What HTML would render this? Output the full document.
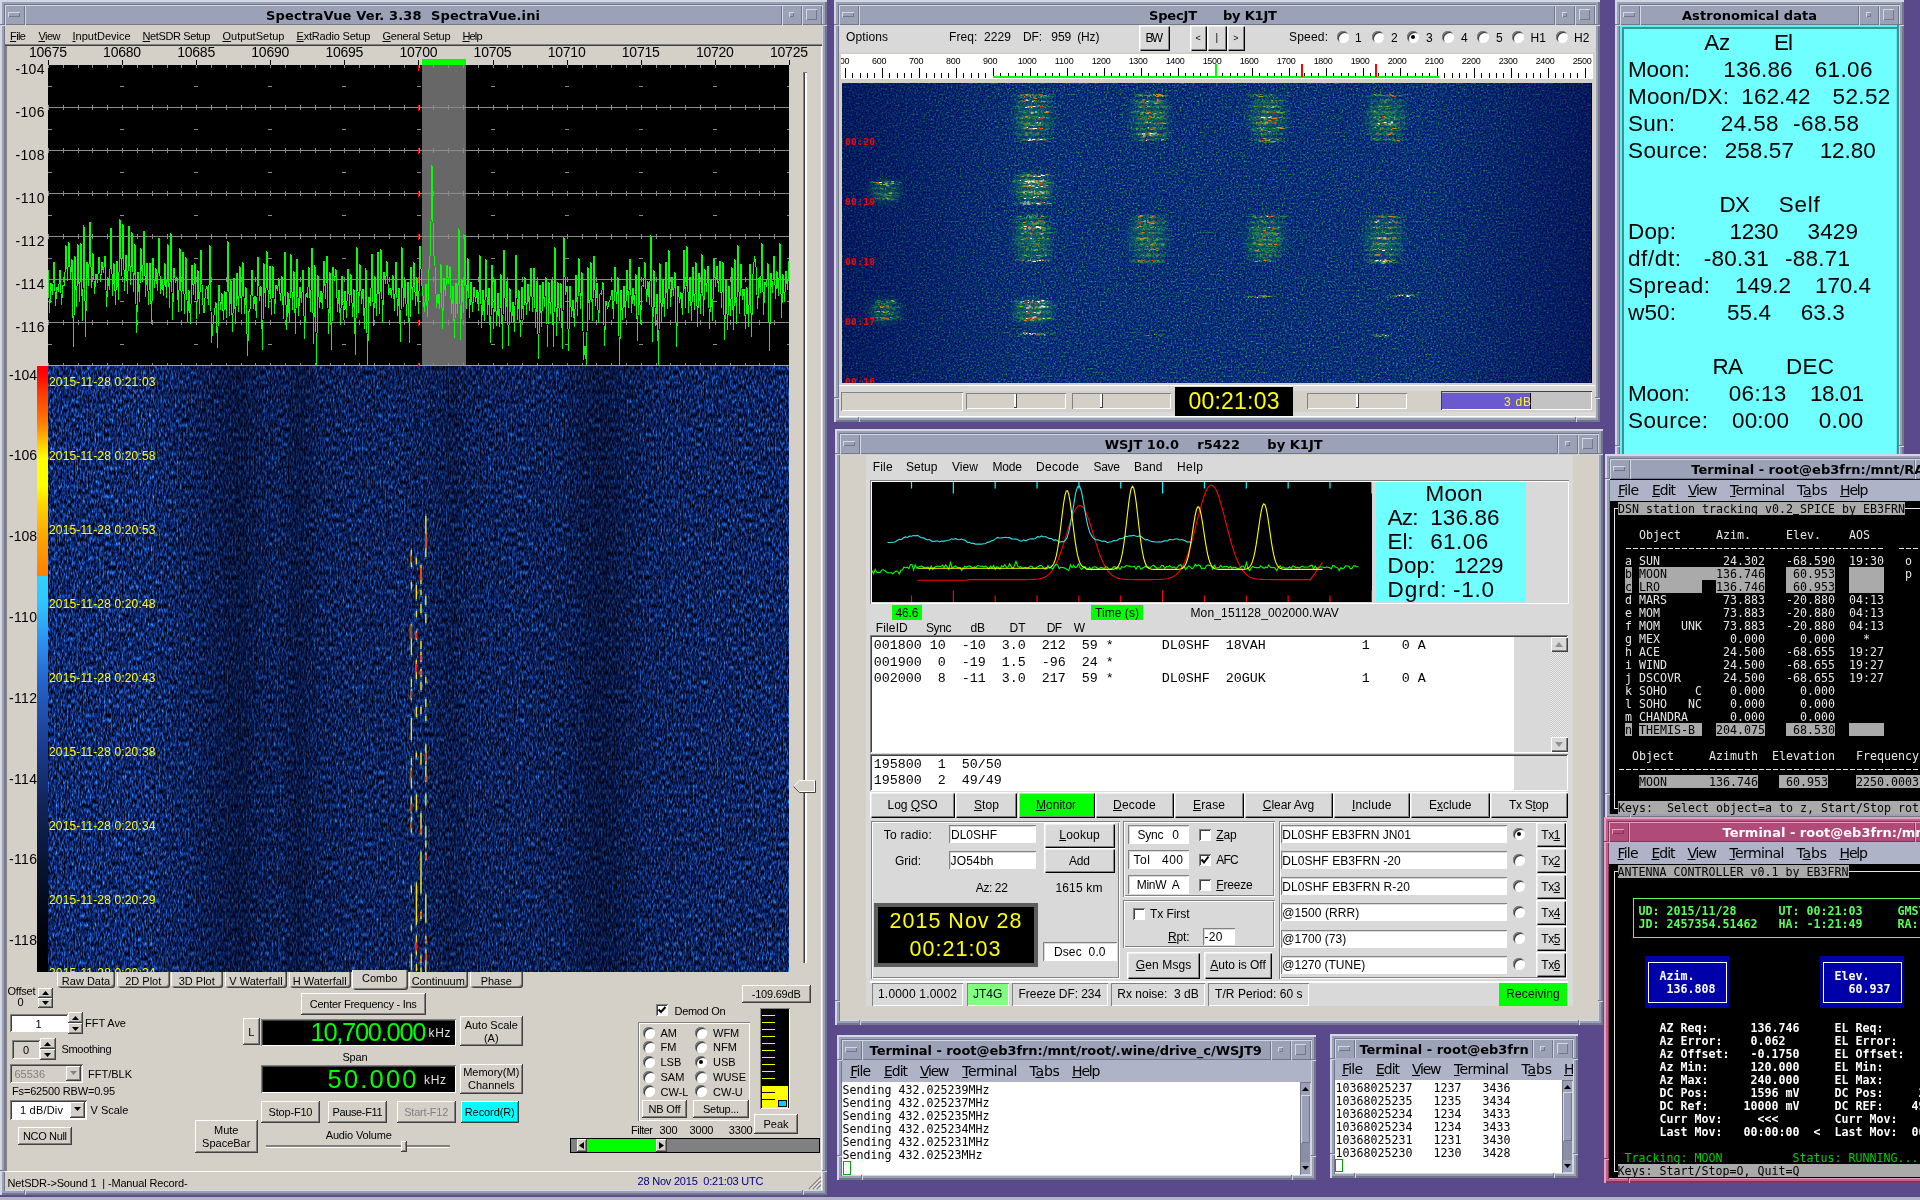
<!DOCTYPE html>
<html lang="en"><head><meta charset="utf-8"><title>Desktop</title>
<style>
html,body{margin:0;padding:0;}
body{width:1920px;height:1200px;overflow:hidden;background:#5a4a8b;position:relative;font-family:"Liberation Sans",sans-serif;}
#scr{position:absolute;left:0;top:0;width:1920px;height:1200px;overflow:hidden;}
#scr div,#scr svg{position:absolute;box-sizing:border-box;}
.t{white-space:pre;color:#000;}
#scr{will-change:transform;}
.sans,.sansb{font-family:"Liberation Sans",sans-serif;}
.sansb{font-weight:bold;}
.dv,.dvb{font-family:"DejaVu Sans",sans-serif;}
.dvb{font-weight:bold;}
.mono,.monob{font-family:"Liberation Mono",monospace;}
.monob{font-weight:bold;}
.dvm,.dvmb{font-family:"DejaVu Sans Mono",monospace;}
.dvmb{font-weight:bold;}
.serif{font-family:"Liberation Serif",serif;}
u{text-decoration:underline;text-underline-offset:1px;}
</style></head>
<body><div id="scr">
<div style="left:0px;top:1197px;width:1920px;height:3px;background:#b2b5c9;"></div>
<div style="left:0px;top:0px;width:827px;height:1195px;background:#9aa0b5;box-shadow:inset 2px 2px 0 #d3d6e3,inset -2px -2px 0 #727889;"></div>
<div style="left:4px;top:4px;width:819px;height:1187px;background:#d4d0c8;box-shadow:inset 1px 1px 0 #727889,inset -1px -1px 0 #d3d6e3;"></div>
<div style="left:0px;top:24px;width:5px;height:1px;background:#727889;"></div>
<div style="left:0px;top:25px;width:5px;height:1px;background:#d3d6e3;"></div>
<div style="left:822px;top:24px;width:5px;height:1px;background:#727889;"></div>
<div style="left:822px;top:25px;width:5px;height:1px;background:#d3d6e3;"></div>
<div style="left:0px;top:1170px;width:5px;height:1px;background:#727889;"></div>
<div style="left:0px;top:1171px;width:5px;height:1px;background:#d3d6e3;"></div>
<div style="left:822px;top:1170px;width:5px;height:1px;background:#727889;"></div>
<div style="left:822px;top:1171px;width:5px;height:1px;background:#d3d6e3;"></div>
<div style="left:24px;top:1190px;width:1px;height:5px;background:#727889;"></div>
<div style="left:25px;top:1190px;width:1px;height:5px;background:#d3d6e3;"></div>
<div style="left:802px;top:1190px;width:1px;height:5px;background:#727889;"></div>
<div style="left:803px;top:1190px;width:1px;height:5px;background:#d3d6e3;"></div>
<div style="left:5px;top:5px;width:817px;height:20px;background:#9ba1b6;"></div>
<div style="left:5px;top:5px;width:20px;height:20px;background:#9ba1b6;box-shadow:inset 1px 1px 0 #d3d6e3,inset -1px -1px 0 #727889;"></div>
<div style="left:8px;top:12px;width:12px;height:5px;background:#9ba1b6;box-shadow:inset 1px 1px 0 #d3d6e3,inset -1px -1px 0 #727889;"></div>
<div style="left:802px;top:5px;width:20px;height:20px;background:#9ba1b6;box-shadow:inset 1px 1px 0 #d3d6e3,inset -1px -1px 0 #727889;"></div>
<div style="left:806px;top:9px;width:11px;height:11px;background:#9ba1b6;box-shadow:inset 1px 1px 0 #d3d6e3,inset -1px -1px 0 #727889;"></div>
<div style="left:782px;top:5px;width:20px;height:20px;background:#9ba1b6;box-shadow:inset 1px 1px 0 #d3d6e3,inset -1px -1px 0 #727889;"></div>
<div style="left:789px;top:12px;width:5px;height:5px;background:#9ba1b6;box-shadow:inset 1px 1px 0 #d3d6e3,inset -1px -1px 0 #727889;"></div>
<div style="left:25px;top:5px;width:757px;height:20px;background:#9ba1b6;box-shadow:inset 1px 1px 0 #d3d6e3,inset -1px -1px 0 #727889;"></div>
<div class="t dvb" style="top:7px;font-size:13px;line-height:17px;letter-spacing:0.13px;left:266px;color:#000000;white-space:pre;">SpectraVue Ver. 3.38  SpectraVue.ini</div>
<div class="t sans" style="top:29px;font-size:11px;line-height:14px;letter-spacing:-0.58px;left:10px;color:#000;"><u>F</u>ile</div>
<div class="t sans" style="top:29px;font-size:11px;line-height:14px;letter-spacing:-0.55px;left:38.5px;color:#000;"><u>V</u>iew</div>
<div class="t sans" style="top:29px;font-size:11px;line-height:14px;left:72.5px;color:#000;"><u>I</u>nputDevice</div>
<div class="t sans" style="top:29px;font-size:11px;line-height:14px;letter-spacing:-0.38px;left:142.5px;color:#000;"><u>N</u>etSDR Setup</div>
<div class="t sans" style="top:29px;font-size:11px;line-height:14px;letter-spacing:0.02px;left:222.5px;color:#000;"><u>O</u>utputSetup</div>
<div class="t sans" style="top:29px;font-size:11px;line-height:14px;letter-spacing:-0.19px;left:296.5px;color:#000;"><u>E</u>xtRadio Setup</div>
<div class="t sans" style="top:29px;font-size:11px;line-height:14px;letter-spacing:-0.24px;left:382.5px;color:#000;"><u>G</u>eneral Setup</div>
<div class="t sans" style="top:29px;font-size:11px;line-height:14px;letter-spacing:-0.87px;left:462.5px;color:#000;"><u>H</u>elp</div>
<div style="left:5px;top:44px;width:817px;height:2px;background:#808080;"></div>
<div style="left:5px;top:45px;width:817px;height:1px;background:#404040;"></div>
<div style="left:5px;top:46px;width:2px;height:1126px;background:#808080;"></div>
<div style="left:821px;top:46px;width:1px;height:1144px;background:#fff;"></div>
<div class="t sans" style="top:43.2px;font-size:14px;line-height:18px;letter-spacing:-0.23px;left:29px;color:#000;">10675</div>
<div style="left:48px;top:60px;width:1px;height:5px;background:#000;"></div>
<div class="t sans" style="top:43.2px;font-size:14px;line-height:18px;letter-spacing:-0.23px;left:103.1px;color:#000;">10680</div>
<div style="left:122px;top:60px;width:1px;height:5px;background:#000;"></div>
<div class="t sans" style="top:43.2px;font-size:14px;line-height:18px;letter-spacing:-0.23px;left:177.2px;color:#000;">10685</div>
<div style="left:196px;top:60px;width:1px;height:5px;background:#000;"></div>
<div class="t sans" style="top:43.2px;font-size:14px;line-height:18px;letter-spacing:-0.23px;left:251.3px;color:#000;">10690</div>
<div style="left:270px;top:60px;width:1px;height:5px;background:#000;"></div>
<div class="t sans" style="top:43.2px;font-size:14px;line-height:18px;letter-spacing:-0.23px;left:325.4px;color:#000;">10695</div>
<div style="left:344px;top:60px;width:1px;height:5px;background:#000;"></div>
<div class="t sans" style="top:43.2px;font-size:14px;line-height:18px;letter-spacing:-0.23px;left:399.5px;color:#000;">10700</div>
<div style="left:418px;top:60px;width:1px;height:5px;background:#000;"></div>
<div class="t sans" style="top:43.2px;font-size:14px;line-height:18px;letter-spacing:-0.23px;left:473.6px;color:#000;">10705</div>
<div style="left:493px;top:60px;width:1px;height:5px;background:#000;"></div>
<div class="t sans" style="top:43.2px;font-size:14px;line-height:18px;letter-spacing:-0.23px;left:547.7px;color:#000;">10710</div>
<div style="left:567px;top:60px;width:1px;height:5px;background:#000;"></div>
<div class="t sans" style="top:43.2px;font-size:14px;line-height:18px;letter-spacing:-0.23px;left:621.8px;color:#000;">10715</div>
<div style="left:641px;top:60px;width:1px;height:5px;background:#000;"></div>
<div class="t sans" style="top:43.2px;font-size:14px;line-height:18px;letter-spacing:-0.23px;left:695.9px;color:#000;">10720</div>
<div style="left:715px;top:60px;width:1px;height:5px;background:#000;"></div>
<div class="t sans" style="top:43.2px;font-size:14px;line-height:18px;letter-spacing:-0.23px;left:770px;color:#000;">10725</div>
<div style="left:789px;top:60px;width:1px;height:5px;background:#000;"></div>
<div class="t sans" style="top:60px;font-size:14px;line-height:18px;letter-spacing:0.33px;left:15.5px;color:#000;">-104</div>
<div class="t sans" style="top:103px;font-size:14px;line-height:18px;letter-spacing:0.33px;left:15.5px;color:#000;">-106</div>
<div class="t sans" style="top:146px;font-size:14px;line-height:18px;letter-spacing:0.33px;left:15.5px;color:#000;">-108</div>
<div class="t sans" style="top:189px;font-size:14px;line-height:18px;letter-spacing:0.67px;left:15.5px;color:#000;">-110</div>
<div class="t sans" style="top:232px;font-size:14px;line-height:18px;letter-spacing:0.67px;left:15.5px;color:#000;">-112</div>
<div class="t sans" style="top:275px;font-size:14px;line-height:18px;letter-spacing:0.67px;left:15.5px;color:#000;">-114</div>
<div class="t sans" style="top:318px;font-size:14px;line-height:18px;letter-spacing:0.67px;left:15.5px;color:#000;">-116</div>
<svg style="left:48px;top:65px" width="741" height="301" viewBox="0 0 741 301" shape-rendering="crispEdges"><rect width="741" height="301" fill="#000"/><rect x="374" y="0" width="44" height="301" fill="#676767"/><path d="M0 42.5 H741 M0.5 40 v5 M15.32 40 v5 M30.14 40 v5 M44.96 40 v5 M59.78 40 v5 M74.6 40 v5 M89.42 40 v5 M104.24 40 v5 M119.06 40 v5 M133.88 40 v5 M148.7 40 v5 M163.52 40 v5 M178.34 40 v5 M193.16 40 v5 M207.98 40 v5 M222.8 40 v5 M237.62 40 v5 M252.44 40 v5 M267.26 40 v5 M282.08 40 v5 M296.9 40 v5 M311.72 40 v5 M326.54 40 v5 M341.36 40 v5 M356.18 40 v5 M371 40 v5 M385.82 40 v5 M400.64 40 v5 M415.46 40 v5 M430.28 40 v5 M445.1 40 v5 M459.92 40 v5 M474.74 40 v5 M489.56 40 v5 M504.38 40 v5 M519.2 40 v5 M534.02 40 v5 M548.84 40 v5 M563.66 40 v5 M578.48 40 v5 M593.3 40 v5 M608.12 40 v5 M622.94 40 v5 M637.76 40 v5 M652.58 40 v5 M667.4 40 v5 M682.22 40 v5 M697.04 40 v5 M711.86 40 v5 M726.68 40 v5 M0 85.5 H741 M0.5 83 v5 M15.32 83 v5 M30.14 83 v5 M44.96 83 v5 M59.78 83 v5 M74.6 83 v5 M89.42 83 v5 M104.24 83 v5 M119.06 83 v5 M133.88 83 v5 M148.7 83 v5 M163.52 83 v5 M178.34 83 v5 M193.16 83 v5 M207.98 83 v5 M222.8 83 v5 M237.62 83 v5 M252.44 83 v5 M267.26 83 v5 M282.08 83 v5 M296.9 83 v5 M311.72 83 v5 M326.54 83 v5 M341.36 83 v5 M356.18 83 v5 M371 83 v5 M385.82 83 v5 M400.64 83 v5 M415.46 83 v5 M430.28 83 v5 M445.1 83 v5 M459.92 83 v5 M474.74 83 v5 M489.56 83 v5 M504.38 83 v5 M519.2 83 v5 M534.02 83 v5 M548.84 83 v5 M563.66 83 v5 M578.48 83 v5 M593.3 83 v5 M608.12 83 v5 M622.94 83 v5 M637.76 83 v5 M652.58 83 v5 M667.4 83 v5 M682.22 83 v5 M697.04 83 v5 M711.86 83 v5 M726.68 83 v5 M0 128.5 H741 M0.5 126 v5 M15.32 126 v5 M30.14 126 v5 M44.96 126 v5 M59.78 126 v5 M74.6 126 v5 M89.42 126 v5 M104.24 126 v5 M119.06 126 v5 M133.88 126 v5 M148.7 126 v5 M163.52 126 v5 M178.34 126 v5 M193.16 126 v5 M207.98 126 v5 M222.8 126 v5 M237.62 126 v5 M252.44 126 v5 M267.26 126 v5 M282.08 126 v5 M296.9 126 v5 M311.72 126 v5 M326.54 126 v5 M341.36 126 v5 M356.18 126 v5 M371 126 v5 M385.82 126 v5 M400.64 126 v5 M415.46 126 v5 M430.28 126 v5 M445.1 126 v5 M459.92 126 v5 M474.74 126 v5 M489.56 126 v5 M504.38 126 v5 M519.2 126 v5 M534.02 126 v5 M548.84 126 v5 M563.66 126 v5 M578.48 126 v5 M593.3 126 v5 M608.12 126 v5 M622.94 126 v5 M637.76 126 v5 M652.58 126 v5 M667.4 126 v5 M682.22 126 v5 M697.04 126 v5 M711.86 126 v5 M726.68 126 v5 M0 171.5 H741 M0.5 169 v5 M15.32 169 v5 M30.14 169 v5 M44.96 169 v5 M59.78 169 v5 M74.6 169 v5 M89.42 169 v5 M104.24 169 v5 M119.06 169 v5 M133.88 169 v5 M148.7 169 v5 M163.52 169 v5 M178.34 169 v5 M193.16 169 v5 M207.98 169 v5 M222.8 169 v5 M237.62 169 v5 M252.44 169 v5 M267.26 169 v5 M282.08 169 v5 M296.9 169 v5 M311.72 169 v5 M326.54 169 v5 M341.36 169 v5 M356.18 169 v5 M371 169 v5 M385.82 169 v5 M400.64 169 v5 M415.46 169 v5 M430.28 169 v5 M445.1 169 v5 M459.92 169 v5 M474.74 169 v5 M489.56 169 v5 M504.38 169 v5 M519.2 169 v5 M534.02 169 v5 M548.84 169 v5 M563.66 169 v5 M578.48 169 v5 M593.3 169 v5 M608.12 169 v5 M622.94 169 v5 M637.76 169 v5 M652.58 169 v5 M667.4 169 v5 M682.22 169 v5 M697.04 169 v5 M711.86 169 v5 M726.68 169 v5 M0 214.5 H741 M0.5 212 v5 M15.32 212 v5 M30.14 212 v5 M44.96 212 v5 M59.78 212 v5 M74.6 212 v5 M89.42 212 v5 M104.24 212 v5 M119.06 212 v5 M133.88 212 v5 M148.7 212 v5 M163.52 212 v5 M178.34 212 v5 M193.16 212 v5 M207.98 212 v5 M222.8 212 v5 M237.62 212 v5 M252.44 212 v5 M267.26 212 v5 M282.08 212 v5 M296.9 212 v5 M311.72 212 v5 M326.54 212 v5 M341.36 212 v5 M356.18 212 v5 M371 212 v5 M385.82 212 v5 M400.64 212 v5 M415.46 212 v5 M430.28 212 v5 M445.1 212 v5 M459.92 212 v5 M474.74 212 v5 M489.56 212 v5 M504.38 212 v5 M519.2 212 v5 M534.02 212 v5 M548.84 212 v5 M563.66 212 v5 M578.48 212 v5 M593.3 212 v5 M608.12 212 v5 M622.94 212 v5 M637.76 212 v5 M652.58 212 v5 M667.4 212 v5 M682.22 212 v5 M697.04 212 v5 M711.86 212 v5 M726.68 212 v5 M0 257.5 H741 M0.5 255 v5 M15.32 255 v5 M30.14 255 v5 M44.96 255 v5 M59.78 255 v5 M74.6 255 v5 M89.42 255 v5 M104.24 255 v5 M119.06 255 v5 M133.88 255 v5 M148.7 255 v5 M163.52 255 v5 M178.34 255 v5 M193.16 255 v5 M207.98 255 v5 M222.8 255 v5 M237.62 255 v5 M252.44 255 v5 M267.26 255 v5 M282.08 255 v5 M296.9 255 v5 M311.72 255 v5 M326.54 255 v5 M341.36 255 v5 M356.18 255 v5 M371 255 v5 M385.82 255 v5 M400.64 255 v5 M415.46 255 v5 M430.28 255 v5 M445.1 255 v5 M459.92 255 v5 M474.74 255 v5 M489.56 255 v5 M504.38 255 v5 M519.2 255 v5 M534.02 255 v5 M548.84 255 v5 M563.66 255 v5 M578.48 255 v5 M593.3 255 v5 M608.12 255 v5 M622.94 255 v5 M637.76 255 v5 M652.58 255 v5 M667.4 255 v5 M682.22 255 v5 M697.04 255 v5 M711.86 255 v5 M726.68 255 v5 M0.5 0 v3 M0.5 301 v-3 M15.32 0 v3 M15.32 301 v-3 M30.14 0 v3 M30.14 301 v-3 M44.96 0 v3 M44.96 301 v-3 M59.78 0 v3 M59.78 301 v-3 M74.6 0 v3 M74.6 301 v-3 M89.42 0 v3 M89.42 301 v-3 M104.24 0 v3 M104.24 301 v-3 M119.06 0 v3 M119.06 301 v-3 M133.88 0 v3 M133.88 301 v-3 M148.7 0 v3 M148.7 301 v-3 M163.52 0 v3 M163.52 301 v-3 M178.34 0 v3 M178.34 301 v-3 M193.16 0 v3 M193.16 301 v-3 M207.98 0 v3 M207.98 301 v-3 M222.8 0 v3 M222.8 301 v-3 M237.62 0 v3 M237.62 301 v-3 M252.44 0 v3 M252.44 301 v-3 M267.26 0 v3 M267.26 301 v-3 M282.08 0 v3 M282.08 301 v-3 M296.9 0 v3 M296.9 301 v-3 M311.72 0 v3 M311.72 301 v-3 M326.54 0 v3 M326.54 301 v-3 M341.36 0 v3 M341.36 301 v-3 M356.18 0 v3 M356.18 301 v-3 M371 0 v3 M371 301 v-3 M385.82 0 v3 M385.82 301 v-3 M400.64 0 v3 M400.64 301 v-3 M415.46 0 v3 M415.46 301 v-3 M430.28 0 v3 M430.28 301 v-3 M445.1 0 v3 M445.1 301 v-3 M459.92 0 v3 M459.92 301 v-3 M474.74 0 v3 M474.74 301 v-3 M489.56 0 v3 M489.56 301 v-3 M504.38 0 v3 M504.38 301 v-3 M519.2 0 v3 M519.2 301 v-3 M534.02 0 v3 M534.02 301 v-3 M548.84 0 v3 M548.84 301 v-3 M563.66 0 v3 M563.66 301 v-3 M578.48 0 v3 M578.48 301 v-3 M593.3 0 v3 M593.3 301 v-3 M608.12 0 v3 M608.12 301 v-3 M622.94 0 v3 M622.94 301 v-3 M637.76 0 v3 M637.76 301 v-3 M652.58 0 v3 M652.58 301 v-3 M667.4 0 v3 M667.4 301 v-3 M682.22 0 v3 M682.22 301 v-3 M697.04 0 v3 M697.04 301 v-3 M711.86 0 v3 M711.86 301 v-3 M726.68 0 v3 M726.68 301 v-3 M0 21.5 h4 M72.1 21.5 h4 M146.2 21.5 h4 M220.3 21.5 h4 M294.4 21.5 h4 M368.5 21.5 h4 M442.6 21.5 h4 M516.7 21.5 h4 M590.8 21.5 h4 M664.9 21.5 h4 M739 21.5 h4 M0 64.5 h4 M72.1 64.5 h4 M146.2 64.5 h4 M220.3 64.5 h4 M294.4 64.5 h4 M368.5 64.5 h4 M442.6 64.5 h4 M516.7 64.5 h4 M590.8 64.5 h4 M664.9 64.5 h4 M739 64.5 h4 M0 107.5 h4 M72.1 107.5 h4 M146.2 107.5 h4 M220.3 107.5 h4 M294.4 107.5 h4 M368.5 107.5 h4 M442.6 107.5 h4 M516.7 107.5 h4 M590.8 107.5 h4 M664.9 107.5 h4 M739 107.5 h4 M0 150.5 h4 M72.1 150.5 h4 M146.2 150.5 h4 M220.3 150.5 h4 M294.4 150.5 h4 M368.5 150.5 h4 M442.6 150.5 h4 M516.7 150.5 h4 M590.8 150.5 h4 M664.9 150.5 h4 M739 150.5 h4 M0 193.5 h4 M72.1 193.5 h4 M146.2 193.5 h4 M220.3 193.5 h4 M294.4 193.5 h4 M368.5 193.5 h4 M442.6 193.5 h4 M516.7 193.5 h4 M590.8 193.5 h4 M664.9 193.5 h4 M739 193.5 h4 M0 236.5 h4 M72.1 236.5 h4 M146.2 236.5 h4 M220.3 236.5 h4 M294.4 236.5 h4 M368.5 236.5 h4 M442.6 236.5 h4 M516.7 236.5 h4 M590.8 236.5 h4 M664.9 236.5 h4 M739 236.5 h4 M0 279.5 h4 M72.1 279.5 h4 M146.2 279.5 h4 M220.3 279.5 h4 M294.4 279.5 h4 M368.5 279.5 h4 M442.6 279.5 h4 M516.7 279.5 h4 M590.8 279.5 h4 M664.9 279.5 h4 M739 279.5 h4" stroke="#8c8c8c" stroke-width="1" fill="none"/><path d="M0 300.5H741" stroke="#a0a0a0" stroke-width="1" fill="none"/><path d="M370.5 0 v6 M370.5 40 v6 M370.5 83 v6 M370.5 126 v6 M370.5 169 v6 M370.5 212 v6 M370.5 255 v6 M370.5 298 v6" stroke="#ff0000" stroke-width="1" fill="none"/><polyline points="0,204.72 1.5,247.63 3,218.19 4.5,229.47 6,196.94 7.5,241.07 9,222.21 10.5,226.52 12,205.06 13.5,239.62 15,220.16 16.5,220.64 18,180.48 19.5,215.74 21,177.32 22.5,214.19 24,193.91 25.5,281.65 27,191.3 28.5,242.08 30,179.43 31.5,237.19 33,178.12 34.5,256.03 36,160.44 37.5,271.87 39,196.89 40.5,220.88 42,156.68 43.5,223.36 45,188.35 46.5,228.57 48,209.44 49.5,217.57 51,191.68 52.5,216.77 54,196.89 55.5,208.3 57,190.72 58.5,242.31 60,213.2 61.5,224.74 63,162.55 64.5,230.69 66,198.36 67.5,239.54 69,196.06 70.5,235.22 72,154.5 73.5,211.39 75,159.19 76.5,225.97 78,189.7 79.5,229.26 81,160.81 82.5,219.69 84,167.22 85.5,226.54 87,179.17 88.5,268.28 90,206.57 91.5,236.84 93,183.27 94.5,217.48 96,165.62 97.5,231.88 99,198.02 100.5,240.13 102,197.56 103.5,259.1 105,192.61 106.5,223.19 108,203.32 109.5,226.06 111,172.53 112.5,228.79 114,214.04 115.5,230.96 117,198.19 118.5,232.71 120,179.46 121.5,242.99 123,168.34 124.5,255.1 126,202.7 127.5,218.28 129,212.22 130.5,246.68 132,183.05 133.5,246.47 135,186.52 136.5,249.01 138,192.38 139.5,256.84 141,225.45 142.5,259.22 144,200.15 145.5,229.84 147,198.45 148.5,253.78 150,205.2 151.5,248.52 153,184.57 154.5,235.93 156,248.11 157.5,225.7 159,221.46 160.5,240.08 162,180.42 163.5,278.22 165,259.07 166.5,246 168,237.46 169.5,283.48 171,219.53 172.5,244.64 174,228.46 175.5,254.56 177,226.32 178.5,252.9 180,175.95 181.5,251.3 183,215.51 184.5,266.51 186,212.8 187.5,258.87 189,207.72 190.5,247.05 192,201.45 193.5,248.54 195,197.06 196.5,248.87 198,222.23 199.5,291.24 201,246.61 202.5,242.78 204,205.01 205.5,244.22 207,230.58 208.5,253.02 210,191.72 211.5,235.77 213,221.4 214.5,284.91 216,198.42 217.5,241.93 219,186.5 220.5,243.37 222,200.64 223.5,250.08 225,201.16 226.5,248.95 228,220.06 229.5,225.69 231,213.36 232.5,236.46 234,211.14 235.5,254.33 237,186.69 238.5,265.39 240,227.33 241.5,257.41 243,189.29 244.5,245.21 246,206.13 247.5,268.96 249,193.74 250.5,250.79 252,222.24 253.5,238.31 255,204.54 256.5,273.51 258,228.53 259.5,232.81 261,202.2 262.5,247.23 264,182.54 265.5,279.02 267,199.71 268.5,300 270,210.27 271.5,242.54 273,225.65 274.5,244.45 276,196.14 277.5,233.55 279,190.53 280.5,269.49 282,207.19 283.5,284.65 285,201.8 286.5,215.77 288,204.28 289.5,246.94 291,224.94 292.5,259.9 294,210.81 295.5,254.67 297,225.76 298.5,252.73 300,204.08 301.5,241.29 303,209.29 304.5,251.83 306,224.5 307.5,290.24 309,181.96 310.5,247.63 312,199.28 313.5,238.99 315,223.75 316.5,263.68 318,203.08 319.5,300 321,232.31 322.5,241.09 324,188.73 325.5,260.62 327,211.48 328.5,251.3 330,186.86 331.5,248.98 333,183.94 334.5,258.42 336,207.38 337.5,219.2 339,196.27 340.5,229.79 342,223.11 343.5,233.33 345,210.17 346.5,245.56 348,196.75 349.5,250.79 351,222.82 352.5,277.3 354,181.96 355.5,242.23 357,215.04 358.5,251.14 360,216.76 361.5,278.33 363,202.03 364.5,234.88 366,197.5 367.5,240.99 369,212.25 370.5,249.03 372,181.09 373.5,215.55 375,230.54 376.5,247.32 378,218.59 379.5,252.38 381,204.14 382.5,185 384,100 385.5,185 387,201.13 388.5,243.08 390,228.85 391.5,243.71 393,199.26 394.5,263.8 396,213.05 397.5,230.79 399,199.83 400.5,218.72 402,201.23 403.5,249.27 405,220.76 406.5,272.63 408,217.6 409.5,249.25 411,163.48 412.5,275.18 414,214.25 415.5,248.2 417,169.6 418.5,243.67 420,193.18 421.5,252.84 423,216.62 424.5,247.05 426,221.72 427.5,236.84 429,224.57 430.5,246.23 432,189.91 433.5,263.36 435,225.17 436.5,256.25 438,194.14 439.5,249.69 441,222.86 442.5,278.17 444,199.65 445.5,264.46 447,213.65 448.5,261.29 450,227.6 451.5,262.3 453,208.92 454.5,283.72 456,184.62 457.5,255.79 459,216.29 460.5,280.53 462,223.46 463.5,258.12 465,236.83 466.5,267.45 468,189.53 469.5,254.56 471,225.33 472.5,271.98 474,221.75 475.5,255.17 477,212.5 478.5,250.17 480,218.93 481.5,245.82 483,202.78 484.5,246.96 486,202.81 487.5,263.16 489,216.23 490.5,294.21 492,220.08 493.5,261.75 495,217.06 496.5,241.72 498,212.03 499.5,281.78 501,217.32 502.5,248.74 504,214.86 505.5,281.52 507,181.9 508.5,271.16 510,217.35 511.5,256.34 513,217.96 514.5,284.09 516,172.28 517.5,230.34 519,220.68 520.5,286.12 522,221 523.5,251.93 525,234.73 526.5,261.74 528,210 529.5,250.99 531,193.03 532.5,243.87 534,207.44 535.5,295.09 537,281.28 538.5,300 540,202.29 541.5,254.86 543,197.3 544.5,256.14 546,190.7 547.5,241.25 549,217.89 550.5,257.52 552,228.98 553.5,229.06 555,217.2 556.5,280.76 558,235.63 559.5,244.02 561,237.08 562.5,234.21 564,224.65 565.5,253.71 567,202.03 568.5,239.03 570,211.9 571.5,300 573,224.81 574.5,254.52 576,220.59 577.5,252.54 579,204.64 580.5,242.49 582,193.71 583.5,247.91 585,222.88 586.5,240.49 588,209.05 589.5,276.16 591,201.86 592.5,258.57 594,220.61 595.5,221.48 597,197.19 598.5,236.87 600,216.4 601.5,239.67 603,169.89 604.5,276.6 606,205.07 607.5,260.5 609,228.74 610.5,300 612,198.06 613.5,256.68 615,213.96 616.5,251.75 618,196.96 619.5,243.94 621,185.05 622.5,241.9 624,211.9 625.5,231.37 627,206.93 628.5,281.58 630,220.94 631.5,237.7 633,227.43 634.5,250.39 636,184.68 637.5,242.59 639,181.17 640.5,248.44 642,211.6 643.5,255.62 645,201.55 646.5,245.12 648,197.5 649.5,261.67 651,207.63 652.5,248.97 654,189.13 655.5,251.02 657,204.32 658.5,227.02 660,200.55 661.5,263.96 663,215.07 664.5,255.51 666,193.69 667.5,222.08 669,200.88 670.5,226.49 672,196.02 673.5,242.56 675,197.32 676.5,275.43 678,214.55 679.5,264.99 681,220.74 682.5,250.73 684,202.18 685.5,265.43 687,193.9 688.5,258.81 690,179.97 691.5,248.74 693,198.81 694.5,234.85 696,224.05 697.5,263.88 699,222.25 700.5,261.89 702,198.62 703.5,272.08 705,209.14 706.5,190.57 708,201.9 709.5,243.9 711,212.64 712.5,228.31 714,178.44 715.5,249.99 717,216.74 718.5,222.12 720,197.91 721.5,286.01 723,207.74 724.5,228.36 726,190.97 727.5,233.77 729,206.46 730.5,231.12 732,178.35 733.5,253.03 735,209.48 736.5,237.44 738,205.95 739.5,225.44 741,196.19" stroke="#00ff00" stroke-width="1" fill="none" shape-rendering="crispEdges"/></svg>
<div style="left:422px;top:59px;width:44px;height:6px;background:#00ff00;"></div>
<svg style="left:48px;top:366px" width="741" height="606" viewBox="0 0 741 606"><defs><filter id="wfn" x="0" y="0" width="100%" height="100%" color-interpolation-filters="sRGB"><feTurbulence type="fractalNoise" baseFrequency="0.62 0.21" numOctaves="2" seed="11" result="n"/><feColorMatrix in="n" type="matrix" values="1 0 0 0 0  1 0 0 0 0  1 0 0 0 0  0 0 0 0 1"/><feComponentTransfer><feFuncR type="table" tableValues="0 0 0 0 0.02 0.05 0.09 0.13 0.17 0.2 0.2"/><feFuncG type="table" tableValues="0 0 0.01 0.03 0.08 0.15 0.25 0.36 0.55 0.75 0.8"/><feFuncB type="table" tableValues="0 0.01 0.05 0.12 0.25 0.41 0.59 0.77 0.95 1 1"/></feComponentTransfer></filter><linearGradient id="wfs" x1="0" x2="1" y1="0" y2="0"><stop offset="0.0000" stop-color="#000418" stop-opacity="0.00"/><stop offset="0.1377" stop-color="#000418" stop-opacity="0.02"/><stop offset="0.1849" stop-color="#000418" stop-opacity="0.18"/><stop offset="0.2254" stop-color="#000418" stop-opacity="0.36"/><stop offset="0.2591" stop-color="#000418" stop-opacity="0.50"/><stop offset="0.2888" stop-color="#000418" stop-opacity="0.30"/><stop offset="0.3131" stop-color="#000418" stop-opacity="0.26"/><stop offset="0.3374" stop-color="#000418" stop-opacity="0.48"/><stop offset="0.3644" stop-color="#000418" stop-opacity="0.28"/><stop offset="0.4008" stop-color="#000418" stop-opacity="0.20"/><stop offset="0.4750" stop-color="#000418" stop-opacity="0.18"/><stop offset="0.5223" stop-color="#000418" stop-opacity="0.28"/><stop offset="0.5452" stop-color="#000418" stop-opacity="0.40"/><stop offset="0.5722" stop-color="#000418" stop-opacity="0.22"/><stop offset="0.6370" stop-color="#000418" stop-opacity="0.18"/><stop offset="0.6910" stop-color="#000418" stop-opacity="0.25"/><stop offset="0.7247" stop-color="#000418" stop-opacity="0.42"/><stop offset="0.7517" stop-color="#000418" stop-opacity="0.50"/><stop offset="0.7827" stop-color="#000418" stop-opacity="0.34"/><stop offset="0.8124" stop-color="#000418" stop-opacity="0.20"/><stop offset="0.8799" stop-color="#000418" stop-opacity="0.14"/><stop offset="0.9474" stop-color="#000418" stop-opacity="0.12"/><stop offset="1.0000" stop-color="#000418" stop-opacity="0.10"/></linearGradient></defs><rect width="741" height="606" fill="#0c2c74"/><rect width="741" height="606" filter="url(#wfn)"/><rect width="741" height="606" fill="url(#wfs)"/><path d="M377.8 148v45 M363.4 182v21 M368.4 190v10 M373 197v23 M373 222v9 M363.4 214v11 M368.4 217v18 M377.8 228v13 M373 236v13 M368.4 243v10 M377.8 246v13 M363.4 256v35 M368.4 263v13 M373 273v12 M373 284v14 M368.4 292v23 M373 301v12 M377.8 309v10 M363.4 311v12 M363.4 321v15 M373 314v12 M377.8 331v12 M368.4 339v14 M373 339v11 M377.8 348v9 M363.4 350v26 M377.8 376.51v24 M368.4 384.46v9 M373 384.79v16 M363.4 389.9v11 M377.8 397.8v13 M363.4 400.27v24 M377.8 406.49v11 M363.4 412.62v11 M363.4 428.8v20 M377.8 425.59v16 M368.4 426.15v20 M363.4 438.08v11 M363.4 448.74v20 M373 444.93v20 M373 456.86v13 M377.8 457.63v16 M377.8 472.53v11 M377.8 484.8v11 M373 483.82v16 M373 493.1v24 M373 505.61v24 M363.4 517.7v11 M368.4 514.82v24 M368.4 529.08v20 M377.8 526.29v16 M377.8 534.58v24 M368.4 544.69v16 M373 543.95v11 M363.4 557.31v9 M377.8 567.8v11 M368.4 567.37v24 M377.8 581.13v16 M373 587.44v11 M377.8 589.93v20 M363.4 585.7v20 M373 599.4v24 M368.4 596.03v11" stroke="#38c8ff" stroke-width="1.2" fill="none" opacity="0.55"/><path d="M377.8 150v41 M363.4 184v17 M368.4 192v6 M373 199v19 M373 224v5 M363.4 216v7 M368.4 219v14 M377.8 230v9 M373 238v9 M368.4 245v6 M377.8 248v9 M363.4 258v31 M368.4 265v9 M373 275v8 M373 286v10 M368.4 294v19 M373 303v8 M377.8 311v6 M363.4 313v8 M363.4 323v11 M373 316v8 M377.8 333v8 M368.4 341v10 M373 341v7 M377.8 350v5 M363.4 352v22 M377.8 378.51v20 M368.4 386.46v5 M373 386.79v12 M363.4 391.9v7 M377.8 399.8v9 M363.4 402.27v20 M377.8 408.49v7 M363.4 414.62v7 M363.4 430.8v16 M377.8 427.59v12 M368.4 428.15v16 M363.4 440.08v7 M363.4 450.74v16 M373 446.93v16 M373 458.86v9 M377.8 459.63v12 M377.8 474.53v7 M377.8 486.8v7 M373 485.82v12 M373 495.1v20 M373 507.61v20 M363.4 519.7v7 M368.4 516.82v20 M368.4 531.08v16 M377.8 528.29v12 M377.8 536.58v20 M368.4 546.69v12 M373 545.95v7 M363.4 559.31v5 M377.8 569.8v7 M368.4 569.37v20 M377.8 583.13v12 M373 589.44v7 M377.8 591.93v16 M363.4 587.7v16 M373 601.4v20 M368.4 598.03v7" stroke="#ffe000" stroke-width="1.3" fill="none"/><path d="M377.8 166.5v17 M363.4 188.5v9 M373 200.5v15 M363.4 258.5v15 M368.4 265.5v8 M373 287.5v8 M368.4 296.5v11 M373 303.5v7 M363.4 323.5v10 M377.8 385.6v10.95 M363.4 403.16v10.09 M377.8 409.21v6.79 M363.4 436.76v10.44 M363.4 454.5v8.78 M373 461.59v6.77 M377.8 487.7v6.6 M373 545.68v6.13 M377.8 571.44v5.86 M368.4 575.27v10.37 M377.8 585.47v10.17 M373 591.2v5.75" stroke="#ff9000" stroke-width="1.3" fill="none"/><path d="M377.8 168v14 M363.4 190v6 M373 202v12 M363.4 260v12 M368.4 267v5 M373 289v5 M368.4 298v8 M373 305v4 M363.4 325v7 M377.8 387.1v7.95 M363.4 404.66v7.09 M377.8 410.71v3.79 M363.4 438.26v7.44 M363.4 456v5.78 M373 463.09v3.77 M377.8 489.2v3.6 M373 547.18v3.13 M377.8 572.94v2.86 M368.4 576.77v7.37 M377.8 586.97v7.17 M373 592.7v2.75" stroke="#ff1800" stroke-width="1.3" fill="none"/></svg>
<div style="left:48px;top:366px;width:741px;height:606px;overflow:hidden">
<div class="t sans" style="top:8.25px;font-size:12px;line-height:16px;letter-spacing:0.15px;left:1px;color:#ffff00;">2015-11-28 0:21:03</div>
<div class="t sans" style="top:82.15px;font-size:12px;line-height:16px;letter-spacing:0.15px;left:1px;color:#ffff00;">2015-11-28 0:20:58</div>
<div class="t sans" style="top:156.05px;font-size:12px;line-height:16px;letter-spacing:0.15px;left:1px;color:#ffff00;">2015-11-28 0:20:53</div>
<div class="t sans" style="top:229.95px;font-size:12px;line-height:16px;letter-spacing:0.15px;left:1px;color:#ffff00;">2015-11-28 0:20:48</div>
<div class="t sans" style="top:303.85px;font-size:12px;line-height:16px;letter-spacing:0.15px;left:1px;color:#ffff00;">2015-11-28 0:20:43</div>
<div class="t sans" style="top:377.75px;font-size:12px;line-height:16px;letter-spacing:0.15px;left:1px;color:#ffff00;">2015-11-28 0:20:38</div>
<div class="t sans" style="top:451.65px;font-size:12px;line-height:16px;letter-spacing:0.15px;left:1px;color:#ffff00;">2015-11-28 0:20:34</div>
<div class="t sans" style="top:525.55px;font-size:12px;line-height:16px;letter-spacing:0.15px;left:1px;color:#ffff00;">2015-11-28 0:20:29</div>
<div class="t sans" style="top:599.45px;font-size:12px;line-height:16px;letter-spacing:0.15px;left:1px;color:#ffff00;">2015-11-28 0:20:24</div>
</div>
<div style="left:37px;top:366px;width:11px;height:606px;background:linear-gradient(to bottom,#ff0000 0px,#ff0000 6px,#ff4000 30px,#ff8000 58px,#ffc000 75px,#ffff00 92px,#ffff00 120px,#ffd000 140px,#ffa000 175px,#ff8000 210px,#30d0ff 210px,#30c8ff 235px,#2c90f0 275px,#2460c8 320px,#1a3c90 380px,#102458 440px,#081430 500px,#020410 560px,#000 606px);"></div>
<div class="t sans" style="top:365.5px;font-size:14px;line-height:18px;left:9px;color:#000;">-104</div>
<div class="t sans" style="top:446.3px;font-size:14px;line-height:18px;left:9px;color:#000;">-106</div>
<div class="t sans" style="top:527.1px;font-size:14px;line-height:18px;left:9px;color:#000;">-108</div>
<div class="t sans" style="top:607.9px;font-size:14px;line-height:18px;letter-spacing:0.34px;left:9px;color:#000;">-110</div>
<div class="t sans" style="top:688.7px;font-size:14px;line-height:18px;letter-spacing:0.34px;left:9px;color:#000;">-112</div>
<div class="t sans" style="top:769.5px;font-size:14px;line-height:18px;letter-spacing:0.34px;left:9px;color:#000;">-114</div>
<div class="t sans" style="top:850.3px;font-size:14px;line-height:18px;letter-spacing:0.34px;left:9px;color:#000;">-116</div>
<div class="t sans" style="top:931.1px;font-size:14px;line-height:18px;letter-spacing:0.34px;left:9px;color:#000;">-118</div>
<div style="left:803px;top:72px;width:4px;height:891px;background:#fff;box-shadow:inset 1px 1px 0 #808080,inset 2px 0 0 #404040;"></div>
<svg style="left:793px;top:780px" width="23" height="13"><path d="M0.5 6.5L6.5 0.5H21.5V11.5H6.5z" fill="#d4d0c8" stroke="#fff"/><path d="M0.5 6.5L6.5 12.5H22.5V0.5" fill="none" stroke="#404040"/></svg>
<div style="left:57px;top:972px;width:58px;height:16px;background:#d4d0c8;border-radius:0 0 3px 3px;box-shadow:inset 1px 0 0 #fff,inset -1px -1px 0 #404040,inset -2px -2px 0 #808080;"></div>
<div class="t sans" style="top:973.5px;font-size:11px;line-height:14px;left:61.85px;">Raw Data</div>
<div style="left:117px;top:972px;width:52.5px;height:16px;background:#d4d0c8;border-radius:0 0 3px 3px;box-shadow:inset 1px 0 0 #fff,inset -1px -1px 0 #404040,inset -2px -2px 0 #808080;"></div>
<div class="t sans" style="top:973.5px;font-size:11px;line-height:14px;left:125.21px;">2D Plot</div>
<div style="left:171px;top:972px;width:51.5px;height:16px;background:#d4d0c8;border-radius:0 0 3px 3px;box-shadow:inset 1px 0 0 #fff,inset -1px -1px 0 #404040,inset -2px -2px 0 #808080;"></div>
<div class="t sans" style="top:973.5px;font-size:11px;line-height:14px;left:178.71px;">3D Plot</div>
<div style="left:225px;top:972px;width:62px;height:16px;background:#d4d0c8;border-radius:0 0 3px 3px;box-shadow:inset 1px 0 0 #fff,inset -1px -1px 0 #404040,inset -2px -2px 0 #808080;"></div>
<div class="t sans" style="top:973.5px;font-size:11px;line-height:14px;left:229.31px;">V Waterfall</div>
<div style="left:289px;top:972px;width:61.5px;height:16px;background:#d4d0c8;border-radius:0 0 3px 3px;box-shadow:inset 1px 0 0 #fff,inset -1px -1px 0 #404040,inset -2px -2px 0 #808080;"></div>
<div class="t sans" style="top:973.5px;font-size:11px;line-height:14px;left:292.75px;">H Waterfall</div>
<div style="left:352px;top:970px;width:55.5px;height:20px;background:#d4d0c8;border-radius:0 0 3px 3px;box-shadow:inset 1px 0 0 #fff,inset -1px -1px 0 #404040,inset -2px -2px 0 #808080;"></div>
<div class="t sans" style="top:971px;font-size:11px;line-height:14px;left:362.02px;">Combo</div>
<div style="left:409px;top:972px;width:58.5px;height:16px;background:#d4d0c8;border-radius:0 0 3px 3px;box-shadow:inset 1px 0 0 #fff,inset -1px -1px 0 #404040,inset -2px -2px 0 #808080;"></div>
<div class="t sans" style="top:973.5px;font-size:11px;line-height:14px;left:411.65px;">Continuum</div>
<div style="left:470px;top:972px;width:52.5px;height:16px;background:#d4d0c8;border-radius:0 0 3px 3px;box-shadow:inset 1px 0 0 #fff,inset -1px -1px 0 #404040,inset -2px -2px 0 #808080;"></div>
<div class="t sans" style="top:973.5px;font-size:11px;line-height:14px;left:480.65px;">Phase</div>
<div class="t sans" style="top:984px;font-size:11px;line-height:14px;letter-spacing:-0.23px;left:7.5px;">Offset</div>
<div class="t sans" style="top:995px;font-size:11px;line-height:14px;left:17.5px;">0</div>
<div style="left:37.5px;top:987.5px;width:15.5px;height:10px;background:#d4d0c8;box-shadow:inset -1px -1px 0 #404040,inset 1px 1px 0 #ffffff,inset -2px -2px 0 #808080;"></div>
<svg style="left:41.75px;top:990.5px" width="7" height="4"><path d="M0 4L3.5 0L7 4z" fill="#000"/></svg>
<div style="left:37.5px;top:997.5px;width:15.5px;height:10px;background:#d4d0c8;box-shadow:inset -1px -1px 0 #404040,inset 1px 1px 0 #ffffff,inset -2px -2px 0 #808080;"></div>
<svg style="left:41.75px;top:1000.5px" width="7" height="4"><path d="M0 0L3.5 4L7 0z" fill="#000"/></svg>
<div style="left:10px;top:1014px;width:58px;height:18px;background:#fff;box-shadow:inset 1px 1px 0 #808080,inset -1px -1px 0 #ffffff,inset 2px 2px 0 #404040;"></div>
<div class="t sans" style="top:1016.5px;font-size:11px;line-height:14px;left:35.44px;">1</div>
<div style="left:67.5px;top:1012px;width:15px;height:11px;background:#d4d0c8;box-shadow:inset -1px -1px 0 #404040,inset 1px 1px 0 #ffffff,inset -2px -2px 0 #808080;"></div>
<svg style="left:71.5px;top:1015.5px" width="7" height="4"><path d="M0 4L3.5 0L7 4z" fill="#000"/></svg>
<div style="left:67.5px;top:1023px;width:15px;height:11px;background:#d4d0c8;box-shadow:inset -1px -1px 0 #404040,inset 1px 1px 0 #ffffff,inset -2px -2px 0 #808080;"></div>
<svg style="left:71.5px;top:1026.5px" width="7" height="4"><path d="M0 0L3.5 4L7 0z" fill="#000"/></svg>
<div class="t sans" style="top:1016px;font-size:11px;line-height:14px;letter-spacing:-0.03px;left:85px;">FFT Ave</div>
<div style="left:12px;top:1040px;width:28px;height:19px;background:#d4d0c8;box-shadow:inset 1px 1px 0 #808080,inset -1px -1px 0 #ffffff,inset 2px 2px 0 #404040;"></div>
<div class="t sans" style="top:1043px;font-size:11px;line-height:14px;left:22.94px;">0</div>
<div style="left:40px;top:1038px;width:15.5px;height:11px;background:#d4d0c8;box-shadow:inset -1px -1px 0 #404040,inset 1px 1px 0 #ffffff,inset -2px -2px 0 #808080;"></div>
<svg style="left:44.25px;top:1041.5px" width="7" height="4"><path d="M0 4L3.5 0L7 4z" fill="#000"/></svg>
<div style="left:40px;top:1049px;width:15.5px;height:11px;background:#d4d0c8;box-shadow:inset -1px -1px 0 #404040,inset 1px 1px 0 #ffffff,inset -2px -2px 0 #808080;"></div>
<svg style="left:44.25px;top:1052.5px" width="7" height="4"><path d="M0 0L3.5 4L7 0z" fill="#000"/></svg>
<div class="t sans" style="top:1042px;font-size:11px;line-height:14px;letter-spacing:-0.32px;left:61.5px;">Smoothing</div>
<div style="left:10px;top:1064px;width:72.5px;height:18.5px;background:#d4d0c8;box-shadow:inset 1px 1px 0 #808080,inset -1px -1px 0 #ffffff,inset 2px 2px 0 #404040;"></div>
<div class="t sans" style="top:1067px;font-size:11px;line-height:14px;left:14.5px;color:#808080;">65536</div>
<div style="left:66px;top:1066px;width:14.5px;height:14.5px;background:#d4d0c8;box-shadow:inset -1px -1px 0 #404040,inset 1px 1px 0 #ffffff,inset -2px -2px 0 #808080;"></div>
<svg style="left:70px;top:1071px" width="7" height="4"><path d="M0 0L3.5 4L7 0z" fill="#808080"/></svg>
<div class="t sans" style="top:1067px;font-size:11px;line-height:14px;left:88px;">FFT/BLK</div>
<div class="t sans" style="top:1083.5px;font-size:11px;line-height:14px;letter-spacing:-0.17px;left:12px;">Fs=62500 RBW=0.95</div>
<div style="left:10px;top:1099.5px;width:77px;height:20px;background:#fff;box-shadow:inset 1px 1px 0 #808080,inset -1px -1px 0 #ffffff,inset 2px 2px 0 #404040;"></div>
<div class="t sans" style="top:1102.75px;font-size:11px;line-height:14px;letter-spacing:0.2px;left:20px;">1 dB/Div</div>
<div style="left:69.5px;top:1101.5px;width:15.5px;height:16px;background:#d4d0c8;box-shadow:inset -1px -1px 0 #404040,inset 1px 1px 0 #ffffff,inset -2px -2px 0 #808080;"></div>
<svg style="left:74px;top:1107px" width="7" height="4"><path d="M0 0L3.5 4L7 0z" fill="#000"/></svg>
<div class="t sans" style="top:1102.75px;font-size:11px;line-height:14px;left:90.5px;">V Scale</div>
<div style="left:18px;top:1127px;width:54px;height:17.5px;background:#d4d0c8;box-shadow:inset -1px -1px 0 #404040,inset 1px 1px 0 #ffffff,inset -2px -2px 0 #808080;"></div>
<div class="t sans" style="top:1128.75px;font-size:11px;line-height:14px;letter-spacing:-0.35px;left:23px;color:#000;">NCO Null</div>
<div style="left:195px;top:1120px;width:62.5px;height:32.5px;background:#d4d0c8;box-shadow:inset -1px -1px 0 #404040,inset 1px 1px 0 #ffffff,inset -2px -2px 0 #808080;"></div>
<div class="t sans" style="top:1122.75px;font-size:11px;line-height:14px;left:214.02px;color:#000;">Mute</div>
<div class="t sans" style="top:1135.75px;font-size:11px;line-height:14px;left:202.1px;color:#000;">SpaceBar</div>
<div style="left:301px;top:993.3px;width:124.5px;height:22px;background:#d4d0c8;box-shadow:inset -1px -1px 0 #404040,inset 1px 1px 0 #ffffff,inset -2px -2px 0 #808080;"></div>
<div class="t sans" style="top:997.3px;font-size:11px;line-height:14px;letter-spacing:-0.26px;left:309.75px;color:#000;">Center Frequency - Ins</div>
<div style="left:243px;top:1018px;width:16.5px;height:27px;background:#d4d0c8;box-shadow:inset -1px -1px 0 #404040,inset 1px 1px 0 #ffffff,inset -2px -2px 0 #808080;"></div>
<div class="t sans" style="top:1024.5px;font-size:11px;line-height:14px;left:248.19px;color:#000;">L</div>
<div style="left:261px;top:1018.5px;width:194.5px;height:27px;background:#000;box-shadow:inset 1px 1px 0 #808080,inset -1px -1px 0 #ffffff,inset 2px 2px 0 #404040;"></div>
<div class="t sans" style="top:1016px;font-size:25.5px;line-height:33px;letter-spacing:-1.29px;left:310.5px;color:#00ff00;">10,700.000</div>
<div class="t sans" style="top:1025px;font-size:12px;line-height:16px;letter-spacing:0.67px;left:428.5px;color:#e0e0e0;">kHz</div>
<div class="t sans" style="top:1050px;font-size:11px;line-height:14px;letter-spacing:-0.23px;left:342.5px;">Span</div>
<div style="left:261px;top:1065px;width:194.5px;height:28px;background:#000;box-shadow:inset 1px 1px 0 #808080,inset -1px -1px 0 #ffffff,inset 2px 2px 0 #404040;"></div>
<div class="t sans" style="top:1062.5px;font-size:25.5px;line-height:33px;letter-spacing:2.2px;left:327.5px;color:#00ff00;">50.000</div>
<div class="t sans" style="top:1072px;font-size:12px;line-height:16px;letter-spacing:0.67px;left:424px;color:#e0e0e0;">kHz</div>
<div style="left:261px;top:1101px;width:59px;height:22px;background:#d4d0c8;box-shadow:inset -1px -1px 0 #404040,inset 1px 1px 0 #ffffff,inset -2px -2px 0 #808080;"></div>
<div class="t sans" style="top:1105px;font-size:11px;line-height:14px;letter-spacing:-0.18px;left:268.5px;color:#000;">Stop-F10</div>
<div style="left:328px;top:1101px;width:59px;height:22px;background:#d4d0c8;box-shadow:inset -1px -1px 0 #404040,inset 1px 1px 0 #ffffff,inset -2px -2px 0 #808080;"></div>
<div class="t sans" style="top:1105px;font-size:11px;line-height:14px;letter-spacing:-0.37px;left:332.5px;color:#000;">Pause-F11</div>
<div style="left:397px;top:1101px;width:58.5px;height:22px;background:#d4d0c8;box-shadow:inset -1px -1px 0 #404040,inset 1px 1px 0 #ffffff,inset -2px -2px 0 #808080;"></div>
<div class="t sans" style="top:1105px;font-size:11px;line-height:14px;letter-spacing:-0.23px;left:404.25px;color:#808080;">Start-F12</div>
<div style="left:460.5px;top:1101px;width:58.5px;height:22px;background:#00ffff;box-shadow:inset -1px -1px 0 #404040,inset 1px 1px 0 #ffffff,inset -2px -2px 0 #808080;"></div>
<div class="t sans" style="top:1105px;font-size:11px;line-height:14px;letter-spacing:-0.09px;left:464.75px;color:#000;">Record(R)</div>
<div style="left:460px;top:1016px;width:62.5px;height:30px;background:#d4d0c8;box-shadow:inset -1px -1px 0 #404040,inset 1px 1px 0 #ffffff,inset -2px -2px 0 #808080;"></div>
<div class="t sans" style="top:1017.5px;font-size:11px;line-height:14px;left:464.65px;color:#000;">Auto Scale</div>
<div class="t sans" style="top:1030.5px;font-size:11px;line-height:14px;left:483.92px;color:#000;">(A)</div>
<div style="left:460px;top:1063.5px;width:62.5px;height:30px;background:#d4d0c8;box-shadow:inset -1px -1px 0 #404040,inset 1px 1px 0 #ffffff,inset -2px -2px 0 #808080;"></div>
<div class="t sans" style="top:1065px;font-size:11px;line-height:14px;left:463.14px;color:#000;">Memory(M)</div>
<div class="t sans" style="top:1078px;font-size:11px;line-height:14px;left:468.01px;color:#000;">Channels</div>
<div class="t sans" style="top:1127.75px;font-size:11px;line-height:14px;letter-spacing:-0.17px;left:325.75px;">Audio Volume</div>
<div style="left:266px;top:1144.5px;width:184px;height:2px;background:#808080;box-shadow:0 1px 0 #fff;"></div>
<div style="left:400.5px;top:1140.5px;width:6px;height:11px;background:#d4d0c8;box-shadow:inset -1px -1px 0 #404040,inset 1px 1px 0 #ffffff,inset -2px -2px 0 #808080;"></div>
<div style="left:742px;top:984.5px;width:68.5px;height:18.5px;background:#d4d0c8;box-shadow:inset -1px -1px 0 #404040,inset 1px 1px 0 #ffffff,inset -2px -2px 0 #808080;"></div>
<div class="t sans" style="top:986.75px;font-size:11px;line-height:14px;letter-spacing:-0.22px;left:751.75px;color:#000;">-109.69dB</div>
<div style="left:655.5px;top:1003.5px;width:12.5px;height:12.5px;background:#fff;box-shadow:inset 1px 1px 0 #808080,inset -1px -1px 0 #ffffff,inset 2px 2px 0 #404040;"></div>
<svg style="left:657px;top:1005px" width="10" height="10"><path d="M1.5 4.5L4 7L8.5 2" stroke="#000" stroke-width="2" fill="none"/></svg>
<div class="t sans" style="top:1004px;font-size:11px;line-height:14px;letter-spacing:-0.31px;left:674.5px;">Demod On</div>
<div style="left:637.5px;top:1021.5px;width:112.5px;height:99px;box-shadow:inset 1px 1px 0 #808080,inset -1px -1px 0 #fff,inset 2px 2px 0 #fff;"></div>
<div style="left:642.75px;top:1026.5px;width:12px;height:12px;background:#fff;border-radius:50%;box-shadow:inset 1px 1px 0 #808080,inset -1px -1px 0 #fff,inset 2px 2px 0 #404040;"></div>
<div style="left:694.75px;top:1026.5px;width:12px;height:12px;background:#fff;border-radius:50%;box-shadow:inset 1px 1px 0 #808080,inset -1px -1px 0 #fff,inset 2px 2px 0 #404040;"></div>
<div class="t sans" style="top:1026px;font-size:11px;line-height:14px;left:660.5px;">AM</div>
<div class="t sans" style="top:1026px;font-size:11px;line-height:14px;left:713px;">WFM</div>
<div style="left:642.75px;top:1040.75px;width:12px;height:12px;background:#fff;border-radius:50%;box-shadow:inset 1px 1px 0 #808080,inset -1px -1px 0 #fff,inset 2px 2px 0 #404040;"></div>
<div style="left:694.75px;top:1040.75px;width:12px;height:12px;background:#fff;border-radius:50%;box-shadow:inset 1px 1px 0 #808080,inset -1px -1px 0 #fff,inset 2px 2px 0 #404040;"></div>
<div class="t sans" style="top:1040.25px;font-size:11px;line-height:14px;left:660.5px;">FM</div>
<div class="t sans" style="top:1040.25px;font-size:11px;line-height:14px;left:713px;">NFM</div>
<div style="left:642.75px;top:1055.75px;width:12px;height:12px;background:#fff;border-radius:50%;box-shadow:inset 1px 1px 0 #808080,inset -1px -1px 0 #fff,inset 2px 2px 0 #404040;"></div>
<div style="left:694.75px;top:1055.75px;width:12px;height:12px;background:#fff;border-radius:50%;box-shadow:inset 1px 1px 0 #808080,inset -1px -1px 0 #fff,inset 2px 2px 0 #404040;"></div>
<div style="left:698.75px;top:1059.75px;width:4px;height:4px;background:#000;border-radius:50%;"></div>
<div class="t sans" style="top:1055.25px;font-size:11px;line-height:14px;left:660.5px;">LSB</div>
<div class="t sans" style="top:1055.25px;font-size:11px;line-height:14px;left:713px;">USB</div>
<div style="left:642.75px;top:1070.75px;width:12px;height:12px;background:#fff;border-radius:50%;box-shadow:inset 1px 1px 0 #808080,inset -1px -1px 0 #fff,inset 2px 2px 0 #404040;"></div>
<div style="left:694.75px;top:1070.75px;width:12px;height:12px;background:#fff;border-radius:50%;box-shadow:inset 1px 1px 0 #808080,inset -1px -1px 0 #fff,inset 2px 2px 0 #404040;"></div>
<div class="t sans" style="top:1070.25px;font-size:11px;line-height:14px;left:660.5px;">SAM</div>
<div class="t sans" style="top:1070.25px;font-size:11px;line-height:14px;left:713px;">WUSE</div>
<div style="left:642.75px;top:1085.25px;width:12px;height:12px;background:#fff;border-radius:50%;box-shadow:inset 1px 1px 0 #808080,inset -1px -1px 0 #fff,inset 2px 2px 0 #404040;"></div>
<div style="left:694.75px;top:1085.25px;width:12px;height:12px;background:#fff;border-radius:50%;box-shadow:inset 1px 1px 0 #808080,inset -1px -1px 0 #fff,inset 2px 2px 0 #404040;"></div>
<div class="t sans" style="top:1084.75px;font-size:11px;line-height:14px;left:660.5px;">CW-L</div>
<div class="t sans" style="top:1084.75px;font-size:11px;line-height:14px;left:713px;">CW-U</div>
<div style="left:642px;top:1099.5px;width:45px;height:18.5px;background:#d4d0c8;box-shadow:inset -1px -1px 0 #404040,inset 1px 1px 0 #ffffff,inset -2px -2px 0 #808080;"></div>
<div class="t sans" style="top:1101.75px;font-size:11px;line-height:14px;letter-spacing:-0.16px;left:648.5px;color:#000;">NB Off</div>
<div style="left:693px;top:1099.5px;width:56px;height:18.5px;background:#d4d0c8;box-shadow:inset -1px -1px 0 #404040,inset 1px 1px 0 #ffffff,inset -2px -2px 0 #808080;"></div>
<div class="t sans" style="top:1101.75px;font-size:11px;line-height:14px;letter-spacing:-0.27px;left:703px;color:#000;">Setup...</div>
<div style="left:760px;top:1007.5px;width:29.5px;height:101px;background:#000;box-shadow:inset 1px 1px 0 #808080,inset -1px -1px 0 #fff;"></div>
<div style="left:762px;top:1085.5px;width:26px;height:22px;background:#ffff00;"></div>
<div style="left:762px;top:1015px;width:13px;height:1px;background:#ffff00;"></div>
<div style="left:762px;top:1022px;width:13px;height:1px;background:#ffff00;"></div>
<div style="left:762px;top:1029px;width:13px;height:1px;background:#ffff00;"></div>
<div style="left:762px;top:1036px;width:13px;height:1px;background:#ffff00;"></div>
<div style="left:762px;top:1043px;width:13px;height:1px;background:#ffff00;"></div>
<div style="left:762px;top:1050px;width:13px;height:1px;background:#ffff00;"></div>
<div style="left:762px;top:1057px;width:13px;height:1px;background:#ffff00;"></div>
<div style="left:762px;top:1064px;width:13px;height:1px;background:#ffff00;"></div>
<div style="left:762px;top:1071px;width:13px;height:1px;background:#ffff00;"></div>
<div style="left:762px;top:1078px;width:13px;height:1px;background:#ffff00;"></div>
<div style="left:762px;top:1092px;width:13px;height:1px;background:#000;"></div>
<div style="left:762px;top:1099px;width:13px;height:1px;background:#000;"></div>
<div style="left:777.5px;top:1099.5px;width:9px;height:7px;background:#00d0ff;border:1px solid #000;"></div>
<div style="left:753.75px;top:1114px;width:44.5px;height:20px;background:#d4d0c8;box-shadow:inset -1px -1px 0 #404040,inset 1px 1px 0 #ffffff,inset -2px -2px 0 #808080;"></div>
<div class="t sans" style="top:1117px;font-size:11px;line-height:14px;letter-spacing:-0.02px;left:763.5px;color:#000;">Peak</div>
<div class="t sans" style="top:1122.75px;font-size:11px;line-height:14px;letter-spacing:-0.49px;left:631px;">Filter</div>
<div class="t sans" style="top:1122.75px;font-size:11px;line-height:14px;letter-spacing:-0.18px;left:659.5px;">300</div>
<div class="t sans" style="top:1122.75px;font-size:11px;line-height:14px;letter-spacing:-0.16px;left:689.5px;">3000</div>
<div class="t sans" style="top:1122.75px;font-size:11px;line-height:14px;letter-spacing:-0.16px;left:728.75px;">3300</div>
<div style="left:570px;top:1138px;width:250px;height:14.5px;background:#808080;border:1px solid #000;"></div>
<div style="left:587px;top:1139px;width:69px;height:12.5px;background:#00ff00;"></div>
<div style="left:576.5px;top:1139px;width:10.5px;height:12.5px;background:#d4d0c8;box-shadow:inset -1px -1px 0 #404040,inset 1px 1px 0 #ffffff,inset -2px -2px 0 #808080;"></div>
<div style="left:656px;top:1139px;width:10.5px;height:12.5px;background:#d4d0c8;box-shadow:inset -1px -1px 0 #404040,inset 1px 1px 0 #ffffff,inset -2px -2px 0 #808080;"></div>
<svg style="left:579px;top:1142px" width="5" height="7"><path d="M5 0L0 3.5L5 7z" fill="#000"/></svg>
<svg style="left:659px;top:1142px" width="5" height="7"><path d="M0 0L5 3.5L0 7z" fill="#000"/></svg>
<div style="left:5px;top:1171px;width:817px;height:1px;background:#fff;"></div>
<div class="t sans" style="top:1176px;font-size:11px;line-height:14px;letter-spacing:-0.16px;left:7.5px;">NetSDR-&gt;Sound 1  | -Manual Record-</div>
<div class="t sans" style="top:1174px;font-size:11px;line-height:14px;letter-spacing:-0.21px;left:637.5px;color:#000080;">28 Nov 2015  0:21:03 UTC</div>
<svg style="left:808px;top:1176px" width="14" height="14"><path d="M13 1L1 13M13 5L5 13M13 9L9 13" stroke="#808080" stroke-width="1.5"/><path d="M13 2.5L2.5 13M13 6.5L6.5 13M13 10.5L10.5 13" stroke="#fff" stroke-width="1"/></svg>
<div style="left:834px;top:0px;width:766px;height:422px;background:#9aa0b5;box-shadow:inset 2px 2px 0 #d3d6e3,inset -2px -2px 0 #727889;"></div>
<div style="left:838px;top:4px;width:758px;height:414px;background:#d4d0c8;box-shadow:inset 1px 1px 0 #727889,inset -1px -1px 0 #d3d6e3;"></div>
<div style="left:834px;top:24px;width:5px;height:1px;background:#727889;"></div>
<div style="left:834px;top:25px;width:5px;height:1px;background:#d3d6e3;"></div>
<div style="left:1595px;top:24px;width:5px;height:1px;background:#727889;"></div>
<div style="left:1595px;top:25px;width:5px;height:1px;background:#d3d6e3;"></div>
<div style="left:834px;top:397px;width:5px;height:1px;background:#727889;"></div>
<div style="left:834px;top:398px;width:5px;height:1px;background:#d3d6e3;"></div>
<div style="left:1595px;top:397px;width:5px;height:1px;background:#727889;"></div>
<div style="left:1595px;top:398px;width:5px;height:1px;background:#d3d6e3;"></div>
<div style="left:858px;top:417px;width:1px;height:5px;background:#727889;"></div>
<div style="left:859px;top:417px;width:1px;height:5px;background:#d3d6e3;"></div>
<div style="left:1575px;top:417px;width:1px;height:5px;background:#727889;"></div>
<div style="left:1576px;top:417px;width:1px;height:5px;background:#d3d6e3;"></div>
<div style="left:839px;top:5px;width:756px;height:20px;background:#9ba1b6;"></div>
<div style="left:839px;top:5px;width:20px;height:20px;background:#9ba1b6;box-shadow:inset 1px 1px 0 #d3d6e3,inset -1px -1px 0 #727889;"></div>
<div style="left:842px;top:12px;width:12px;height:5px;background:#9ba1b6;box-shadow:inset 1px 1px 0 #d3d6e3,inset -1px -1px 0 #727889;"></div>
<div style="left:1575px;top:5px;width:20px;height:20px;background:#9ba1b6;box-shadow:inset 1px 1px 0 #d3d6e3,inset -1px -1px 0 #727889;"></div>
<div style="left:1579px;top:9px;width:11px;height:11px;background:#9ba1b6;box-shadow:inset 1px 1px 0 #d3d6e3,inset -1px -1px 0 #727889;"></div>
<div style="left:1555px;top:5px;width:20px;height:20px;background:#9ba1b6;box-shadow:inset 1px 1px 0 #d3d6e3,inset -1px -1px 0 #727889;"></div>
<div style="left:1562px;top:12px;width:5px;height:5px;background:#9ba1b6;box-shadow:inset 1px 1px 0 #d3d6e3,inset -1px -1px 0 #727889;"></div>
<div style="left:859px;top:5px;width:696px;height:20px;background:#9ba1b6;box-shadow:inset 1px 1px 0 #d3d6e3,inset -1px -1px 0 #727889;"></div>
<div class="t dvb" style="top:7px;font-size:13px;line-height:17px;letter-spacing:-0.18px;left:1149px;color:#000000;white-space:pre;">SpecJT      by K1JT</div>
<div style="left:839px;top:25px;width:756px;height:27px;background:#d9d9d9;"></div>
<div class="t sans" style="top:29px;font-size:12px;line-height:16px;letter-spacing:0.11px;left:846px;">Options</div>
<div class="t sans" style="top:29px;font-size:12px;line-height:16px;letter-spacing:0.06px;left:949px;">Freq:  2229</div>
<div class="t sans" style="top:29px;font-size:12px;line-height:16px;letter-spacing:-0.16px;left:1023px;">DF:   959  (Hz)</div>
<div style="left:1139px;top:24.7px;width:30.7px;height:26px;background:#d9d9d9;box-shadow:inset 1.5px 1.5px 0 #fff,inset -1px -1px 0 #000,inset -2px -2px 0 #828282;"></div>
<div class="t sans" style="top:29.5px;font-size:12px;line-height:16px;letter-spacing:-1.83px;left:1145.6px;">BW</div>
<div style="left:1190px;top:24.7px;width:16.5px;height:26px;background:#d9d9d9;box-shadow:inset 1.5px 1.5px 0 #fff,inset -1px -1px 0 #000,inset -2px -2px 0 #828282;"></div>
<div class="t sans" style="top:31.5px;font-size:9px;line-height:12px;left:1195.62px;">&lt;</div>
<div style="left:1206.5px;top:24.7px;width:20.5px;height:26px;background:#d9d9d9;box-shadow:inset 1.5px 1.5px 0 #fff,inset -1px -1px 0 #000,inset -2px -2px 0 #828282;"></div>
<div class="t sans" style="top:31px;font-size:10px;line-height:13px;left:1215.45px;">|</div>
<div style="left:1227px;top:24.7px;width:18px;height:26px;background:#d9d9d9;box-shadow:inset 1.5px 1.5px 0 #fff,inset -1px -1px 0 #000,inset -2px -2px 0 #828282;"></div>
<div class="t sans" style="top:31.5px;font-size:9px;line-height:12px;left:1233.37px;">&gt;</div>
<div class="t sans" style="top:29px;font-size:12px;line-height:16px;letter-spacing:0.19px;left:1289px;">Speed:</div>
<div style="left:1337px;top:31px;width:12px;height:12px;background:#fff;border-radius:50%;box-shadow:inset 1px 1px 0 #828282,inset -1px -1px 0 #fff,inset 2px 2px 0 #404040;"></div>
<div class="t sans" style="top:29.5px;font-size:12px;line-height:16px;left:1355px;">1</div>
<div style="left:1372px;top:31px;width:12px;height:12px;background:#fff;border-radius:50%;box-shadow:inset 1px 1px 0 #828282,inset -1px -1px 0 #fff,inset 2px 2px 0 #404040;"></div>
<div class="t sans" style="top:29.5px;font-size:12px;line-height:16px;left:1391px;">2</div>
<div style="left:1407px;top:31px;width:12px;height:12px;background:#fff;border-radius:50%;box-shadow:inset 1px 1px 0 #828282,inset -1px -1px 0 #fff,inset 2px 2px 0 #404040;"></div>
<div style="left:1411px;top:35px;width:4px;height:4px;background:#000;border-radius:50%;"></div>
<div class="t sans" style="top:29.5px;font-size:12px;line-height:16px;left:1426px;">3</div>
<div style="left:1442px;top:31px;width:12px;height:12px;background:#fff;border-radius:50%;box-shadow:inset 1px 1px 0 #828282,inset -1px -1px 0 #fff,inset 2px 2px 0 #404040;"></div>
<div class="t sans" style="top:29.5px;font-size:12px;line-height:16px;left:1461px;">4</div>
<div style="left:1477px;top:31px;width:12px;height:12px;background:#fff;border-radius:50%;box-shadow:inset 1px 1px 0 #828282,inset -1px -1px 0 #fff,inset 2px 2px 0 #404040;"></div>
<div class="t sans" style="top:29.5px;font-size:12px;line-height:16px;left:1496px;">5</div>
<div style="left:1512px;top:31px;width:12px;height:12px;background:#fff;border-radius:50%;box-shadow:inset 1px 1px 0 #828282,inset -1px -1px 0 #fff,inset 2px 2px 0 #404040;"></div>
<div class="t sans" style="top:29.5px;font-size:12px;line-height:16px;left:1530.5px;">H1</div>
<div style="left:1555.75px;top:31px;width:12px;height:12px;background:#fff;border-radius:50%;box-shadow:inset 1px 1px 0 #828282,inset -1px -1px 0 #fff,inset 2px 2px 0 #404040;"></div>
<div class="t sans" style="top:29.5px;font-size:12px;line-height:16px;left:1574px;">H2</div>
<div style="left:839px;top:52px;width:756px;height:32px;background:#d4d0c8;"></div>
<div style="left:841px;top:53.5px;width:752px;height:25.5px;background:#fff;"></div>
<svg style="left:841px;top:53px" width="752" height="27" viewBox="841 53 752 27" shape-rendering="crispEdges"><path d="M845.5 68 V78 M852.5 72.5 V78 M860.5 72.5 V78 M867.5 72.5 V78 M874.5 72.5 V78 M882.5 68 V78 M889.5 72.5 V78 M897.5 72.5 V78 M904.5 72.5 V78 M911.5 72.5 V78 M919.5 68 V78 M926.5 72.5 V78 M934.5 72.5 V78 M941.5 72.5 V78 M948.5 72.5 V78 M956.5 68 V78 M963.5 72.5 V78 M971.5 72.5 V78 M978.5 72.5 V78 M985.5 72.5 V78 M993.5 68 V78 M1000.5 72.5 V78 M1008.5 72.5 V78 M1015.5 72.5 V78 M1022.5 72.5 V78 M1030.5 68 V78 M1037.5 72.5 V78 M1045.5 72.5 V78 M1052.5 72.5 V78 M1059.5 72.5 V78 M1067.5 68 V78 M1074.5 72.5 V78 M1082.5 72.5 V78 M1089.5 72.5 V78 M1096.5 72.5 V78 M1104.5 68 V78 M1111.5 72.5 V78 M1119.5 72.5 V78 M1126.5 72.5 V78 M1133.5 72.5 V78 M1141.5 68 V78 M1148.5 72.5 V78 M1156.5 72.5 V78 M1163.5 72.5 V78 M1170.5 72.5 V78 M1178.5 68 V78 M1185.5 72.5 V78 M1193.5 72.5 V78 M1200.5 72.5 V78 M1207.5 72.5 V78 M1215.5 68 V78 M1222.5 72.5 V78 M1230.5 72.5 V78 M1237.5 72.5 V78 M1244.5 72.5 V78 M1252.5 68 V78 M1259.5 72.5 V78 M1267.5 72.5 V78 M1274.5 72.5 V78 M1281.5 72.5 V78 M1289.5 68 V78 M1296.5 72.5 V78 M1304.5 72.5 V78 M1311.5 72.5 V78 M1318.5 72.5 V78 M1326.5 68 V78 M1333.5 72.5 V78 M1341.5 72.5 V78 M1348.5 72.5 V78 M1355.5 72.5 V78 M1363.5 68 V78 M1370.5 72.5 V78 M1378.5 72.5 V78 M1385.5 72.5 V78 M1392.5 72.5 V78 M1400.5 68 V78 M1407.5 72.5 V78 M1415.5 72.5 V78 M1422.5 72.5 V78 M1429.5 72.5 V78 M1437.5 68 V78 M1444.5 72.5 V78 M1452.5 72.5 V78 M1459.5 72.5 V78 M1466.5 72.5 V78 M1474.5 68 V78 M1481.5 72.5 V78 M1489.5 72.5 V78 M1496.5 72.5 V78 M1503.5 72.5 V78 M1511.5 68 V78 M1518.5 72.5 V78 M1526.5 72.5 V78 M1533.5 72.5 V78 M1540.5 72.5 V78 M1548.5 68 V78 M1555.5 72.5 V78 M1563.5 72.5 V78 M1570.5 72.5 V78 M1577.5 72.5 V78 M1585.5 68 V78" stroke="#000" stroke-width="1" fill="none"/><path d="M992.5 77 H1439" stroke="#00ff00" stroke-width="2" fill="none"/><path d="M1216 64 V77" stroke="#00ff00" stroke-width="2" fill="none"/><path d="M1302 64 V77 M1376 64 V77" stroke="#ff0000" stroke-width="2" fill="none"/></svg>
<div style="left:841px;top:53px;width:752px;height:26px;overflow:hidden">
<div class="t sans" style="top:2px;font-size:9px;line-height:12px;letter-spacing:-0.26px;left:-6.05px;">500</div>
<div class="t sans" style="top:2px;font-size:9px;line-height:12px;letter-spacing:-0.26px;left:30.95px;">600</div>
<div class="t sans" style="top:2px;font-size:9px;line-height:12px;letter-spacing:-0.26px;left:67.95px;">700</div>
<div class="t sans" style="top:2px;font-size:9px;line-height:12px;letter-spacing:-0.26px;left:104.95px;">800</div>
<div class="t sans" style="top:2px;font-size:9px;line-height:12px;letter-spacing:-0.26px;left:141.95px;">900</div>
<div class="t sans" style="top:2px;font-size:9px;line-height:12px;letter-spacing:-0.34px;left:176.7px;">1000</div>
<div class="t sans" style="top:2px;font-size:9px;line-height:12px;letter-spacing:-0.12px;left:213.7px;">1100</div>
<div class="t sans" style="top:2px;font-size:9px;line-height:12px;letter-spacing:-0.34px;left:250.7px;">1200</div>
<div class="t sans" style="top:2px;font-size:9px;line-height:12px;letter-spacing:-0.34px;left:287.7px;">1300</div>
<div class="t sans" style="top:2px;font-size:9px;line-height:12px;letter-spacing:-0.34px;left:324.7px;">1400</div>
<div class="t sans" style="top:2px;font-size:9px;line-height:12px;letter-spacing:-0.34px;left:361.7px;">1500</div>
<div class="t sans" style="top:2px;font-size:9px;line-height:12px;letter-spacing:-0.34px;left:398.7px;">1600</div>
<div class="t sans" style="top:2px;font-size:9px;line-height:12px;letter-spacing:-0.34px;left:435.7px;">1700</div>
<div class="t sans" style="top:2px;font-size:9px;line-height:12px;letter-spacing:-0.34px;left:472.7px;">1800</div>
<div class="t sans" style="top:2px;font-size:9px;line-height:12px;letter-spacing:-0.34px;left:509.7px;">1900</div>
<div class="t sans" style="top:2px;font-size:9px;line-height:12px;letter-spacing:-0.34px;left:546.7px;">2000</div>
<div class="t sans" style="top:2px;font-size:9px;line-height:12px;letter-spacing:-0.34px;left:583.7px;">2100</div>
<div class="t sans" style="top:2px;font-size:9px;line-height:12px;letter-spacing:-0.34px;left:620.7px;">2200</div>
<div class="t sans" style="top:2px;font-size:9px;line-height:12px;letter-spacing:-0.34px;left:657.7px;">2300</div>
<div class="t sans" style="top:2px;font-size:9px;line-height:12px;letter-spacing:-0.34px;left:694.7px;">2400</div>
<div class="t sans" style="top:2px;font-size:9px;line-height:12px;letter-spacing:-0.34px;left:731.7px;">2500</div>
</div>
<svg style="left:842px;top:83px" width="749" height="300" viewBox="0 0 749 300"><defs><filter id="jtn" x="0" y="0" width="100%" height="100%" color-interpolation-filters="sRGB"><feTurbulence type="fractalNoise" baseFrequency="0.55 0.55" numOctaves="2" seed="5" result="n"/><feColorMatrix in="n" type="matrix" values="1 0 0 0 0  1 0 0 0 0  1 0 0 0 0  0 0 0 0 1"/><feComponentTransfer><feFuncR type="table" tableValues="0 0 0 0 0.01 0.03 0.05 0.09 0.15 0.3 0.5"/><feFuncG type="table" tableValues="0 0.01 0.03 0.07 0.12 0.18 0.26 0.40 0.58 0.7 0.8"/><feFuncB type="table" tableValues="0.34 0.38 0.42 0.45 0.47 0.48 0.46 0.42 0.34 0.25 0.2"/></feComponentTransfer></filter><radialGradient id="jtb"><stop offset="0" stop-color="#2a9a48" stop-opacity="0.75"/><stop offset="0.55" stop-color="#1f8a50" stop-opacity="0.5"/><stop offset="1" stop-color="#107060" stop-opacity="0"/></radialGradient><linearGradient id="jtg" x1="0" x2="1" y1="0" y2="0"><stop offset="0" stop-color="#000040" stop-opacity="0.45"/><stop offset="0.12" stop-color="#000040" stop-opacity="0.25"/><stop offset="0.25" stop-color="#000040" stop-opacity="0"/><stop offset="0.78" stop-color="#000040" stop-opacity="0"/><stop offset="1" stop-color="#000040" stop-opacity="0.5"/></linearGradient></defs><rect width="749" height="300" fill="#062868"/><rect width="749" height="300" filter="url(#jtn)"/><rect width="749" height="300" fill="url(#jtg)"/><ellipse cx="190.5" cy="34.5" rx="27" ry="30.5" fill="url(#jtb)" opacity="0.55"/><ellipse cx="190.5" cy="155" rx="27" ry="30" fill="url(#jtb)" opacity="0.55"/><ellipse cx="308" cy="34.5" rx="27" ry="30.5" fill="url(#jtb)" opacity="0.48"/><ellipse cx="306" cy="155" rx="27" ry="30" fill="url(#jtb)" opacity="0.48"/><ellipse cx="425" cy="34.5" rx="27" ry="30.5" fill="url(#jtb)" opacity="0.48"/><ellipse cx="423" cy="155" rx="27" ry="30" fill="url(#jtb)" opacity="0.48"/><ellipse cx="543" cy="34.5" rx="27" ry="30.5" fill="url(#jtb)" opacity="0.48"/><ellipse cx="541" cy="155" rx="27" ry="30" fill="url(#jtb)" opacity="0.48"/><ellipse cx="191" cy="105" rx="27" ry="21" fill="url(#jtb)" opacity="0.69"/><ellipse cx="191" cy="228" rx="27" ry="18" fill="url(#jtb)" opacity="0.69"/><ellipse cx="43" cy="108.5" rx="23" ry="17.5" fill="url(#jtb)" opacity="0.44"/><ellipse cx="43" cy="228" rx="23" ry="18" fill="url(#jtb)" opacity="0.44"/><path d="M170.08 12h1M171.58 11.5h1M171.58 13h1.5M174.58 12.5h2M176.08 12h1M176.08 13.5h3M182.08 11.5h1.5M185.08 12.5h3M188.08 11.5h3M192.58 12.5h3M201.58 12.5h1.5M207.58 12h1M209.08 11.5h2M209.08 13.5h1M174.89 14h1M177.89 14.5h3M179.39 13.5h1M180.89 15.5h1M185.39 13.5h2M186.89 15.5h1M189.89 15h1M203.39 15h1.5M206.39 15h1.5M207.89 13.5h1M209.39 13.5h3M173.5 17h1M175 17.5h1M175 19h2M176.5 17h1M178 17.5h3M178 18.5h1M185.5 19h1M187 17h2M188.5 17h1M190 17.5h1M191.5 18h1M194.5 18.5h2M196 19h1M199 18h1.5M202 19h1.5M203.5 17h2M205 17.5h2M205 18h1.5M208 19h2M209.5 18h1M209.5 18.5h3M171.15 23.5h3M172.65 23.5h3M174.15 22.5h2M174.15 23.5h1.5M178.65 23.5h1M180.15 22.5h1M181.65 23h2M183.15 23.5h1M187.65 23h1M187.65 24.5h2M193.65 22.5h2M193.65 24h1.5M201.15 24h1.5M207.15 24.5h1M208.65 24.5h1M210.15 23.5h1M178.2 30h1M179.7 29h1M182.7 29h3M182.7 30h3M184.2 29h2M190.2 28h1M190.2 29.5h1M191.7 29h3M196.2 28h1M197.7 29h3M205.2 29h1M208.2 28h1M211.2 29h1M172.47 35.5h3M173.97 34.5h2M175.47 34h1.5M176.97 34h1M176.97 35h1.5M181.47 34h1.5M181.47 35h3M185.97 33.5h1.5M188.97 33.5h3M188.97 34.5h1M194.97 35h1.5M202.47 35h2M203.97 34.5h1M205.47 34.5h1.5M206.97 34h1M209.97 35.5h3M173.58 40.5h1.5M175.08 39.5h1.5M175.08 40h1M176.58 39.5h3M179.58 40.5h3M182.58 39h3M188.58 39.5h1M190.08 40.5h1M202.08 41h3M205.08 39.5h1.5M205.08 40h1M209.58 41h3M176.11 41h1.5M176.11 43h1M177.61 43h1.5M179.11 41h1M186.61 42.5h1M189.61 41.5h1M192.61 42h1.5M192.61 43h3M197.11 41h2M198.61 42h1M203.11 41.5h1M203.11 43h3M204.61 42h1M206.11 41.5h1M206.11 43h1.5M175.49 44.5h1M178.49 45.5h2M178.49 45.5h3M184.49 45.5h1M191.99 45h1M194.99 45.5h2M199.49 45.5h1M199.49 45.5h1.5M203.99 45.5h3M203.99 46.5h1.5M205.49 46.5h1.5M209.99 44.5h1M209.99 46.5h2M211.49 46.5h1M172.24 51h3M172.24 51.5h1M173.74 50h1.5M175.24 50.5h1M175.24 51h1.5M176.74 51h1.5M178.24 51.5h1M179.74 50h1M179.74 51.5h1M190.24 51.5h1M191.74 51h2M191.74 51.5h2M200.74 50.5h3M200.74 51.5h1M205.24 51h2M206.74 51h1.5M172.16 55.5h2M172.16 57h1M175.16 55.5h3M175.16 57h1M178.16 57.5h2M181.16 55.5h1M185.66 56h2M188.66 56.5h1.5M191.66 55.5h1M191.66 57h1.5M194.66 55.5h1.5M200.66 57.5h1M203.66 57h1.5M206.66 56h3M208.16 55.5h3M209.66 57h1M211.16 56h1M173.6 133.5h1M190.1 133.5h2M191.6 134h1M193.1 132.5h1.5M202.1 133.5h2M202.1 134h2M203.6 133.5h1M205.1 132.5h1M206.6 133.5h2M208.1 133h1M208.1 134.5h1.5M173.69 136.5h1.5M175.19 136.5h2M176.69 135h2M176.69 136h1.5M178.19 135h3M179.69 136h3M181.19 135.5h1M181.19 135.5h3M182.69 135.5h2M188.69 136.5h2M190.19 135h1M190.19 136.5h1.5M191.69 135.5h1.5M191.69 135.5h1M196.19 135.5h1.5M197.69 135h2M200.69 135.5h2M202.19 135.5h1M170.44 139.5h2M171.94 139.5h1M173.44 139.5h1.5M174.94 139.5h1M177.94 139.5h1M182.44 138.5h1M185.44 138.5h1.5M185.44 140h3M186.94 139h1M191.44 138h1M192.94 139h1.5M192.94 140h2M195.94 140h1.5M201.94 139h2M203.44 138.5h3M204.94 138.5h1M206.44 139h1M207.94 139h1M176.78 140h1M176.78 141.5h2M178.28 141h1M179.78 140.5h1M184.28 140.5h1M184.28 142h1M185.78 140.5h3M185.78 141.5h2M187.28 141.5h2M188.78 141h1.5M196.28 141h1M200.78 141.5h1M202.28 141h1M177.25 144h1M190.75 144h1M202.75 144.5h1M204.25 144h1M207.25 145h2M208.75 145h1M176.23 146.5h1M177.73 145.5h1M182.23 146.5h2M185.23 147h2M191.23 147h1.5M195.73 146.5h1M195.73 147h1M203.23 146h3M203.23 146.5h1M204.73 146.5h1.5M206.23 147h1.5M207.73 146h1M174.39 150h1M177.39 150h2M178.89 150h3M180.39 149h1M192.39 150h3M193.89 149h2M199.89 149.5h2M204.39 150.5h3M205.89 150h1M210.39 149.5h1M211.89 149h2M211.89 150h1M170.29 155h1M173.29 155.5h2M174.79 155.5h2M176.29 154.5h2M176.29 156h1.5M177.79 155h1.5M177.79 156.5h1M182.29 155h1.5M192.79 155.5h1M192.79 155.5h1M206.29 156h1.5M173.81 158h3M178.31 156.5h1.5M179.81 156.5h1M179.81 158h3M181.31 157.5h1M187.31 158.5h1.5M193.31 157.5h1.5M200.81 157.5h2M203.81 156.5h3M203.81 157.5h1M205.31 158h1M206.81 157h1.5M172.8 160h1.5M174.3 161h2M174.3 161.5h2M177.3 160.5h1M177.3 161h2M178.8 160h1M184.8 160h3M184.8 161h2M186.3 160.5h1M198.3 161h1M201.3 160h1M204.3 161h2M204.3 161.5h2M208.8 161h1.5M177.98 163h1M177.98 163.5h3M191.48 162h3M198.98 162h2M201.98 163h1.5M175.54 167.5h3M178.54 167h1M180.04 167h3M181.54 165.5h1M183.04 166.5h1.5M186.04 167h1.5M196.54 166.5h3M204.04 167h3M210.04 166.5h1M210.04 167.5h1.5M172.93 171.5h2M172.93 172.5h1M175.93 171h3M178.93 171.5h1M180.43 172h1M181.93 171.5h1M187.93 173h1M189.43 171h1M192.43 171.5h1.5M192.43 172h2M198.43 171.5h1.5M201.43 172.5h1M205.93 172h3M207.43 171.5h1.5M208.93 172h1M176.66 174.5h1M179.66 173h2M179.66 174h1M181.16 174h2M182.66 175h1.5M188.66 173h1M190.16 174h3M190.16 174.5h1M197.66 175h1M199.16 174h1M169.94 177.5h1M172.94 178h2M177.44 178h1M189.44 177.5h3M198.44 177h1.5M201.44 177.5h2M202.94 176.5h2M204.44 176.5h3M204.44 177.5h3M207.44 177h1.5M208.94 177h1.5M291.47 11.5h2M292.97 13h3M295.97 13h3M298.97 12h1.5M298.97 12.5h1M300.47 12.5h3M306.47 12.5h2M315.47 13.5h1.5M316.97 13.5h1.5M324.47 12.5h2M287.98 19h3M289.48 18.5h2M302.98 17h1M305.98 18.5h1M308.98 19h1M310.48 18h1.5M311.98 18h1M323.98 19h2M294.15 19h3M297.15 20h1M298.65 20h3M298.65 20h1.5M300.15 20h1.5M301.65 19.5h1.5M301.65 21h1M307.65 20h1M309.15 19.5h2M309.15 20.5h1M313.65 19h2M316.65 19.5h1.5M316.65 20.5h3M318.15 20h1M319.65 19.5h1M321.15 21h1M322.65 20.5h2M291.64 22.5h1M293.14 24.5h2M296.14 23.5h3M300.64 24.5h3M306.64 23.5h1.5M308.14 22.5h1M308.14 24.5h1.5M309.64 24h3M311.14 23.5h2M317.14 24h3M321.64 22.5h1.5M323.14 23.5h2M324.64 23h3M326.14 23h1M327.64 23.5h1.5M289.21 30h1.5M290.71 28.5h3M293.71 29h1M295.21 29h1.5M296.71 30h1.5M307.21 29h1.5M308.71 29h1M313.21 29h1.5M314.71 28.5h1M316.21 29h1.5M316.21 29.5h2M319.21 30h1M293.48 31h1.5M294.98 30h1M297.98 30.5h1.5M299.48 30.5h2M305.48 30h1M312.98 32h3M314.48 31h3M314.48 32h3M315.98 31h1M317.48 30.5h2M321.98 30.5h1.5M323.48 31h1M323.48 32h1.5M290.95 34.5h1M293.95 34h1.5M299.95 34h1M301.45 33.5h3M302.95 34h1.5M304.45 35h2M308.95 34.5h1M311.95 35.5h3M313.45 34.5h1M317.95 34.5h1.5M319.45 35.5h2M320.95 35h2M294.87 36h1.5M294.87 36.5h3M296.37 37h1M299.37 35.5h1M299.37 36.5h3M300.87 35.5h3M302.37 37.5h2M303.87 37.5h1.5M305.37 36.5h3M305.37 37h1.5M306.87 36h1.5M309.87 35.5h2M311.37 37h1M317.37 36.5h3M317.37 37.5h1M321.87 35.5h3M288.18 39.5h2M288.18 41h3M294.18 40h1M298.68 41h1M300.18 40.5h1M301.68 40h1M307.68 40h1.5M313.68 40h3M321.18 40h1M322.68 39h1M322.68 40.5h3M287.76 45.5h1.5M289.26 45.5h1M290.76 45.5h1M292.26 45.5h1M299.76 46.5h2M304.26 45.5h1.5M316.26 45h1.5M316.26 46h1.5M323.76 44.5h2M325.26 45.5h1M325.26 45.5h1M287.99 51h1M289.49 51.5h2M290.99 51h3M292.49 51h1M296.99 51h1M299.99 51h1M304.49 50.5h3M308.99 50.5h1.5M319.49 51h1M325.49 51.5h2M326.99 50h3M292.03 53h1M293.53 54h1M295.03 54h1.5M298.03 54h3M313.03 53h1M314.53 53h1M317.53 53.5h1.5M320.53 52h2M322.03 53h2M289.02 57.5h2M290.52 56h3M290.52 57.5h1M293.52 56h1M293.52 57h1.5M295.02 56h1M298.02 56.5h1M301.02 56h2M302.52 57.5h1.5M307.02 56.5h1M310.02 56.5h2M311.52 56h3M313.02 57h2M320.52 56h3M322.02 57.5h2M325.02 55.5h1M288.66 133.5h1M293.16 134.5h1M303.66 133h3M306.66 134h3M312.66 133.5h1M314.16 133.5h1M315.66 134.5h1M317.16 133h1M320.16 132.5h3M320.16 134.5h1M291.4 134.5h1M291.4 136.5h2M294.4 135.5h2M297.4 136h1.5M298.9 135h1M298.9 136.5h1M304.9 136.5h2M309.4 135h3M313.9 135h3M319.9 135.5h2M288.78 140h1.5M290.28 139h1M291.78 139h2M294.78 139h3M297.78 139h3M302.28 139.5h1.5M303.78 138.5h1M308.28 138h1.5M309.78 138h1M318.78 138h1.5M320.28 139h3M323.28 138.5h1.5M324.78 138h1M326.28 140h1M287.65 140.5h1M290.65 141h1M293.65 141h3M293.65 141h1M295.15 140.5h1M295.15 142h1.5M304.15 141.5h1.5M307.15 140h2M308.65 142h1M313.15 141h3M316.15 140h2M317.65 140h1.5M319.15 140h3M287.5 144h1M292 145.5h1.5M295 144.5h2M298 143.5h2M298 145h1M302.5 145.5h3M304 145.5h2M305.5 144h1M307 144h3M311.5 145.5h1.5M314.5 144h2M319 145h1M322 144.5h2M323.5 144h1M292.6 147.5h1.5M294.1 146.5h3M295.6 145.5h1M298.6 146.5h3M300.1 146.5h3M301.6 145.5h1M309.1 146.5h1M312.1 146.5h2M315.1 145.5h1M318.1 146h3M319.6 146.5h3M321.1 147.5h1M286.18 150.5h1M287.68 150.5h1M289.18 149.5h1.5M292.18 149h1M298.18 151h3M301.18 150h1M304.18 149h1M304.18 151h1.5M308.68 149.5h3M308.68 151h3M311.68 149.5h2M311.68 150h1M313.18 150h1.5M314.68 150.5h3M316.18 150h3M317.68 150.5h3M319.18 149.5h1.5M287.06 154.5h3M290.06 154.5h3M296.06 155.5h3M296.06 156.5h1M303.56 155.5h1M308.06 156.5h2M309.56 154.5h1M318.56 155.5h3M320.06 156h1.5M321.56 155.5h2M321.56 156.5h1M323.06 154.5h1M324.56 155h2M289.82 158h1.5M292.82 157.5h1.5M292.82 158.5h2M294.32 157h1M294.32 158h2M295.82 157h2M297.32 157.5h1M298.82 157.5h1M300.32 156.5h2M306.32 158.5h1M307.82 158h1.5M312.32 157.5h2M315.32 157.5h1.5M318.32 158h1M287.44 160.5h1.5M287.44 162h3M288.94 160h1M290.44 161h3M293.44 160.5h2M296.44 161.5h1.5M299.44 160h1.5M303.94 161.5h1M305.44 161h3M306.94 161h1.5M315.94 162h2M317.44 160.5h3M321.94 162h2M291.56 163.5h1M294.56 164h2M296.06 164h1.5M300.56 164h1.5M302.06 164h2M303.56 162.5h1.5M306.56 162h1M306.56 163h1M320.06 163h2M320.06 163.5h1M321.56 163h1M287.27 166h2M302.27 166h1.5M303.77 166.5h3M317.27 167h1M324.77 167.5h1.5M326.27 166h1M291.89 171h1M293.39 172h1M293.39 173h1.5M294.89 173h1.5M297.89 171h1.5M302.39 171h2M308.39 171h1M309.89 172h2M312.89 171.5h1M312.89 173h2M317.39 172.5h1M320.39 173h1.5M321.89 171h3M321.89 172h1M324.89 172.5h1.5M297.33 175h1M303.33 173.5h3M307.83 173.5h1M309.33 174h3M310.83 174.5h2M315.33 174h1M319.83 174h1.5M287 178.5h3M288.5 178h1.5M290 177.5h2M291.5 178.5h1.5M302 176.5h2M308 177.5h3M318.5 177h1M323 177.5h1M291.33 180h1.5M292.83 179.5h1M292.83 179.5h2M294.33 179.5h1M295.83 179.5h1M298.83 180h2M303.33 179.5h3M306.33 180.5h2M309.33 180.5h1.5M313.83 179.5h1M316.83 180h1M318.33 179.5h2M319.83 179.5h1.5M404.72 11.5h1M406.22 11.5h1M406.22 12.5h2M407.72 11.5h1.5M409.22 13.5h3M416.72 11.5h1.5M419.72 13.5h3M421.22 12.5h2M422.72 12.5h2M425.72 12.5h2M430.22 13.5h1M431.72 12.5h1.5M431.72 13h2M433.22 12h1.5M437.72 12.5h1M442.22 12.5h3M443.72 12.5h3M409.67 18.5h1M411.17 19h3M414.17 19h3M415.67 17.5h2M421.67 17h1M424.67 18h1M426.17 18h1M427.67 17.5h1M427.67 18h1M432.17 18h2M435.17 18h2M435.17 19h1M439.67 18.5h2M441.17 17h3M442.67 17h1M444.17 19h1M411.48 20h1M414.48 20h1.5M417.48 19.5h1M423.48 20h1M424.98 20h2M426.48 19.5h1.5M426.48 20h3M430.98 20h2M433.98 19.5h1M436.98 20h1M438.48 21h1M406.18 22.5h1.5M407.68 23.5h1M407.68 24.5h1M409.18 23h3M410.68 22.5h2M415.18 24.5h1M419.68 23.5h2M421.18 23.5h3M422.68 23.5h1.5M425.68 23h1.5M425.68 24.5h2M434.68 24h1.5M439.18 23.5h1M442.18 22.5h1M408.2 29h2M411.2 28h2M411.2 29h1M414.2 30h1M417.2 30h1M421.7 30h1.5M426.2 28h1.5M427.7 29h2M430.7 29h2M435.2 29h3M442.7 28h1M444.2 28h2M444.2 29h1M445.7 28.5h2M406.8 35.5h1M408.3 33.5h1.5M409.8 35h2M421.8 34h1M424.8 35.5h1M426.3 35.5h2M429.3 34.5h1M438.3 34h1M441.3 34.5h2M444.3 35.5h2M409.66 36.5h2M415.66 36.5h3M418.66 36h3M421.66 37.5h2M430.66 37h2M435.16 36h1M438.16 37h1M441.16 35.5h1M407.82 40.5h1M409.32 39.5h2M412.32 40h1M424.32 39h3M425.82 39h3M425.82 40h2M428.82 40.5h1.5M433.32 41h2M434.82 39.5h1M437.82 39h3M437.82 40h2M408.95 46h3M410.45 45h2M420.95 46.5h1.5M422.45 46h1M423.95 46h1.5M425.45 45h2M428.45 45h2M428.45 46.5h1M429.95 46h1M432.95 45h3M434.45 45.5h1M444.95 44.5h3M407.91 47h1M412.41 48h3M413.91 47.5h1.5M416.91 47.5h1M418.41 48h1M421.41 47.5h2M421.41 48h1M422.91 47h1M428.91 47.5h2M434.91 46.5h1M434.91 48h1M436.41 48h1M408.65 52h1.5M411.65 50.5h1M413.15 51.5h1M417.65 50.5h2M417.65 51.5h3M420.65 51h2M423.65 51h1M425.15 51.5h1M426.65 51h1.5M428.15 51h2M437.15 51h3M438.65 51.5h2M407.73 56.5h1M409.23 57.5h2M415.23 56.5h3M418.23 57.5h1M424.23 56h1M436.23 56.5h1M436.23 57.5h3M437.73 57.5h2M440.73 57.5h1M408.09 59.5h2M412.59 59.5h1.5M417.09 58.5h2M418.59 58.5h3M421.59 57.5h1.5M424.59 59.5h1M432.09 58.5h2M433.59 58h2M435.09 58h3M436.59 58h2M439.59 58.5h2M405.06 133.5h1.5M406.56 133.5h2M411.06 134h1M414.06 134.5h1M415.56 133h3M423.06 134.5h1M433.56 133h1M433.56 134h1M435.06 134h2M438.06 133.5h3M439.56 133.5h1M407.93 139.5h1M413.93 138h1.5M416.93 138h1.5M431.93 138h1M431.93 139.5h1.5M433.43 140h1.5M434.93 138h2M436.43 139h1M440.93 140h1M442.43 138h1.5M442.43 139h1M404.07 144.5h1M405.57 145h2M411.57 144h3M411.57 145h1M422.07 144.5h2M423.57 145h1M431.07 143.5h1M432.57 143.5h1M432.57 145h3M440.07 144h1.5M441.57 143.5h1M407.37 145.5h1M408.87 147h1.5M411.87 146h3M416.37 147h3M417.87 147h1.5M419.37 147.5h1M420.87 145.5h3M431.37 145.5h1.5M435.87 146.5h1M408.24 150h1M409.74 150h1M412.74 150h2M427.74 149.5h1M430.74 149.5h1M438.24 151h1M441.24 150h1.5M442.74 150h1.5M442.74 150h2M411.46 151.5h1M411.46 152.5h1M414.46 152h1.5M417.46 152h1M418.96 152h1.5M421.96 151h3M424.96 151.5h1M424.96 152h3M426.46 152h3M427.96 151h1M430.96 153h3M432.46 151.5h3M436.96 151h1M438.46 152h1M439.96 153h1M404.91 156h1.5M412.41 155h1M415.41 154.5h1M418.41 155h1.5M428.91 155.5h1M430.41 155.5h2M431.91 154.5h1M437.91 156.5h1M439.41 155.5h2M439.41 156.5h1.5M440.91 155.5h2M410.75 158h1.5M412.25 156.5h1M412.25 157.5h3M413.75 156.5h1M413.75 157.5h3M419.75 157.5h3M430.25 157h3M436.25 158.5h2M437.75 158.5h1M405.06 162h2M406.56 160h1M406.56 161h1M408.06 162h2M412.56 160.5h3M421.56 161.5h1M423.06 161h1.5M427.56 160.5h1M429.06 160.5h3M430.56 160h1M432.06 160h1.5M435.06 161h1M438.06 160h1.5M407.79 162h1M409.29 163.5h1M410.79 164h1M415.29 163h1.5M416.79 163h1M418.29 162.5h2M418.29 164h2M422.79 162h2M425.79 163h1M427.29 162.5h1M427.29 163.5h1.5M428.79 162.5h2M434.79 162h3M434.79 163h3M405.56 167.5h3M407.06 166.5h3M408.56 166.5h1.5M411.56 166h1.5M411.56 166.5h2M413.06 166h1.5M416.06 167.5h1M417.56 165.5h2M417.56 167.5h1M420.56 165.5h2M422.06 166h3M428.06 166h1M429.56 166.5h1M432.56 166.5h1M434.06 167.5h2M438.56 167.5h1M407.6 168.5h3M412.1 168.5h2M413.6 168.5h3M413.6 169h1M421.1 167.5h3M422.6 168h1.5M425.6 168h3M427.1 168.5h1M427.1 169h1.5M430.1 167.5h3M430.1 168.5h2M434.6 169.5h1M404.34 172.5h1M405.84 172h1.5M407.34 172h1M408.84 172h1M410.34 171.5h3M411.84 172h1M413.34 171.5h2M413.34 173h1M419.34 172h1M423.84 171h1.5M426.84 171.5h1.5M429.84 172h3M431.34 172h1.5M435.84 172h1M435.84 172.5h3M438.84 172h1M408.69 173.5h1M414.69 174.5h1M416.19 173.5h1M416.19 175h2M422.19 174h1M426.69 173h3M426.69 174.5h1M428.19 173h2M432.69 173.5h1M434.19 174h2M435.69 173.5h1M435.69 174.5h1M405.01 176.5h3M408.01 177.5h1M409.51 177h1M412.51 177h1.5M415.51 177.5h3M417.01 178.5h1M430.51 178.5h1.5M435.01 177h3M524.19 13.5h2M525.69 13h3M527.19 13.5h1.5M528.69 12.5h2M530.19 12h1.5M534.69 13.5h1M537.69 12.5h1M542.19 12.5h1M543.69 12.5h1M548.19 12.5h1M554.19 12.5h1M557.19 12.5h1M558.69 13.5h1M560.19 12h2M560.19 12.5h1M561.69 11.5h1.5M563.19 13h1M528.14 19h2M531.14 18h1.5M531.14 18.5h2M532.64 18h2M538.64 18h1M540.14 18h1.5M541.64 17.5h3M543.14 18h1M549.14 18h1M555.14 17h3M555.14 19h2M556.64 18h2M558.14 17h3M558.14 19h2M559.64 17.5h2M526.59 23.5h3M528.09 23h3M528.09 24.5h3M529.59 23.5h1.5M534.09 24h1M540.09 23h1.5M540.09 24.5h1M541.59 24h1M549.09 24h1M550.59 23.5h1M552.09 22.5h1M553.59 23h1M555.09 24h1M558.09 23.5h1M529.9 25h1M534.4 25h3M538.9 25.5h1M540.4 24.5h1.5M549.4 25.5h1M550.9 25.5h1M552.4 24.5h2M552.4 26h1.5M553.9 26.5h1.5M524.03 28h2M525.53 28.5h3M533.03 28.5h3M533.03 30h1M536.03 30h1M537.53 29h3M539.03 28h1M549.53 28h3M549.53 29.5h1M551.03 29h2M552.53 29h2M554.03 29h1.5M555.53 29.5h1M557.03 28.5h3M558.53 29h1M560.03 29h3M529.63 31.5h2M531.13 31h1M532.63 31h3M534.13 30h1M534.13 31h1M535.63 31h2M541.63 31h1M543.13 30.5h1M543.13 32h1.5M544.63 31h3M544.63 32h2M546.13 32h2M550.63 30.5h3M552.13 30.5h1.5M553.63 32h1.5M556.63 30.5h1M558.13 31h1.5M558.13 32h3M526.61 34.5h3M528.11 34.5h2M528.11 34.5h1M529.61 33.5h1.5M534.11 33.5h1.5M534.11 35.5h1.5M538.61 34.5h1M538.61 35h1M540.11 35h1M543.11 34h1.5M546.11 34.5h3M555.11 34.5h1M556.61 33.5h1M559.61 34.5h1M561.11 34.5h3M561.11 35h1.5M562.61 34h1.5M564.11 33.5h1.5M528.32 37h1M532.82 36h2M532.82 36.5h2M535.82 37.5h2M540.32 37.5h2M546.32 36.5h2M549.32 37h2M550.82 36.5h1.5M553.82 35.5h3M559.82 35.5h3M523.66 40.5h2M525.16 40h2M525.16 40h3M532.66 40h3M534.16 40h1M538.66 39.5h3M538.66 40.5h1.5M544.66 40.5h3M547.66 41h1M559.66 40h1.5M561.16 39.5h2M561.16 40.5h2M562.66 40.5h1.5M528.73 42h1M530.23 41h1M533.23 42h1M539.23 41h1M545.23 42h1M549.73 42h1M552.73 42h1M554.23 42h2M555.73 41.5h1M557.23 41.5h1.5M560.23 42.5h1M523.15 46.5h2M526.15 45.5h2M529.15 45.5h2M530.65 44.5h1M530.65 46h1M533.65 45.5h1M538.15 46h3M539.65 45.5h1.5M542.65 46.5h2M548.65 45h1M556.15 45.5h1.5M557.65 45h1M557.65 46.5h2M559.15 45h1.5M560.65 44.5h2M529.12 47h3M529.12 47.5h1M530.62 46.5h1M532.12 47.5h1M533.62 48h3M535.12 48h1.5M539.62 46.5h1M541.12 48h1.5M542.62 46.5h2M544.12 46.5h2M545.62 46.5h2M548.62 46.5h1M548.62 47.5h1M554.62 47.5h1M556.12 47.5h1.5M524.9 50.5h2M524.9 52h1M530.9 51.5h3M532.4 52h2M533.9 50h2M538.4 50.5h1M538.4 51.5h3M539.9 50h3M541.4 50.5h1M541.4 51.5h1M542.9 51h1.5M551.9 51h1.5M554.9 50h1M556.4 50h1.5M557.9 51h1M557.9 52h1M559.4 51h3M527.78 56h3M527.78 56.5h3M529.28 57h1M536.78 56.5h1.5M542.78 56h2M553.28 57.5h1.5M554.78 56h3M559.28 56h1M560.78 57.5h1.5M522.35 132.5h1.5M523.85 134h1M526.85 133.5h1M528.35 134h3M531.35 133.5h1M532.85 134h2M544.85 133.5h3M546.35 133h1.5M549.35 134h2M550.85 133.5h1M552.35 134.5h1M556.85 134h3M558.35 132.5h1M558.35 134h2M559.85 134h3M521.91 138h1M523.41 140h1M526.41 138h3M527.91 140h2M545.91 139h1M548.91 139h1M551.91 139h1M559.41 140h1.5M560.91 138h2M526.49 144.5h1M527.99 144h2M529.49 144.5h1M532.49 143.5h3M538.49 143.5h1M538.49 145.5h2M541.49 144.5h2M544.49 144h1.5M544.49 145h1.5M547.49 144.5h3M548.99 144.5h2M553.49 145h1.5M554.99 145h1.5M556.49 144.5h3M560.99 144.5h3M522.32 151h2M528.32 149h1M529.82 150h1M537.32 149h1M540.32 150h1M546.32 150h2M547.82 149.5h1M550.82 149.5h2M550.82 150.5h1M556.82 149h3M558.32 150.5h3M523.09 156.5h1M526.09 155.5h1M527.59 156h3M530.59 155.5h1.5M541.09 156.5h3M547.09 156h1M548.59 154.5h1M553.09 156h2M554.59 156h1M559.09 155h1M560.59 155.5h2M523.35 160.5h1.5M523.35 161.5h1.5M529.35 162h1.5M535.35 160.5h3M541.35 161.5h1.5M545.85 161h1M547.35 161.5h2M550.35 161h1M551.85 160.5h1M551.85 161h1.5M556.35 160.5h1M556.35 161h1.5M559.35 161h1M527.4 164h1M528.9 162.5h1.5M530.4 162.5h2M531.9 162h1M531.9 164h1M533.4 163h1M539.4 163h3M543.9 163.5h1.5M545.4 162.5h2M545.4 164h1M548.4 162.5h1M551.4 163h1M522.12 166.5h1M523.62 166.5h1.5M525.12 165.5h1M531.12 167.5h1M540.12 166h1.5M544.62 166.5h3M544.62 166.5h2M546.12 166.5h1.5M550.62 166.5h3M552.12 166h2M555.12 166.5h1M556.62 167h1.5M558.12 165.5h1M561.12 166.5h1.5M522.37 173h1.5M523.87 172.5h1M541.87 171h1.5M543.37 172h3M544.87 173h1M546.37 172.5h1M550.87 172h1.5M550.87 172.5h3M552.37 172h1.5M555.37 171h2M555.37 173h1.5M556.87 172h1M556.87 173h1M558.37 171h1M558.37 172h1M521.48 177h1M522.98 177.5h2M524.48 176.5h2M527.48 177.5h1M534.98 177h3M536.48 177.5h3M543.98 177h1M549.98 177h1.5M551.48 176.5h2M554.48 178.5h1M558.98 178h1M560.48 177.5h3M560.48 177.5h1M524.4 179.5h3M527.4 178.5h1M528.9 179.5h2M533.4 179.5h1.5M537.9 179h1M542.4 179.5h1M546.9 179h3M546.9 179.5h3M549.9 179.5h3M551.4 179.5h3M551.4 179.5h1M554.4 179.5h3M171.77 93.5h1M173.27 92.5h2M177.77 91.5h3M200.27 93.5h1.5M204.77 92.5h1M206.27 93h1M207.77 92.5h1.5M209.27 92.5h1.5M210.77 92.5h2M173.63 98h3M175.13 97h2M176.63 99h1M181.13 97.5h1M185.63 97h1M191.63 98h1M194.63 98.5h1.5M196.13 98.5h3M206.63 99h1M175.3 99h1M187.3 99.5h3M188.8 99h1M190.3 101h1M191.8 101h3M194.8 101h3M200.8 100h1.5M206.8 100h2M208.3 99h3M209.8 100h2M179.19 103.5h1.5M191.19 103h3M192.69 103h2M197.19 103h2M204.69 104.5h3M209.19 102.5h1M210.69 104h1M169.57 109h2M172.57 108h2M174.07 109h1M207.07 108.5h1M208.57 110h1M175.52 111h1.5M178.52 112h3M186.02 111.5h1.5M187.52 112h2M193.52 111h1.5M198.02 111h1M198.02 112h1M199.52 112h1.5M204.02 110.5h2M205.52 112h1.5M207.02 110h1M208.52 112h1M174.59 114.5h1M177.59 115.5h1M183.59 114h3M186.59 114h1.5M188.09 114h1.5M189.59 115.5h1M194.09 113.5h3M197.09 114.5h3M198.59 115.5h1M204.59 114.5h2M209.09 113.5h3M170.25 120.5h2M173.25 119.5h1M174.75 121h2M176.25 120h3M177.75 120h1M186.75 121h1M188.25 119h1.5M189.75 120.5h1.5M192.75 120h3M194.25 119.5h3M198.75 121h2M206.25 119h1M207.75 120h2M207.75 121h3M210.75 119.5h3M169.33 218.5h1.5M172.33 217.5h3M173.83 218h1M175.33 218.5h1M188.83 218.5h1M196.33 217.5h1M203.83 218.5h1M173.18 220.5h2M174.68 220h2M177.68 219.5h1M179.18 219.5h1M179.18 220.5h3M186.68 219.5h3M189.68 220.5h1M194.18 220h1M195.68 221h3M197.18 221.5h2M201.68 220h1.5M203.18 221.5h1M204.68 220.5h2M206.18 220h2M207.68 220.5h3M173.32 223h3M174.82 224.5h1M176.32 225h1M179.32 223.5h1M180.82 223h2M204.82 224h3M207.82 223.5h2M210.82 224h3M212.32 224h3M172.13 230.5h2M176.63 229.5h1.5M179.63 228.5h3M179.63 230h1M182.63 229.5h1M187.13 228.5h3M188.63 229.5h1M191.63 229.5h1M194.63 228.5h1M202.13 228.5h2M203.63 230.5h3M205.13 229.5h3M172.02 234.5h1.5M176.52 235h2M182.52 234h1.5M187.02 235h1.5M188.52 234.5h2M193.02 235.5h2M197.52 234h1M200.52 234.5h2M202.02 234h1.5M208.02 235.5h2M209.52 235h1M211.02 235.5h2M172.73 237h1.5M178.73 236.5h2M184.73 236.5h1M186.23 237h1M187.73 237h1M192.23 237h1.5M195.23 236h1.5M196.73 238h2M198.23 237h1.5M198.23 237h2M205.73 236h1M28.08 99.5h3M29.58 98.5h1.5M31.08 99.5h3M34.08 100h1M41.58 99.5h1M46.08 98.5h1.5M47.58 100h1M55.08 99h1M33.52 101.5h3M35.02 100.5h3M36.52 101.5h3M39.52 102h2M45.52 100.5h2M47.02 100.5h3M50.02 102h1M51.52 100.5h2M54.52 101.5h3M29.66 104.5h1.5M29.66 105.5h1M35.66 105h1M40.16 104h1.5M43.16 104.5h1M52.16 105.5h1.5M29 110h1M38 110h1.5M39.5 110h1.5M42.5 110.5h1.5M53 109.5h1.5M53 111h1M54.5 109.5h1M54.5 110.5h2M56 110.5h1.5M56 110.5h1M34.4 111.5h1M37.4 112h1M40.4 111.5h1M41.9 111.5h3M49.4 113h1.5M50.9 113h3M53.9 113h3M32.82 116h1.5M35.82 116h2M37.32 117h2M40.32 115h1M41.82 116h1M46.32 116h1M50.82 116h1M52.32 116.5h3M33.73 219.5h3M36.73 217.5h1M41.23 218.5h1M44.23 218h1.5M45.73 217.5h1M47.23 219h2M48.73 218.5h1M51.73 219h3M53.23 219.5h1M32.96 220.5h1M35.96 220.5h1.5M38.96 221h3M40.46 221h1M41.96 220.5h1.5M43.46 220.5h2M44.96 219.5h1M44.96 221h2M46.46 221h3M50.96 220.5h3M29.07 224.5h3M32.07 223.5h1.5M32.07 224.5h1.5M35.07 223.5h1M45.57 224h1.5M50.07 225h2M54.57 224.5h1.5M32.56 226h1M34.06 225h1M38.56 226.5h1M41.56 226h1M43.06 226.5h1M44.56 225h3M44.56 226h1M46.06 226h1.5M49.06 225h2M50.56 225.5h1M50.56 226.5h3M52.06 226h1M27.47 230.5h1M28.97 229.5h1M43.97 230h1.5M48.47 229h1.5M52.97 230h3M55.97 228.5h1.5M34.1 231.5h3M34.1 232.5h1.5M38.6 231.5h1.5M43.1 232h1.5M44.6 231.5h1M47.6 231h2M50.6 231h1.5M53.6 232h1M28.66 234.5h3M31.66 234.5h1M40.66 235h3M49.66 234.5h2M49.66 235.5h3M52.66 235.5h2M55.66 234h1.5M58.66 235h3M33.58 237.5h3M35.08 237h2M35.08 238h1M39.58 237.5h2M44.08 236.5h1M45.58 236.5h2M47.08 236.5h1M48.58 236h3M172 252h1M176.5 251.5h3M178 250h2M179.5 250.5h2M184 251h1M197.5 250h1M199 251.5h1M203.5 251h1M205 250.5h1M208 251h2M209.5 250h3M209.5 251h1.5M211 251h1.5M291 253.5h1.5M295.5 251.5h2M298.5 253.5h1M303 252.5h3M303 253h1M304.5 252.5h1M316.5 252.5h1.5M318 252h3M401.5 213h1M403 213.5h1.5M404.5 213.5h1.5M407.5 214h3M416.5 213.5h1M418 212.5h1.5M422.5 214.5h2M427 213h1M430 214h1M543.5 213.5h2M545 212.5h2M549.5 213.5h1.5M554 212.5h2M563 211.5h3M563 213h1M570.5 213.5h2M573.5 211.5h3M531 252.5h1M532.5 252h3M540 252.5h3M543 253.5h1M547.5 251.5h2M420.5 252h1M422 252h1.5M422 253.5h1.5M423.5 253h1M425 253h1M426.5 251.5h1" stroke="#147a5a" stroke-width="1.1" fill="none" opacity="0.8"/><path d="M180.58 13h1M191.08 13.5h3M192.58 12.5h2M194.08 11.5h1M203.08 13.5h3M204.58 13.5h3M206.08 12.5h1.5M182.39 14.5h1M195.89 14.5h1M195.89 14.5h1M197.39 14.5h3M200.39 13.5h2M181 18.5h3M193 18.5h1M196 18h1M197.5 19h3M200.5 18h1M203.5 18.5h1M206.5 19h1.5M175.65 23.5h2M175.65 24h2M184.65 23h1.5M201.15 23.5h1M204.15 22.5h1.5M205.65 23.5h2M176.7 28.5h3M179.7 29h2M181.2 29.5h3M188.7 29h3M194.7 29.5h2M202.2 29h1M173.97 34.5h1.5M179.97 34h2M182.97 34.5h1M184.47 34.5h2M185.97 35.5h2M190.47 33.5h1M190.47 35.5h1.5M191.97 34h2M193.47 33.5h2M194.97 33.5h1M199.47 34h3M200.97 34.5h2M205.47 35h1M206.97 35h1M178.08 39.5h1.5M185.58 39.5h1M188.58 41h1M193.08 39.5h1M200.58 40h1.5M200.58 41h1.5M208.08 40h2M180.61 41h3M182.11 43h1M183.61 41.5h2M183.61 43h3M194.11 42h1M195.61 42h2M200.11 41.5h1M200.11 42.5h1M182.99 45.5h1M185.99 45h1M188.99 45.5h1M188.99 46h1M193.49 45.5h1.5M194.99 46h1.5M202.49 46.5h3M206.99 45.5h1M176.74 52h3M185.74 50h1M188.74 50h2M188.74 52h2M193.24 50.5h1M203.74 51h1.5M203.74 51h1M179.66 55.5h1M179.66 57h1M182.66 56.5h2M193.16 56.5h2M197.66 56.5h1M202.16 56.5h2M203.66 56.5h1M205.16 55.5h1M175.1 134.5h1M184.1 133.5h1.5M188.6 133h3M191.6 132.5h2M194.6 133.5h1.5M179.69 135.5h1M184.19 135.5h1M187.19 135h3M187.19 136h1M188.69 135.5h1M194.69 135.5h1M194.69 136h1.5M197.69 135.5h1.5M176.44 138.5h1.5M179.44 140h1M183.94 138h1M189.94 139h1.5M198.94 139h1.5M200.44 140h3M207.94 139h2M179.78 142h3M181.28 141.5h1M187.28 140.5h2M190.28 140h2M193.28 141.5h1.5M194.78 141h1.5M197.78 141h3M199.28 140.5h1.5M199.28 141h1M200.78 141h1M172.75 144.5h1M174.25 144.5h1M174.25 145h1M175.75 143.5h1M175.75 144.5h1M177.25 145.5h3M180.25 143.5h1M180.25 145h3M184.75 145h1.5M195.25 144.5h1M196.75 144.5h1M201.25 144.5h2M201.25 145.5h1.5M205.75 144h3M205.75 145.5h2M207.25 144h1M180.73 147h1.5M200.23 145.5h2M201.73 147.5h2M184.89 151h1.5M186.39 150h2M186.39 150.5h1.5M195.39 149.5h1.5M207.39 149.5h3M207.39 150h2M179.29 155h1.5M182.29 155.5h3M186.79 154.5h2M195.79 155.5h1.5M197.29 155.5h2M203.29 156.5h1M204.79 155.5h1M207.79 155h1M182.81 156.5h1M184.31 158h1M188.81 158h1M190.31 156.5h1.5M190.31 158h3M175.8 160h3M187.8 161h1M198.3 161.5h1M205.8 161.5h1.5M183.98 163.5h1M185.48 163h1M186.98 162.5h1M189.98 163.5h2M191.48 164h1.5M192.98 163.5h1.5M194.48 162.5h1M195.98 163h2M195.98 164h1M197.48 164h1M200.48 163h1M186.04 166h1M189.04 166.5h1M193.54 166.5h2M196.54 167.5h1M202.54 166h1.5M205.54 167.5h3M175.93 172h1M177.43 172h1M180.43 172h1.5M183.43 171.5h1M186.43 173h1M189.43 172h1M190.93 173h1.5M196.93 172h1.5M198.43 172.5h1.5M199.93 172h1.5M201.43 171h3M202.93 172h2M205.93 171h1.5M184.16 173.5h3M187.16 173.5h1M188.66 174.5h1.5M194.66 173h1M194.66 175h3M196.16 174h2M197.66 173.5h3M172.94 177h1.5M174.44 176.5h1M175.94 176.5h1.5M183.44 178.5h2M186.44 178h1M192.44 178.5h1M193.94 177.5h2M196.94 177h2M199.94 177h2M202.94 177.5h1M205.94 177.5h1.5M205.94 178.5h1M294.47 11.5h3M301.97 12h3M301.97 12.5h1M303.47 12h1.5M304.97 12.5h1.5M306.47 13.5h1.5M307.97 12.5h2M310.97 12.5h1M321.47 12.5h3M322.97 12h2M290.98 17h2M292.48 18.5h3M293.98 17.5h2M296.98 19h1M304.48 18h1M305.98 17.5h2M307.48 18h3M308.98 18h1M310.48 18.5h2M311.98 19h1M317.98 19h3M319.48 19h1.5M320.98 18h1M322.48 18h1M295.65 19h1M295.65 21h1M297.15 20h2M303.15 20h2M306.15 19.5h1.5M313.65 20.5h3M315.15 19h3M294.64 23.5h1M296.14 23.5h2M297.64 23.5h3M299.14 23h1M299.14 24h1M303.64 24.5h2M306.64 23.5h1M312.64 23.5h2M314.14 23h1.5M314.14 24.5h2M318.64 23.5h1M323.14 24h3M289.21 29h1.5M292.21 28.5h2M292.21 29h2M298.21 29.5h1M301.21 28h1M305.71 29h1M307.21 30h1.5M310.21 29h1M310.21 29.5h1M311.71 28h3M311.71 30h1M314.71 29h1.5M320.71 29h1.5M320.71 30h2M322.21 28h1M322.21 30h1M297.98 31.5h3M300.98 32h1M308.48 30.5h1M318.98 31h1.5M298.45 33.5h1M299.95 34.5h1M301.45 34.5h2M305.95 33.5h1.5M310.45 34.5h1.5M317.95 33.5h2M322.45 35.5h1M297.87 36.5h1M300.87 37h1M302.37 36.5h1.5M303.87 35.5h1M309.87 37.5h1.5M312.87 36h3M314.37 36h1M292.68 40h2M294.18 40.5h3M295.68 40h3M297.18 40h3M309.18 39h1.5M310.68 40.5h3M312.18 40h1M318.18 40h1.5M324.18 39h1M293.76 45h2M295.26 45.5h1.5M298.26 45.5h3M298.26 46.5h1M301.26 46.5h1.5M302.76 45.5h1M307.26 46h2M311.76 45.5h1M311.76 46h2M313.26 46h1M314.76 45.5h1M317.76 44.5h3M320.76 45.5h3M293.99 51h1M298.49 52h1M302.99 51h1.5M308.99 52h1.5M310.49 52h2M311.99 50h3M316.49 52h1M317.99 51.5h1M320.99 50.5h2M320.99 52h1M322.49 50h1.5M322.49 52h2M323.99 50h1M296.53 52h1M296.53 54h1M302.53 53h1.5M304.03 52h1.5M305.53 54h1M311.53 53h1M313.03 52.5h3M317.53 53h2M319.03 53h3M296.52 57.5h2M301.02 57h1M305.52 56.5h2M310.02 57.5h2M313.02 55.5h3M317.52 55.5h1M320.52 57h1.5M323.52 55.5h3M290.16 134h1.5M294.66 133h1M300.66 132.5h1M300.66 134h1M302.16 132.5h1M305.16 133h1.5M308.16 132.5h1M315.66 132.5h1M317.16 134h1M295.9 134.5h3M297.4 135h1M301.9 135h1M303.4 135.5h1M304.9 135.5h1.5M306.4 134.5h1M309.4 136h1M293.28 138h3M294.78 138h1.5M311.28 139h2M312.78 139.5h1.5M317.28 138.5h1M320.28 140h3M321.78 138h2M321.78 139.5h1M299.65 141h1M301.15 142h3M302.65 141h1.5M307.15 142h3M314.65 140h1.5M289 144.5h1.5M290.5 145h1.5M293.5 144h2M299.5 143.5h3M299.5 145h1M304 143.5h1.5M311.5 143.5h1M316 143.5h1M319 144h2M300.1 147.5h1M301.6 146.5h2M304.6 146.5h3M304.6 147h1M306.1 145.5h1M310.6 146.5h1M315.1 146.5h3M316.6 145.5h1.5M293.68 149h1M295.18 150.5h1M296.68 150.5h3M298.18 150h2M305.68 150h3M313.18 149.5h1M314.68 149.5h1M316.18 150h2M291.56 156h2M293.06 156h3M305.06 156h3M311.06 155.5h1M315.56 154.5h2M317.06 155.5h3M295.82 157.5h1M298.82 157.5h1.5M300.32 157.5h1M304.82 158.5h2M306.32 157h2M310.82 157.5h1M312.32 157.5h3M313.82 157.5h2M294.94 160.5h1M297.94 161.5h3M300.94 161h2M305.44 161.5h1M309.94 161h3M314.44 161h1.5M317.44 161.5h1M318.94 160.5h1.5M320.44 161.5h1.5M321.94 161h1M299.06 163h1M300.56 162h1M308.06 162.5h2M308.06 164h3M309.56 162.5h3M309.56 164h1.5M311.06 163h2M311.06 163h1M314.06 162h1M317.06 163h1M291.77 167.5h2M293.27 167h2M294.77 166.5h1.5M294.77 166.5h3M296.27 167.5h2M302.27 166.5h3M308.27 166.5h1M315.77 165.5h1M315.77 167h1M296.39 171h1M297.89 173h1M299.39 171.5h1.5M299.39 172.5h1M303.89 172h3M303.89 173h3M306.89 172h3M306.89 173h2M314.39 172h2M315.89 171.5h2M315.89 172.5h1M318.89 172h3M297.33 174h1M301.83 174h2M310.83 173h1M288.5 177h1M294.5 176.5h1M294.5 178h3M297.5 178.5h2M299 177h2M303.5 178.5h1.5M305 178.5h1M311 177h1M311 178.5h3M312.5 177.5h3M317 178.5h1.5M318.5 178.5h1M320 177h2M320 178h1.5M297.33 179.5h3M298.83 179.5h1M300.33 179.5h1M301.83 179h3M304.83 178.5h3M307.83 179.5h1M310.83 179.5h2M315.33 179.5h1M316.83 179.5h1M407.72 13h2M410.72 12.5h1M412.22 11.5h3M422.72 13h2M424.22 13.5h1M428.72 12.5h1M437.72 12.5h1M414.17 17h1.5M418.67 18.5h1M420.17 18h3M436.67 17.5h2M438.17 17.5h3M438.17 18h2M417.48 21h1M420.48 20h1.5M421.98 19h1M423.48 19.5h1M424.98 19h1M415.18 23h2M416.68 24h1.5M418.18 23.5h1M424.18 22.5h3M430.18 23h2M431.68 23.5h3M434.68 23h1.5M436.18 23.5h2M437.68 24h1M440.68 22.5h1.5M418.7 29h1M423.2 29.5h1.5M429.2 29h1.5M430.7 30h1M433.7 28h1.5M436.7 29.5h3M439.7 29.5h3M441.2 28.5h1M441.2 29h2M408.3 35.5h1M411.3 34.5h3M412.8 34.5h1M414.3 34h1.5M420.3 34.5h2M432.3 34.5h3M433.8 34.5h1M441.3 35.5h2M412.66 35.5h1M412.66 37.5h1M414.16 36.5h1M423.16 36.5h1.5M423.16 37.5h1M424.66 36.5h1M429.16 35.5h3M430.66 35.5h2M433.66 36.5h1M433.66 37.5h3M410.82 40h1.5M419.82 40h3M421.32 40h1M427.32 39h1.5M430.32 40.5h1M413.45 44.5h1M414.95 46h1M416.45 44.5h3M416.45 45.5h3M423.95 45.5h1M429.95 45h2M432.95 46h1M435.95 45.5h1M438.95 45h2M440.45 44.5h1M441.95 45.5h1.5M441.95 46h1M443.45 44.5h2M409.41 46.5h3M410.91 48h1M412.41 47.5h1.5M416.91 48.5h2M419.91 48h1M424.41 47.5h1M424.41 47.5h1.5M430.41 48h2M431.91 48.5h1M411.65 51h1M420.65 51.5h3M422.15 50h2M423.65 51h1.5M431.15 50.5h1M431.15 51.5h1.5M432.65 51h2M438.65 50.5h2M440.15 51h1M412.23 57h3M413.73 56.5h1M416.73 56.5h1.5M421.23 57.5h3M422.73 56h2M425.73 56.5h3M427.23 56h1M428.73 55.5h2M431.73 56h1M437.73 56h1M420.09 58.5h1M421.59 59.5h1.5M426.09 59.5h1M429.09 58.5h2M435.09 59h1M409.56 133.5h3M412.56 133h1M417.06 134.5h3M421.56 133.5h1M423.06 132.5h3M426.06 133.5h2M429.06 133.5h3M432.06 134h1M436.56 132.5h1.5M438.06 133.5h1.5M439.56 133h3M441.06 133.5h3M409.43 139.5h3M410.93 140h3M415.43 138.5h1M419.93 139h1M421.43 140h2M422.93 138.5h1.5M424.43 139.5h2M427.43 138h3M428.93 139h1M436.43 140h1M437.93 139h1M439.43 139h2M408.57 144.5h1.5M408.57 145h2M410.07 144.5h1M417.57 145h1.5M420.57 145.5h1.5M425.07 144.5h3M425.07 145h1M428.07 144.5h1M429.57 144h1M435.57 145.5h1M411.87 147h3M422.37 146h2M428.37 147.5h3M429.87 146.5h1M432.87 145.5h2M434.37 146h3M409.74 150h2M411.24 150h3M411.24 150h1M414.24 149h1.5M414.24 151h1M417.24 150h1M423.24 150h3M424.74 149h1M429.24 149.5h2M412.96 152h3M415.96 152h1M418.96 151.5h2M421.96 153h1.5M423.46 152h2M427.96 152.5h1.5M433.96 152h2M433.96 152.5h1M406.41 155.5h1M409.41 155.5h3M413.91 154.5h1.5M419.91 155h1.5M419.91 156.5h1M427.41 155h1M433.41 155.5h1M433.41 155.5h3M434.91 154.5h3M434.91 156h1.5M436.41 155.5h1M436.41 156h3M415.25 157.5h1.5M418.25 157h3M418.25 158.5h1M422.75 157.5h2M424.25 156.5h1M425.75 158h2M428.75 157.5h1M430.25 158.5h3M431.75 157.5h1.5M431.75 158h3M434.75 157.5h3M409.56 160h1M409.56 161h1M411.06 161.5h2M414.06 162h1M421.56 160.5h2M433.56 160h1.5M436.56 161h3M436.56 161h2M416.79 163h1.5M422.79 164h1M424.29 163.5h2M428.79 163.5h2M431.79 163.5h2M433.29 164h1M407.06 165.5h3M408.56 166h2M419.06 166h1M419.06 166.5h1M420.56 166.5h1M422.06 167.5h1M425.06 165.5h1M426.56 165.5h1.5M426.56 167.5h2M434.06 166h1M437.06 167.5h1.5M415.1 168.5h3M422.6 169h3M424.1 168.5h1.5M428.6 169.5h1.5M431.6 168.5h2M408.84 172h1M414.84 171.5h1M417.84 171h1M420.84 171h1M422.34 171h1.5M438.84 171.5h1M417.69 173.5h2M417.69 175h1M419.19 173h2M420.69 175h2M423.69 174h1M418.51 178h2M421.51 176.5h2M423.01 178.5h1M424.51 176.5h1.5M424.51 177.5h2M426.01 178h3M427.51 177.5h2M430.51 177h1.5M530.19 13h1M533.19 12.5h2M534.69 12h2M536.19 11.5h3M536.19 12.5h3M537.69 12h1M539.19 12h1M540.69 12.5h1M545.19 12h1M546.69 13.5h1.5M552.69 13.5h1M555.69 12.5h1M557.19 12.5h2M529.64 19h1M537.14 18h1M540.14 17.5h1M549.14 17h1M550.64 18.5h2M532.59 24h2M535.59 23h1M538.59 23h1.5M541.59 23.5h3M546.09 23.5h2M547.59 22.5h1M552.09 24.5h1M555.09 23h3M556.59 24.5h1.5M558.09 23h2M535.9 26.5h3M540.4 25.5h1M543.4 25.5h1M544.9 25h1M544.9 26h1M546.4 25.5h2M528.53 28h3M530.03 28h1M539.03 30h1M540.53 28.5h3M542.03 29.5h2M543.53 29h3M543.53 29.5h1M545.03 30h1M546.53 28.5h1M551.03 29h2M537.13 31h2M549.13 30h2M549.13 31.5h1M531.11 34.5h2M531.11 35h1.5M535.61 35.5h1.5M544.61 35.5h3M550.61 34h1M552.11 33.5h1.5M553.61 35h1M558.11 34.5h2M558.11 35h3M531.32 37.5h1M535.82 36h1M538.82 36.5h1M538.82 37h3M541.82 36.5h1M543.32 35.5h1M544.82 36h1M546.32 37h2M556.82 36.5h1M528.16 39.5h1M528.16 40h1.5M529.66 41h3M532.66 41h3M535.66 39h1.5M537.16 39h2M540.16 40h1M547.66 39h3M550.66 41h3M555.16 39.5h1M533.23 43h1.5M539.23 42.5h2M542.23 41.5h3M543.73 42.5h3M545.23 42.5h1.5M546.73 42h2M551.23 41.5h3M551.23 42.5h3M552.73 43h1.5M557.23 42.5h1M533.65 45.5h1M544.15 46.5h1.5M545.65 44.5h1M545.65 45.5h2M554.65 45.5h1M556.15 45h1.5M536.62 46.5h3M538.12 47.5h1M542.62 48.5h2M550.12 47.5h1M527.9 50h3M527.9 51h1M535.4 52h1.5M544.4 50.5h2M545.9 50.5h1M547.4 51h2M548.9 50h1.5M548.9 51h2M553.4 50.5h1M556.4 51.5h1.5M532.28 57h1.5M535.28 56.5h2M535.28 57h1M536.78 55.5h1M538.28 57.5h1M544.28 56.5h2M544.28 56.5h1M545.78 55.5h1M545.78 56.5h1.5M547.28 56.5h2M550.28 57.5h2M556.28 55.5h1M557.78 56.5h1M559.28 57h1.5M526.85 134h1M529.85 133h1.5M532.85 132.5h1M534.35 133.5h1M535.85 133.5h1.5M538.85 132.5h1M540.35 134.5h1M541.85 134h2M543.35 133h1.5M543.35 134.5h1M547.85 133h1.5M553.85 133.5h1M553.85 133.5h2M555.35 134.5h3M524.91 139.5h1.5M529.41 139h1M529.41 139h2M538.41 139h1.5M539.91 140h2M544.41 140h3M550.41 139h1M556.41 140h3M530.99 144.5h1M536.99 145h2M539.99 144.5h1M547.49 145.5h3M548.99 144.5h1M550.49 144.5h1.5M551.99 144h1.5M551.99 144.5h1.5M557.99 143.5h1.5M528.32 151h2M531.32 150.5h2M532.82 151h1.5M535.82 149h1M538.82 149.5h2M552.32 150h2M555.32 150.5h3M524.59 155.5h1M527.59 155h1M532.09 154.5h3M532.09 155.5h2M533.59 155.5h1M536.59 155.5h1M539.59 155h2M539.59 156.5h2M551.59 155h2M556.09 155.5h1.5M536.85 162h1.5M538.35 160.5h3M539.85 162h1M545.85 160h1M547.35 161h1.5M548.85 160.5h1M550.35 161h2M553.35 160h1.5M554.85 160.5h3M528.9 163.5h1.5M530.4 163h1.5M536.4 164h1M537.9 162.5h2M539.4 163.5h1M540.9 163h1M546.9 163.5h1M525.12 167h1M528.12 166h3M528.12 167.5h2M529.62 167.5h1.5M532.62 166.5h1.5M534.12 166h1M534.12 166.5h1M535.62 167h1M541.62 165.5h1M546.12 166h1M547.62 167h1M552.12 167h1M553.62 166h1M555.12 167.5h1M556.62 166h3M526.87 173h3M528.37 171.5h1M529.87 171.5h1M531.37 171h1M535.87 171h2M537.37 172.5h1M544.87 171h1M547.87 171.5h3M549.37 171h2M553.87 171h2M527.48 178h1.5M528.98 177h1M528.98 178h2M530.48 178h1M543.98 177.5h1M546.98 177.5h2M548.48 176.5h2M548.48 177.5h1M549.98 177.5h3M530.4 179.5h1.5M531.9 179h2M534.9 180h1M537.9 179.5h1.5M539.4 179.5h3M543.9 179h1.5M545.4 179.5h1M552.9 179.5h1M174.77 92.5h1.5M176.27 92.5h1M176.27 93h1.5M177.77 93h1.5M180.77 92h2M180.77 92.5h1M182.27 92.5h1.5M183.77 91.5h3M183.77 92.5h1M189.77 93h1.5M195.77 92h1M201.77 93h2M204.77 92.5h1M206.27 91.5h2M170.63 98h3M170.63 99h3M172.13 97h1M172.13 98.5h1M175.13 99h1M181.13 98h1M203.63 98.5h1M205.13 97.5h1M176.8 100h1M178.3 99h1.5M178.3 100.5h1M179.8 100h3M182.8 99h3M193.3 100h2M200.8 101h3M202.3 100.5h1M203.8 99.5h3M203.8 100h1M205.3 99h1M205.3 100h1.5M206.8 99.5h2M177.69 103.5h1M179.19 103.5h1.5M180.69 103.5h3M186.69 103.5h1M197.19 104h2M201.69 102.5h2M203.19 104.5h1M204.69 103h1M207.69 104h1.5M174.07 108.5h2M175.57 109.5h3M177.07 108h1M177.07 109.5h3M178.57 109.5h2M180.07 109.5h1M184.57 110h3M186.07 109h2M187.57 108h2M198.07 108h1M199.57 108.5h3M201.07 109h1.5M202.57 108.5h3M205.57 109h2M181.52 110.5h1M181.52 111h1.5M183.02 110.5h2M183.02 111.5h2M184.52 110h1M190.52 111h3M193.52 111h1M204.02 112h1.5M177.59 113.5h3M179.09 113.5h2M180.59 115h2M183.59 115h3M185.09 114h1M186.59 115h3M201.59 114h2M201.59 115.5h2M204.59 115h2M207.59 114.5h1M207.59 115h1M171.75 121h1.5M173.25 120h1.5M191.25 119.5h2M197.25 119h3M201.75 121h3M172.33 218.5h3M176.83 218.5h1M179.83 218.5h1M182.83 217.5h1M200.83 217.5h1M203.83 218.5h1.5M206.83 219h1M176.18 220.5h1.5M177.68 221h2M183.68 221h3M185.18 221.5h1.5M198.68 220h1M201.68 221h2M203.18 219.5h1.5M174.82 223.5h3M176.32 223h2M177.82 224.5h1M180.82 224.5h1M195.82 224h3M201.82 224h1M203.32 223.5h3M203.32 224h3M207.82 224h1M175.13 229.5h1.5M175.13 230h2M181.13 229.5h2M184.13 230.5h3M187.13 230.5h1M190.13 230.5h1M193.13 230h1M196.13 229h1.5M200.63 228.5h1.5M202.13 230h1M203.63 228.5h1.5M205.13 230.5h1M206.63 229h3M173.52 234h1.5M175.02 235h3M178.02 235h3M179.52 234.5h1.5M179.52 235.5h2M181.02 236h3M182.52 236h1.5M187.02 234.5h2M202.02 235.5h1M206.52 235h2M177.23 237.5h1.5M183.23 237h2M183.23 238h1M186.23 237h1M189.23 237h1M190.73 236.5h1M192.23 236h1M193.73 237h1M201.23 236.5h1.5M202.73 236h3M202.73 238h1M31.08 99.5h1M32.58 99.5h1M37.08 99.5h1M41.58 99h2M43.08 99.5h3M44.58 100h1M49.08 99.5h2M50.58 99.5h1.5M53.58 98.5h1M56.58 99.5h3M38.02 101.5h1.5M32.66 105h1M32.66 106h1.5M34.16 104.5h1M37.16 104h1M46.16 104h2M49.16 105h1.5M49.16 105h2M50.66 106h1M52.16 105h1.5M32 110h3M35 111h2M38 111h1.5M44 111.5h1M45.5 110.5h1M45.5 110.5h1M50 110h2M38.9 112h1M40.4 113h3M43.4 112.5h3M46.4 112.5h3M47.9 113.5h1M34.32 115.5h2M47.82 116h1M49.32 116h3M33.73 218.5h1M35.23 217.5h2M35.23 219h3M36.73 219.5h1M39.73 218.5h1M50.23 218.5h1M51.73 218.5h1M35.96 221.5h1.5M38.96 220.5h1M40.46 220.5h1M41.96 221.5h1M46.46 219.5h1.5M49.46 219.5h1M33.57 223h1M33.57 224h1M36.57 223h1.5M39.57 223h1M41.07 224h2M42.57 223h2M44.07 225h1M47.07 224h3M51.57 225h2M54.57 224h1M56.07 223h1M56.07 224.5h2M31.97 229h1M33.47 228.5h2M33.47 229.5h1M36.47 229h1.5M42.47 229.5h1.5M42.47 229.5h3M49.97 229.5h1.5M41.6 232h2M46.1 231h2M49.1 231.5h2M33.16 234.5h3M34.66 235h1.5M43.66 235h3M54.16 234h3M38.08 237h1.5M39.58 236h1M41.08 236h2M48.58 237h1M175 250h1.5M178 252h2M187 252h1.5M194.5 252h3M196 251h2M200.5 251h1M208 251h1M304.5 252.5h3M309 252.5h1M316.5 252h1.5M319.5 252h1M406 213.5h3M409 213.5h1.5M409 214.5h1M416.5 212.5h3M546.5 212h2M548 213.5h1M551 213h3M552.5 212h1M552.5 213.5h1M558.5 212.5h3M561.5 213.5h1M567.5 212.5h1.5M570.5 212.5h2M572 213.5h1.5M575 212h1M529.5 252h3M532.5 253.5h3M534 253h1M538.5 253.5h1.5M544.5 252h1M544.5 253.5h2" stroke="#2aa43a" stroke-width="1.1" fill="none" opacity="0.8"/><path d="M183.58 11.5h3M189.58 12h2M197.08 12h3M198.58 13.5h1.5M200.08 12h1M203.08 12.5h1.5M188.39 14.5h1M176.5 19h1M191.5 17.5h3M199 18h1M200.5 18.5h3M190.65 23.5h2M193.2 29h2M199.2 28h1M202.2 29.5h2M203.7 28.5h3M205.2 29h1M178.47 35h2M179.97 35.5h1M184.47 34.5h1M187.47 34.5h1M179.58 39h1M185.58 41h1.5M187.08 40h1M187.08 41h1M188.11 42.5h1M189.61 42.5h3M195.61 42h3M181.49 45h3M181.49 45.5h1M190.49 46.5h2M182.74 52h3M187.24 50h2M193.24 52h1M196.24 51h1M199.24 51.5h1M194.66 57h1.5M196.16 55.5h1M196.16 57h1.5M199.16 56h1M178.1 133.5h1.5M184.1 134.5h1M185.6 132.5h1M187.1 133h1M187.1 134h3M199.1 133h1M200.6 133.5h1.5M188.44 138.5h1.5M189.94 140h1.5M194.44 139h1M194.44 140h3M201.94 139.5h1M182.78 142h1M190.28 142h2M191.78 141h3M190.75 145.5h1M192.25 145h3M196.75 144h3M199.75 144.5h2M202.75 145.5h1M182.23 146.5h2M197.23 146h2M200.23 147h3M178.89 150.5h3M181.89 149h3M189.39 150.5h1M193.89 151h1M199.89 150.5h2M179.29 156.5h2M191.29 155.5h1M200.29 155.5h1M204.79 155.5h2M196.31 157.5h1M180.3 160.5h1.5M196.8 160h1M201.3 161.5h1M184.54 166h2M190.54 167h3M192.04 167.5h2M202.54 166.5h1M183.43 172.5h1M186.43 171h1M193.93 172.5h3M202.93 172.5h2M180.44 177h2M180.44 177.5h1M297.47 12h3M297.47 12.5h1.5M304.97 13h3M310.97 11.5h1.5M312.47 12h1M312.47 12.5h1.5M316.97 11.5h2M318.47 12.5h3M319.97 12h1M319.97 13.5h1.5M301.48 17h1M314.98 19h1.5M319.48 17.5h1M303.15 20h1M304.65 21h1M312.15 20h1.5M312.15 20.5h3M297.64 24.5h2M305.14 23.5h3M315.64 23.5h1M315.64 24h1M320.14 24h3M295.21 28.5h1.5M301.21 29.5h1M304.21 30h2M317.71 29.5h2M303.98 30.5h3M311.48 30.5h3M311.48 32h2M298.45 35.5h1M308.95 34.5h1M311.95 33.5h1M314.95 34.5h2M316.45 35h2M319.45 34h2M303.18 39.5h3M304.68 40h1M312.18 41h1M319.68 40h2M321.18 40.5h3M293.76 46h2M305.76 45.5h1M310.26 45h3M317.76 46h2M295.49 51h3M295.49 51.5h1.5M298.49 51h3M305.99 50h3M299.53 54h3M301.03 52.5h2M301.03 53h3M299.52 57.5h1M319.02 56.5h3M319.02 57.5h1M296.16 133.5h1.5M299.16 133h2M312.66 134.5h1M307.9 134.5h2M299.28 138.5h1M300.78 138.5h2M306.78 140h3M296.65 140h2M302.65 141h1M308.65 140.5h3M311.65 140.5h1M293.5 145.5h1M295 144.5h2M308.5 145h1M310 144h2M313 144.5h1M307.18 149.5h1M294.56 155h3M300.56 155h3M300.56 155.5h3M303.56 155h2M314.06 156h1.5M315.56 156.5h1M304.82 157.5h1M299.44 161.5h1M308.44 161.5h3M311.44 160h2M312.94 160.5h1M318.94 162h3M303.56 163h1M305.06 163.5h1M306.77 167.5h1.5M311.27 166.5h1M314.27 167.5h2M300.89 172.5h1.5M305.39 171h1.5M311.39 171h1M314.39 173h2M291.5 177h1M296 178.5h1M297.5 177.5h1M315.5 177.5h1.5M415.22 12.5h1M415.22 13h1M418.22 13.5h3M429.17 17.5h2M429.17 19h2M433.67 19h1M412.18 23.5h1M413.68 23.5h1M421.18 23.5h2M424.18 24h2M427.18 23.5h1M436.18 24.5h1M415.7 28h1M420.2 28h3M424.7 28.5h1.5M427.7 29h1M433.7 29h3M435.2 29.5h2M438.2 30h3M418.8 34h3M439.8 33.5h1M421.66 36h3M413.82 39.5h1.5M413.82 41h1M418.32 41h1M419.82 40.5h1M421.32 41h3M422.82 39h3M422.82 40h3M417.95 44.5h1M420.95 44.5h1M431.45 45.5h1.5M434.45 44.5h3M437.45 44.5h2M422.91 47.5h1M425.91 48.5h3M414.65 51.5h1M419.15 50.5h1M419.15 52h1M434.15 50h1M421.23 55.5h3M433.23 56h2M417.09 58h2M423.09 59h1.5M426.09 57.5h2M427.59 59h3M430.59 58.5h3M430.59 59h1.5M411.06 133h1M412.56 134.5h2M415.43 139h1M418.43 138h3M421.43 139h1M422.93 139h1M410.07 144.5h1.5M416.07 143.5h1M423.57 144h1M426.57 144.5h1M431.07 145.5h1.5M435.57 144.5h2M414.87 147h1.5M420.87 147.5h3M415.74 150h1M426.24 150h2M429.24 150h2M435.24 150.5h2M420.46 153h3M430.96 151h3M410.91 154.5h1M416.91 156h1M418.41 156h1M421.41 156.5h2M425.91 154.5h1M416.75 158h1M427.25 157h3M411.06 160h3M415.56 161.5h2M417.06 161.5h1.5M418.56 161h1M418.56 162h3M426.06 161.5h1.5M413.06 167.5h3M416.06 166.5h1M429.56 167h1M417.84 172h1.5M426.84 173h2M428.34 172h1M412.51 178.5h3M414.01 178.5h2M427.51 178.5h1.5M531.69 11.5h2M533.19 12h1M545.19 13h1M549.69 12.5h2M538.64 19h1M541.64 19h3M543.14 17h2M546.14 17h2M535.59 24h1M537.09 23.5h1M538.59 23.5h1.5M544.59 23.5h2M531.53 28h2M531.53 29h2M534.53 29.5h1M546.53 29h1M548.03 29h1M532.61 34h1.5M535.61 33.5h1M537.11 34h1M541.61 33.5h1.5M543.11 34.5h1.5M547.61 33.5h1M537.32 37.5h1.5M552.32 36.5h1M534.73 42.5h1.5M536.23 41.5h2M548.23 43h1M549.73 42h1M532.15 44.5h2M539.65 45h2M548.65 46.5h1.5M551.65 45.5h3M553.15 45h1M544.4 52h1.5M550.4 51h1.5M530.78 55.5h1M532.28 55.5h1M533.78 57h2M547.28 56.5h1.5M550.28 56h1.5M551.78 57h1.5M538.85 134h3M546.35 133.5h2M550.85 134h3M552.35 133.5h1M532.41 139.5h3M533.91 138.5h2M547.41 138.5h1M554.91 139h1M530.99 144.5h2M533.99 144.5h1.5M536.99 143.5h1M542.99 144.5h1M553.49 144h1M534.32 149.5h1M535.82 150.5h1M540.32 149h1M541.82 149.5h1M543.32 150.5h2M544.82 150.5h2M546.32 150.5h1M547.82 150.5h2M549.32 150h1.5M529.09 155.5h1M547.09 155h2M553.09 155h1.5M532.35 161h2M535.35 161.5h2M539.85 161h3M531.12 166.5h1M532.62 166.5h2M535.62 165.5h1.5M537.12 166.5h1.5M538.62 166h1M532.87 172h3M535.87 172h1.5M547.87 172h2M531.98 178h1M533.48 177.5h1M546.98 178.5h3M533.4 178.5h2M539.4 180.5h3M540.9 179.5h1.5M540.9 179.5h3M542.4 180h1M185.27 91.5h1.5M188.27 92.5h2M194.27 93.5h3M176.63 97.5h1M184.13 97h3M185.63 98h2M188.63 98.5h2M196.13 98h2M200.63 98h3M202.13 98h1.5M181.3 100.5h3M188.8 101h1M191.8 99h3M193.3 99.5h1.5M196.3 100h2M180.69 103h2M185.19 103.5h2M185.19 104h1M188.19 103.5h1.5M195.69 102.5h1.5M200.19 104h1M201.69 104h2M183.07 108.5h2M184.57 108.5h1M186.07 109h2M192.07 109.5h1M195.07 109.5h1M204.07 108h1.5M204.07 110h1M205.57 110h1.5M189.02 112h1.5M192.02 110.5h2M192.02 111h1M196.52 111h2M199.52 110h1.5M194.09 114.5h1M200.09 114h1.5M177.75 120h2M179.25 120h2M183.75 120h3M204.75 119h1M204.75 120.5h1M206.25 120.5h3M199.33 218.5h3M205.33 218h1M205.33 218.5h1M182.18 220.5h1M188.18 221h1M177.82 223.5h3M195.82 225h3M198.82 225h1.5M176.63 230h1M185.52 235.5h2M196.02 236h3M205.02 235.5h3M206.52 235h3M180.23 236h1M187.73 237h3M190.73 237.5h1.5M196.73 237h1M43.08 100.5h2M44.58 98.5h1M49.08 98.5h3M38.02 101.5h2M41.02 101.5h2M41.02 101.5h3M42.52 101.5h2M44.02 101h2M44.02 102.5h3M48.52 101h1.5M50.02 100.5h2M38.66 105.5h1M40.16 106h1M43.16 106h1M36.5 110.5h1M42.5 111h1M47 110h3M47 110.5h3M48.5 109.5h1M37.32 115h1M40.32 116h2M43.32 115h3M44.82 116h3M49.32 117h1M44.23 219h1.5M48.73 217.5h3M50.23 218.5h2M41.07 223.5h1M34.97 228.5h3M40.97 229.5h2M43.97 229h1.5M45.47 228.5h1.5M34.66 235h1M39.16 235h3M42.16 235h1M48.16 234.5h1.5M197.5 251.5h1M199 251h3M200.5 251h1M306 252.5h1M312 251.5h1M313.5 251.5h1M406 214.5h1M410.5 213.5h1M419.5 214h3M421 213h3M422.5 212.5h1M424 213.5h1M425.5 213.5h3M554 213.5h1M555.5 212h1.5M569 212h2M534 252h1M537 253.5h2M540 251.5h1.5M546 252.5h1" stroke="#8ab828" stroke-width="1.1" fill="none" opacity="1"/><path d="M177.58 12h3M179.08 12.5h1M182.08 13.5h1M183.58 12.5h2M201.58 12.5h3M191.39 15h2M192.89 15.5h2M179.5 18h1.5M182.5 18h1M184.65 24h3M186.15 23.5h3M189.15 23h1M195.15 23h1.5M196.65 22.5h1.5M198.15 23.5h1M202.65 24.5h1M187.2 29h1M203.7 29.5h3M182.97 33.5h3M199.47 35h2M203.97 34.5h1M182.58 41h1M184.08 40.5h1M194.58 40.5h1M187.49 45.5h3M197.99 45.5h3M182.74 50h3M184.24 52h1M194.74 50h2M194.74 52h1M181.16 57h1.5M188.66 57.5h2M200.66 56h1.5M202.16 57h2M193.1 134h1.5M199.1 133.5h1.5M180.94 139.5h3M195.94 138h3M200.44 138.5h1M178.75 144.5h2M181.75 145.5h2M183.25 143.5h1M186.25 143.5h1.5M186.73 146.5h1.5M189.73 147h2M191.23 145.5h1.5M187.89 150h1M187.89 151h1.5M196.89 150h1M180.79 156h1.5M185.29 155h1M197.29 155h1M200.29 154.5h2M191.81 158.5h1M189.3 160.5h1M193.8 161h3M184.54 167h1M193.54 166.5h2M195.04 167.5h1M199.54 165.5h1M201.04 166h1M201.04 167.5h1M181.93 172.5h3M195.43 172.5h3M177.44 177h1M189.44 178.5h3M192.44 177.5h1M199.94 177.5h2M303.47 12.5h1M307.97 12h1M313.97 11.5h3M313.97 13.5h3M315.47 12.5h3M318.47 11.5h1M298.48 19h2M299.98 17h3M299.98 19h2M313.48 19h1.5M316.48 18h1M302.71 29.5h1M304.21 28h1M305.71 29.5h3M305.95 35.5h1M307.45 33.5h2M310.45 34.5h2M301.68 40h1.5M315.18 41h1.5M318.18 40h1.5M308.76 46.5h2M313.26 44.5h1M301.49 50.5h1.5M305.99 52h3M314.99 51h1M314.99 51.5h2M308.53 53h3M299.52 56.5h1M305.52 57h1M308.52 56h1M308.52 56.5h1M297.66 132.5h3M297.66 133.5h2M308.16 134.5h1.5M309.66 133h3M309.66 134h1.5M305.28 139.5h3M309.78 139h2M296.5 143.5h3M301 145.5h1M308.5 144.5h2M299.68 149.5h3M310.18 150h2M297.56 155.5h3M297.56 156.5h2M299.06 156h3M305.06 155h1.5M306.94 160h1M309.94 161h1M308.27 166.5h3M309.77 166h2M311.27 166.5h3M314.27 165.5h1.5M296 177.5h2M299 178h2M413.72 12.5h1M416.72 13.5h3M418.22 11.5h1M427.22 13.5h1M428.72 12h1.5M430.67 19h1M433.67 17.5h1M428.68 24.5h1.5M433.18 23.5h1M420.2 29h1M424.7 29.5h2M426.2 29h1M436.7 28.5h1M415.8 34h2M423.3 34.5h1M429.3 35.5h2M430.8 35.5h1M436.8 34.5h1M438.3 34.5h1.5M426.16 37.5h3M432.16 35.5h3M415.32 40h3M418.32 39h2M424.32 40h1M428.82 39h1.5M431.82 40h2M433.32 39.5h1M414.95 45.5h1M422.45 44.5h1M437.45 45.5h3M438.95 45.5h3M418.41 47h3M426.65 50h1.5M419.73 57.5h1M422.73 57h1.5M424.23 57.5h2M427.23 56.5h1.5M434.73 56.5h2M418.56 133.5h1.5M418.56 133.5h1.5M427.56 133.5h1M429.06 133.5h2M428.93 139.5h1M430.43 138.5h1M430.43 140h1M418.74 150.5h2M424.74 151h1M433.74 151h2M422.91 156.5h1M417.06 161h2M420.06 161h1M423.06 161h1M426.06 161h3M427.56 161h1M429.06 161.5h1M432.06 161.5h3M414.56 167.5h2M423.84 172h1.5M432.84 172h1.5M417.01 177.5h1M421.51 177.5h3M540.69 12.5h2M546.69 12h3M548.19 11.5h1M549.69 13h2M537.09 23h1M544.59 23.5h2M532.61 34.5h1.5M537.11 34.5h1.5M541.61 35h1.5M549.11 34.5h1.5M540.16 40h1M541.66 41h3M543.16 41h1M556.66 39.5h1M543.73 41h1M538.15 45h1M550.15 45.5h3M533.9 51h1.5M535.4 50h1.5M536.9 51h2M545.9 51.5h3M547.4 50h3M554.78 57.5h3M535.85 133h1.5M537.35 133.5h1M540.35 133h1M547.85 133.5h3M532.41 138.5h3M542.91 140h2M551.91 139h1.5M553.41 140h2M533.99 145h2M545.99 144.5h1.5M545.99 145h3M535.09 156h1M536.59 155.5h3M538.09 154.5h2M542.59 155.5h2M542.59 156.5h2M550.09 155h3M550.09 156.5h1M530.85 160h1M530.85 161h1M533.85 160h2M536.85 160.5h3M542.85 160.5h2M544.35 160.5h1.5M538.62 166.5h1M541.62 166.5h1M549.12 166.5h1M532.87 172h3M534.37 172h3M537.37 171.5h1M538.87 173h1M543.37 171h1M536.48 178.5h2M539.48 178.5h3M545.48 177.5h2M551.48 177.5h1M179.27 93.5h3M186.77 91.5h1.5M191.27 92h1.5M192.77 92.5h2M203.27 91.5h3M193.13 97.5h2M199.13 98.5h1M184.3 99.5h1M187.3 101h1M196.3 101h2M199.3 100h2M182.19 103h3M183.69 103.5h1M192.69 104.5h3M200.19 103h1M203.19 102.5h3M180.07 109h3M193.57 110h1.5M196.57 108.5h3M202.57 109h1M195.02 111h3M188.09 115.5h1.5M195.59 115h1M203.09 114.5h2M188.25 121h1M188.83 219h1.5M197.18 220.5h1.5M200.18 220.5h3M185.32 224h3M192.82 224h1M192.82 225h1.5M196.13 230.5h1M197.63 230h1M197.52 236h2M181.73 237.5h3M189.23 236.5h1M34.08 99.5h3M38.58 99.5h1M38.07 223.5h1M38.07 224.5h3M39.57 224h1.5M44.07 223h3M45.57 224h1M39.47 228.5h3M40.97 228.5h1M46.97 230.5h1M37.66 234.5h1.5M43.66 235.5h1M45.16 236h2M182.5 250h3M190 250.5h3M194.5 251h3M413.5 214.5h1M418 214h1M555.5 212.5h1M557 213h1.5M558.5 212h3M566 212.5h3M535.5 252.5h1M538.5 252h1" stroke="#f07818" stroke-width="1.1" fill="none" opacity="1"/><path d="M180.58 12h1.5M186.58 11.5h1M186.58 13h2M195.58 12h3M198.58 11.5h1M182.5 17.5h3M193 17.5h1M195.15 24h1M198.15 23.5h1M199.65 23.5h1M200.7 28h1M191.97 35h1M196.47 35h1.5M197.97 34.5h2M197.97 35h3M200.97 33.5h1M184.08 40h2M191.58 40.5h3M196.08 41h2M196.49 44.5h1.5M196.49 45.5h3M184.16 56.5h1.5M194.6 132.5h1.5M191.44 139.5h1M198.94 138h3M189.25 143.5h1M199.75 145h1M189.39 150h1M196.89 150h2M183.79 155h1M190.8 160.5h3M178.94 178h2M184.94 178.5h1M316.48 17h3M300.64 23h2M303.64 22.5h1.5M299.71 28.5h1M316.68 40h2M307.26 45h3M308.76 45h2M310.26 46.5h3M296.99 50h1M302.99 50h1.5M304.02 56h1.5M296.28 139h3M311.28 138h2M315.78 138h1.5M302.5 144h1M312.56 155h1M297.94 160.5h1.5M311.44 161h2M299.27 167h1.5M306.77 166h1M309.77 166.5h1M300.5 177.5h2M306.5 177.5h1.5M309.5 177.5h2M428.68 22.5h1M433.18 22.5h2M423.2 28.5h1.5M429.2 29h1.5M432.2 29.5h1M417.3 35.5h1M423.3 33.5h1M424.8 34.5h2M432.3 34.5h1.5M427.32 40.5h1M431.82 40h3M419.73 55.5h1M433.23 57h1M426.06 133h1M430.56 132.5h1M432.06 132.5h1M414.57 144.5h1M416.07 144.5h1.5M429.57 145.5h2M421.74 149h3M427.74 150.5h1.5M425.91 156.5h2M415.56 160h1M539.19 12.5h3M543.69 12h1M551.19 13.5h3M540.11 33.5h2M549.11 34.5h2M550.61 34.5h1.5M555.16 40h1.5M541.28 56.5h3M536.91 140h1M550.49 144.5h3M542.85 161.5h1M543.12 166.5h2M530.48 177h1M540.98 177.5h3M186.77 93h3M192.77 92.5h1M187.13 97h1M199.13 97.5h1.5M197.8 100h1.5M197.8 101h3M183.69 102.5h2M188.19 103.5h1M178.57 108.5h1M190.57 108.5h3M180.75 120h1M191.25 120.5h1M195.75 119h1M200.25 119.5h1M184.33 218h1M184.33 219.5h3M193.33 218.5h3M197.83 218h1.5M197.83 218.5h1M192.68 220h1.5M192.68 221h2M182.32 224.5h1M185.63 229.5h1.5M185.52 235h3M188.52 235.5h3M190.02 235.5h1.5M191.52 235h2M194.52 235h1M194.52 235.5h1.5M35.58 99.5h1M35.58 100.5h3M42.16 236h3M188.5 251h1M301.5 252h1M412 214h2M419.5 212.5h3" stroke="#ff3010" stroke-width="1.1" fill="none" opacity="1"/><path d="M188.08 13h1M184 17h2M185.5 17.5h1M190 18.5h1.5M183.15 24.5h2M186.15 24h1M189.15 24.5h1M190.65 23.5h3M188.7 30h3M193.2 29h1.5M196.47 34.5h1.5M194.58 39.5h1.5M197.58 40h1.5M184.49 44.5h1.5M187.49 46h1M190.49 45.5h2M191.99 45.5h3M185.66 57.5h2M187.16 56h1.5M187.16 57h2M190.16 56.5h3M197.66 56.5h3M181.75 143.5h3M183.25 145.5h1M186.25 145h3M193.75 143.5h3M193.75 144.5h1M195.25 144.5h3M198.25 144h1M198.25 145.5h1M198.39 151h2M188.29 155.5h1.5M186.44 177.5h1M187.94 177h1M190.94 178.5h3M195.44 177.5h1M196.94 177.5h2M304.48 18.5h2M314.98 17h1.5M299.71 30h1M304.68 39h1M307.68 39.5h1M305.76 44.5h1M299.99 51h3M301.49 51h2M307.49 50.5h3M307.49 52h1.5M310.49 51h3M313.49 50h1M304.02 57.5h1M302.28 138h1.5M305.28 138h1M430.18 24h2M418.8 34.5h1.5M420.3 34.5h3M421.8 35h1M426.3 34.5h2M427.8 34h2M419.45 46h1M424.56 133.5h1.5M426.57 144.5h1M552.11 35h1M535.66 40.5h2M541.66 39.5h3M546.16 41h3M549.16 39h2M549.16 40h1.5M533.91 139.5h1M535.41 138h2M547.41 139.5h1M550.41 138h1M535.09 155h3M541.09 155h3M545.59 156h1M540.12 167.5h3M549.12 166.5h1M533.48 177.5h3M537.98 177.5h1M539.48 177h1M540.98 178.5h2M542.48 176.5h1M542.48 178h3M185.27 93h1.5M191.27 93.5h2M195.77 93.5h3M198.77 92h1.5M198.77 92.5h3M200.27 92.5h1M201.77 92.5h1M178.13 97.5h1M182.63 97h1M182.63 98.5h3M187.13 98h1M188.63 98h3M190.13 99h3M191.63 97h1M194.63 98h1M197.63 98h3M200.63 97h1.5M185.8 99h3M185.8 100h1.5M194.8 100h1M186.69 102.5h2M189.69 103h3M194.19 104.5h2M198.69 103.5h2M181.57 109h1M181.57 110h1M187.57 109.5h1M189.07 109h1M189.07 109h1.5M192.07 108h1M198.07 109h1.5M199.57 110h3M182.09 115.5h2M191.09 114.5h2M191.09 114.5h1M192.59 113.5h1M195.59 113.5h1M180.75 121h3M182.25 119h1.5M185.25 119h2M185.25 121h3M189.75 120h1M194.25 120.5h3M195.75 121h3M201.75 119.5h1M178.33 219h2M181.33 218.5h1M185.83 217.5h1M185.83 219.5h1M190.33 217.5h1M190.33 219h1M194.83 218.5h1.5M194.83 218.5h3M196.33 219.5h1M199.33 217.5h3M183.82 225h3M185.32 225h2M186.82 223h1.5M188.32 224h1M189.82 225h1M194.32 224h1M197.32 224h2M197.32 224h1M198.82 223h3M200.32 224h1M200.32 224h3M201.82 223.5h1.5M204.82 224h1.5M184.13 228.5h1.5M191.63 229.5h2M194.63 230h3M197.63 229h1.5M184.02 235.5h1.5M190.02 235h2M191.52 234h3M200.52 235.5h2M37.08 99.5h3M181 250h1.5M182.5 251.5h1M184 250.5h1M187 250.5h2M188.5 251.5h1M190 251h1M193 251h1M202 252h1.5M415 214.5h1M557 212.5h1M560 212.5h1M564.5 212.5h1.5M564.5 213.5h3M543 252.5h1.5" stroke="#ffffff" stroke-width="1.1" fill="none" opacity="1"/></svg>
<div style="left:1591px;top:83px;width:1.2px;height:300px;background:#000;"></div>
<div style="left:842px;top:83px;width:751px;height:300px;overflow:hidden">
<div class="t dvmb" style="top:52.8px;font-size:9.5px;line-height:12px;letter-spacing:0.35px;left:3px;color:#ff0000;">00:20</div>
<div class="t dvmb" style="top:112.8px;font-size:9.5px;line-height:12px;letter-spacing:0.35px;left:3px;color:#ff0000;">00:19</div>
<div class="t dvmb" style="top:172.8px;font-size:9.5px;line-height:12px;letter-spacing:0.35px;left:3px;color:#ff0000;">00:18</div>
<div class="t dvmb" style="top:232.8px;font-size:9.5px;line-height:12px;letter-spacing:0.35px;left:3px;color:#ff0000;">00:17</div>
<div class="t dvmb" style="top:292.8px;font-size:9.5px;line-height:12px;letter-spacing:0.35px;left:3px;color:#ff0000;">00:16</div>
</div>
<div style="left:839px;top:385px;width:756px;height:32px;background:#d9d9d9;box-shadow:inset 0 1px 0 #fff,inset 0 -1px 0 #fff;"></div>
<div style="left:962.5px;top:391px;width:632px;height:21px;background:#d4d0c8;"></div>
<div style="left:840.5px;top:391.8px;width:122px;height:19.5px;background:#d4d0c8;box-shadow:inset 1px 1px 0 #828282,inset -1px -1px 0 #fff;"></div>
<div style="left:966px;top:393px;width:99.5px;height:16px;background:#d4d0c8;box-shadow:inset 1px 1px 0 #828282,inset -1px -1px 0 #fff;"></div>
<div style="left:1014px;top:394px;width:2px;height:14px;background:#fff;"></div>
<div style="left:1016px;top:394px;width:1px;height:14px;background:#404040;"></div>
<div style="left:1014px;top:407px;width:3px;height:1px;background:#404040;"></div>
<div style="left:1072px;top:393px;width:99px;height:16px;background:#d4d0c8;box-shadow:inset 1px 1px 0 #828282,inset -1px -1px 0 #fff;"></div>
<div style="left:1100px;top:394px;width:2px;height:14px;background:#fff;"></div>
<div style="left:1102px;top:394px;width:1px;height:14px;background:#404040;"></div>
<div style="left:1100px;top:407px;width:3px;height:1px;background:#404040;"></div>
<div style="left:1175px;top:387px;width:118px;height:28.5px;background:#000;"></div>
<div class="t sans" style="top:386px;font-size:23px;line-height:30px;letter-spacing:0.21px;left:1188.5px;color:#ffff00;">00:21:03</div>
<div style="left:1307px;top:393px;width:100px;height:16px;background:#d4d0c8;box-shadow:inset 1px 1px 0 #828282,inset -1px -1px 0 #fff;"></div>
<div style="left:1356px;top:394px;width:2px;height:14px;background:#fff;"></div>
<div style="left:1358px;top:394px;width:1px;height:14px;background:#404040;"></div>
<div style="left:1356px;top:407px;width:3px;height:1px;background:#404040;"></div>
<div style="left:1440.5px;top:391px;width:151.5px;height:19px;background:#c3c3c3;box-shadow:inset 1px 1px 0 #404040,inset -1px -1px 0 #fff;"></div>
<div style="left:1442px;top:392.5px;width:88px;height:16.5px;background:#6a5acd;"></div>
<div style="left:1529.5px;top:392.5px;width:1.5px;height:16.5px;background:#000;"></div>
<div class="t sans" style="top:394px;font-size:12px;line-height:16px;letter-spacing:0.77px;left:1504px;color:#ffff00;">3 dB</div>
<div style="left:1615px;top:0px;width:289px;height:470px;background:#9aa0b5;box-shadow:inset 2px 2px 0 #d3d6e3,inset -2px -2px 0 #727889;"></div>
<div style="left:1619px;top:4px;width:281px;height:462px;background:#70ffff;box-shadow:inset 1px 1px 0 #727889,inset -1px -1px 0 #d3d6e3;"></div>
<div style="left:1615px;top:24px;width:5px;height:1px;background:#727889;"></div>
<div style="left:1615px;top:25px;width:5px;height:1px;background:#d3d6e3;"></div>
<div style="left:1899px;top:24px;width:5px;height:1px;background:#727889;"></div>
<div style="left:1899px;top:25px;width:5px;height:1px;background:#d3d6e3;"></div>
<div style="left:1615px;top:445px;width:5px;height:1px;background:#727889;"></div>
<div style="left:1615px;top:446px;width:5px;height:1px;background:#d3d6e3;"></div>
<div style="left:1899px;top:445px;width:5px;height:1px;background:#727889;"></div>
<div style="left:1899px;top:446px;width:5px;height:1px;background:#d3d6e3;"></div>
<div style="left:1639px;top:465px;width:1px;height:5px;background:#727889;"></div>
<div style="left:1640px;top:465px;width:1px;height:5px;background:#d3d6e3;"></div>
<div style="left:1879px;top:465px;width:1px;height:5px;background:#727889;"></div>
<div style="left:1880px;top:465px;width:1px;height:5px;background:#d3d6e3;"></div>
<div style="left:1620px;top:5px;width:279px;height:20px;background:#9ba1b6;"></div>
<div style="left:1620px;top:5px;width:20px;height:20px;background:#9ba1b6;box-shadow:inset 1px 1px 0 #d3d6e3,inset -1px -1px 0 #727889;"></div>
<div style="left:1623px;top:12px;width:12px;height:5px;background:#9ba1b6;box-shadow:inset 1px 1px 0 #d3d6e3,inset -1px -1px 0 #727889;"></div>
<div style="left:1879px;top:5px;width:20px;height:20px;background:#9ba1b6;box-shadow:inset 1px 1px 0 #d3d6e3,inset -1px -1px 0 #727889;"></div>
<div style="left:1883px;top:9px;width:11px;height:11px;background:#9ba1b6;box-shadow:inset 1px 1px 0 #d3d6e3,inset -1px -1px 0 #727889;"></div>
<div style="left:1859px;top:5px;width:20px;height:20px;background:#9ba1b6;box-shadow:inset 1px 1px 0 #d3d6e3,inset -1px -1px 0 #727889;"></div>
<div style="left:1866px;top:12px;width:5px;height:5px;background:#9ba1b6;box-shadow:inset 1px 1px 0 #d3d6e3,inset -1px -1px 0 #727889;"></div>
<div style="left:1640px;top:5px;width:219px;height:20px;background:#9ba1b6;box-shadow:inset 1px 1px 0 #d3d6e3,inset -1px -1px 0 #727889;"></div>
<div class="t dvb" style="top:7px;font-size:13px;line-height:17px;letter-spacing:0.06px;left:1682px;color:#000000;white-space:pre;">Astronomical data</div>
<div style="left:1620px;top:25px;width:279px;height:440px;background:#70ffff;box-shadow:inset 2px 2px 0 #5cf0f0;"></div>
<div style="left:1622px;top:27px;width:275px;height:2px;background:#3a9494;"></div>
<div style="left:1622px;top:27px;width:2px;height:440px;background:#3a9494;"></div>
<div style="left:1895.5px;top:29px;width:1.5px;height:440px;background:#60e8e8;"></div>
<div style="left:1897px;top:25px;width:2px;height:440px;background:#3a9494;"></div>
<div class="t sans" style="top:27.6px;font-size:22.5px;line-height:29px;letter-spacing:-0.26px;left:1704.2px;color:#000;">Az</div>
<div class="t sans" style="top:27.6px;font-size:22.5px;line-height:29px;letter-spacing:-1.01px;left:1774px;color:#000;">El</div>
<div class="t sans" style="top:54.6px;font-size:22.5px;line-height:29px;letter-spacing:-0.13px;left:1628px;color:#000;">Moon:</div>
<div class="t sans" style="top:54.6px;font-size:22.5px;line-height:29px;letter-spacing:0.08px;left:1723.3px;color:#000;">136.86</div>
<div class="t sans" style="top:54.6px;font-size:22.5px;line-height:29px;letter-spacing:0.37px;left:1814.7px;color:#000;">61.06</div>
<div class="t sans" style="top:81.6px;font-size:22.5px;line-height:29px;letter-spacing:0.14px;left:1628px;color:#000;">Moon/DX:</div>
<div class="t sans" style="top:81.6px;font-size:22.5px;line-height:29px;letter-spacing:0.08px;left:1741.3px;color:#000;">162.42</div>
<div class="t sans" style="top:81.6px;font-size:22.5px;line-height:29px;letter-spacing:0.37px;left:1832.5px;color:#000;">52.52</div>
<div class="t sans" style="top:108.6px;font-size:22.5px;line-height:29px;letter-spacing:0.24px;left:1628px;color:#000;">Sun:</div>
<div class="t sans" style="top:108.6px;font-size:22.5px;line-height:29px;letter-spacing:0.37px;left:1720.8px;color:#000;">24.58</div>
<div class="t sans" style="top:108.6px;font-size:22.5px;line-height:29px;letter-spacing:0.44px;left:1793px;color:#000;">-68.58</div>
<div class="t sans" style="top:135.6px;font-size:22.5px;line-height:29px;letter-spacing:0.41px;left:1628px;color:#000;">Source:</div>
<div class="t sans" style="top:135.6px;font-size:22.5px;line-height:29px;letter-spacing:0.08px;left:1724.7px;color:#000;">258.57</div>
<div class="t sans" style="top:135.6px;font-size:22.5px;line-height:29px;letter-spacing:-0.08px;left:1819.7px;color:#000;">12.80</div>
<div class="t sans" style="top:189.6px;font-size:22.5px;line-height:29px;letter-spacing:-0.76px;left:1719.5px;color:#000;">DX</div>
<div class="t sans" style="top:189.6px;font-size:22.5px;line-height:29px;letter-spacing:0.74px;left:1778.75px;color:#000;">Self</div>
<div class="t sans" style="top:216.6px;font-size:22.5px;line-height:29px;letter-spacing:0.16px;left:1628px;color:#000;">Dop:</div>
<div class="t sans" style="top:216.6px;font-size:22.5px;line-height:29px;letter-spacing:-0.35px;left:1729.5px;color:#000;">1230</div>
<div class="t sans" style="top:216.6px;font-size:22.5px;line-height:29px;letter-spacing:0.15px;left:1807.5px;color:#000;">3429</div>
<div class="t sans" style="top:243.6px;font-size:22.5px;line-height:29px;letter-spacing:0.59px;left:1628px;color:#000;">df/dt:</div>
<div class="t sans" style="top:243.6px;font-size:22.5px;line-height:29px;letter-spacing:0.24px;left:1703.75px;color:#000;">-80.31</div>
<div class="t sans" style="top:243.6px;font-size:22.5px;line-height:29px;letter-spacing:0.24px;left:1785px;color:#000;">-88.71</div>
<div class="t sans" style="top:270.6px;font-size:22.5px;line-height:29px;letter-spacing:0.53px;left:1628px;color:#000;">Spread:</div>
<div class="t sans" style="top:270.6px;font-size:22.5px;line-height:29px;letter-spacing:-0.08px;left:1735px;color:#000;">149.2</div>
<div class="t sans" style="top:270.6px;font-size:22.5px;line-height:29px;letter-spacing:-0.08px;left:1815px;color:#000;">170.4</div>
<div class="t sans" style="top:297.6px;font-size:22.5px;line-height:29px;letter-spacing:0.16px;left:1628px;color:#000;">w50:</div>
<div class="t sans" style="top:297.6px;font-size:22.5px;line-height:29px;letter-spacing:0.07px;left:1727px;color:#000;">55.4</div>
<div class="t sans" style="top:297.6px;font-size:22.5px;line-height:29px;letter-spacing:0.07px;left:1800.75px;color:#000;">63.3</div>
<div class="t sans" style="top:351.6px;font-size:22.5px;line-height:29px;letter-spacing:-0.76px;left:1712.5px;color:#000;">RA</div>
<div class="t sans" style="top:351.6px;font-size:22.5px;line-height:29px;letter-spacing:0.25px;left:1786px;color:#000;">DEC</div>
<div class="t sans" style="top:378.6px;font-size:22.5px;line-height:29px;letter-spacing:-0.13px;left:1628px;color:#000;">Moon:</div>
<div class="t sans" style="top:378.6px;font-size:22.5px;line-height:29px;letter-spacing:0.3px;left:1728.75px;color:#000;">06:13</div>
<div class="t sans" style="top:378.6px;font-size:22.5px;line-height:29px;letter-spacing:-0.58px;left:1810px;color:#000;">18.01</div>
<div class="t sans" style="top:405.6px;font-size:22.5px;line-height:29px;letter-spacing:0.41px;left:1628px;color:#000;">Source:</div>
<div class="t sans" style="top:405.6px;font-size:22.5px;line-height:29px;letter-spacing:0.17px;left:1732px;color:#000;">00:00</div>
<div class="t sans" style="top:405.6px;font-size:22.5px;line-height:29px;letter-spacing:0.24px;left:1818.75px;color:#000;">0.00</div>
<div style="left:835px;top:429px;width:768px;height:596px;background:#9aa0b5;box-shadow:inset 2px 2px 0 #d3d6e3,inset -2px -2px 0 #727889;"></div>
<div style="left:839px;top:433px;width:760px;height:588px;background:#d4d0c8;box-shadow:inset 1px 1px 0 #727889,inset -1px -1px 0 #d3d6e3;"></div>
<div style="left:835px;top:453px;width:5px;height:1px;background:#727889;"></div>
<div style="left:835px;top:454px;width:5px;height:1px;background:#d3d6e3;"></div>
<div style="left:1598px;top:453px;width:5px;height:1px;background:#727889;"></div>
<div style="left:1598px;top:454px;width:5px;height:1px;background:#d3d6e3;"></div>
<div style="left:835px;top:1000px;width:5px;height:1px;background:#727889;"></div>
<div style="left:835px;top:1001px;width:5px;height:1px;background:#d3d6e3;"></div>
<div style="left:1598px;top:1000px;width:5px;height:1px;background:#727889;"></div>
<div style="left:1598px;top:1001px;width:5px;height:1px;background:#d3d6e3;"></div>
<div style="left:859px;top:1020px;width:1px;height:5px;background:#727889;"></div>
<div style="left:860px;top:1020px;width:1px;height:5px;background:#d3d6e3;"></div>
<div style="left:1578px;top:1020px;width:1px;height:5px;background:#727889;"></div>
<div style="left:1579px;top:1020px;width:1px;height:5px;background:#d3d6e3;"></div>
<div style="left:840px;top:434px;width:758px;height:20px;background:#9ba1b6;"></div>
<div style="left:840px;top:434px;width:20px;height:20px;background:#9ba1b6;box-shadow:inset 1px 1px 0 #d3d6e3,inset -1px -1px 0 #727889;"></div>
<div style="left:843px;top:441px;width:12px;height:5px;background:#9ba1b6;box-shadow:inset 1px 1px 0 #d3d6e3,inset -1px -1px 0 #727889;"></div>
<div style="left:1578px;top:434px;width:20px;height:20px;background:#9ba1b6;box-shadow:inset 1px 1px 0 #d3d6e3,inset -1px -1px 0 #727889;"></div>
<div style="left:1582px;top:438px;width:11px;height:11px;background:#9ba1b6;box-shadow:inset 1px 1px 0 #d3d6e3,inset -1px -1px 0 #727889;"></div>
<div style="left:1558px;top:434px;width:20px;height:20px;background:#9ba1b6;box-shadow:inset 1px 1px 0 #d3d6e3,inset -1px -1px 0 #727889;"></div>
<div style="left:1565px;top:441px;width:5px;height:5px;background:#9ba1b6;box-shadow:inset 1px 1px 0 #d3d6e3,inset -1px -1px 0 #727889;"></div>
<div style="left:860px;top:434px;width:698px;height:20px;background:#9ba1b6;box-shadow:inset 1px 1px 0 #d3d6e3,inset -1px -1px 0 #727889;"></div>
<div class="t dvb" style="top:436px;font-size:13px;line-height:17px;letter-spacing:0.03px;left:1104.75px;color:#000000;white-space:pre;">WSJT 10.0    r5422      by K1JT</div>
<div style="left:866px;top:455px;width:707px;height:551px;background:#d9d9d9;"></div>
<div class="t sans" style="top:459px;font-size:12px;line-height:16px;letter-spacing:0.22px;left:872.7px;">File</div>
<div class="t sans" style="top:459px;font-size:12px;line-height:16px;letter-spacing:0.03px;left:906px;">Setup</div>
<div class="t sans" style="top:459px;font-size:12px;line-height:16px;letter-spacing:0.07px;left:952px;">View</div>
<div class="t sans" style="top:459px;font-size:12px;line-height:16px;letter-spacing:-0.17px;left:992.5px;">Mode</div>
<div class="t sans" style="top:459px;font-size:12px;line-height:16px;letter-spacing:0.33px;left:1036px;">Decode</div>
<div class="t sans" style="top:459px;font-size:12px;line-height:16px;letter-spacing:-0.28px;left:1093.5px;">Save</div>
<div class="t sans" style="top:459px;font-size:12px;line-height:16px;letter-spacing:0.16px;left:1134px;">Band</div>
<div class="t sans" style="top:459px;font-size:12px;line-height:16px;letter-spacing:0.44px;left:1177px;">Help</div>
<div style="left:869.5px;top:479.5px;width:699.5px;height:124.5px;background:#d9d9d9;box-shadow:inset 1px 1px 0 #828282,inset -1px -1px 0 #fff,inset 2px 2px 0 #fff;"></div>
<svg style="left:871.5px;top:482px" width="500.5" height="120" viewBox="871.5 482 500.5 120"><rect x="871.5" y="482" width="500.5" height="120" fill="#000"/><path d="M911 482 v6.5 M952.85 482 v11.5 M994.7 482 v6.5 M1036.55 482 v6.5 M1078.4 482 v6.5 M1120.25 482 v6.5 M1162.1 482 v11.5 M1203.95 482 v6.5 M1245.8 482 v6.5 M1287.65 482 v6.5 M1329.5 482 v6.5 M1371.35 482 v11.5" stroke="#00ffff" stroke-width="1.2" fill="none"/><path d="M911 602 v-6.5 M952.85 602 v-11.5 M994.7 602 v-6.5 M1036.55 602 v-6.5 M1078.4 602 v-6.5 M1120.25 602 v-6.5 M1162.1 602 v-11.5 M1203.95 602 v-6.5 M1245.8 602 v-6.5 M1287.65 602 v-6.5 M1329.5 602 v-6.5 M1371.35 602 v-11.5" stroke="#ff0000" stroke-width="1.2" fill="none"/><polyline points="917,580.3 918.5,580.3 920,580.3 921.5,580.3 923,580.3 924.5,580.3 926,580.3 927.5,580.3 929,580.3 930.5,580.3 932,580.3 933.5,580.3 935,580.3 936.5,580.3 938,580.3 939.5,580.3 941,580.3 942.5,580.3 944,580.3 945.5,580.3 947,580.3 948.5,580.3 950,580.3 951.5,580.3 953,580.3 954.5,580.3 956,580.3 957.5,580.3 959,580.3 960.5,580.3 962,580.3 963.5,580.3 965,580.3 966.5,580.3 968,579.6 969.5,579.6 971,579.6 972.5,579.6 974,579.6 975.5,579.6 977,579.6 978.5,579.6 980,579.6 981.5,579.6 983,579.6 984.5,579.6 986,579.6 987.5,579.6 989,579.6 990.5,579.6 992,579.6 993.5,579.6 995,579.6 996.5,579.6 998,579.6 999.5,579.6 1001,579.6 1002.5,579.6 1004,579.6 1005.5,579.6 1007,579.6 1008.5,579.6 1010,579.6 1011.5,579.6 1013,579.6 1014.5,579.6 1016,579.6 1017.5,579.6 1019,579.6 1020.5,579.59 1022,579.59 1023.5,579.59 1025,579.58 1026.5,579.57 1028,579.55 1029.5,579.52 1031,579.48 1032.5,579.42 1034,579.34 1035.5,579.22 1037,579.06 1038.5,578.85 1040,578.55 1041.5,578.16 1043,577.64 1044.5,576.97 1046,576.12 1047.5,575.05 1049,573.72 1050.5,572.1 1052,570.14 1053.5,567.82 1055,565.11 1056.5,562 1058,558.48 1059.5,554.56 1061,550.29 1062.5,545.71 1064,540.89 1065.5,535.93 1067,530.94 1068.5,526.04 1070,521.37 1071.5,517.08 1073,513.29 1074.5,510.13 1076,507.72 1077.5,506.13 1079,505.43 1080.5,505.65 1082,506.76 1083.5,508.74 1085,511.52 1086.5,514.98 1088,519.03 1089.5,523.51 1091,528.3 1092.5,533.26 1094,538.25 1095.5,543.16 1097,547.88 1098.5,552.33 1100,556.44 1101.5,560.17 1103,563.5 1104.5,566.42 1106,568.95 1107.5,571.1 1109,572.89 1110.5,574.38 1112,575.58 1113.5,576.55 1115,577.31 1116.5,577.9 1118,578.36 1119.5,578.7 1121,578.96 1122.5,579.15 1124,579.28 1125.5,579.38 1127,579.45 1128.5,579.5 1130,579.53 1131.5,579.56 1133,579.57 1134.5,579.58 1136,579.59 1137.5,579.59 1139,579.6 1140.5,579.6 1142,579.6 1143.5,579.6 1145,579.6 1146.5,579.59 1148,579.59 1149.5,579.59 1151,579.58 1152.5,579.57 1154,579.56 1155.5,579.53 1157,579.5 1158.5,579.46 1160,579.4 1161.5,579.31 1163,579.19 1164.5,579.02 1166,578.8 1167.5,578.5 1169,578.12 1170.5,577.61 1172,576.96 1173.5,576.14 1175,575.11 1176.5,573.83 1178,572.28 1179.5,570.39 1181,568.15 1182.5,565.52 1184,562.46 1185.5,558.96 1187,555 1188.5,550.61 1190,545.79 1191.5,540.59 1193,535.07 1194.5,529.31 1196,523.41 1197.5,517.48 1199,511.67 1200.5,506.09 1202,500.91 1203.5,496.26 1205,492.27 1206.5,489.07 1208,486.75 1209.5,485.38 1211,485.01 1212.5,485.65 1214,487.28 1215.5,489.84 1217,493.26 1218.5,497.44 1220,502.25 1221.5,507.55 1223,513.2 1224.5,519.06 1226,524.99 1227.5,530.86 1229,536.57 1230.5,542.01 1232,547.11 1233.5,551.82 1235,556.1 1236.5,559.93 1238,563.32 1239.5,566.26 1241,568.79 1242.5,570.93 1244,572.72 1245.5,574.2 1247,575.41 1248.5,576.38 1250,577.15 1251.5,577.76 1253,578.23 1254.5,578.59 1256,578.87 1257.5,579.07 1259,579.22 1260.5,579.33 1262,579.41 1263.5,579.47 1265,579.51 1266.5,579.54 1268,579.56 1269.5,579.57 1271,579.58 1272.5,579.59 1274,579.59 1275.5,579.6 1277,579.6 1278.5,579.6 1280,579.6 1281.5,579.6 1283,579.6 1284.5,579.6 1286,579.6 1287.5,579.6 1289,579.6 1290.5,579.6 1292,579.6 1293.5,579.6 1295,579.6 1296.5,579.6 1298,579.6 1299.5,579.6 1301,579.6 1302.5,579.6 1304,579.6 1305.5,579.6 1307,579.6 1308.5,579.6 1310,579.6 1311.5,577.42 1313,575.25 1314.5,573.07 1316,570.9 1317.5,568.72 1319,566.55 1320.5,564.37 1322,562.2" stroke="#ff0000" stroke-width="1.1" fill="none"/><polyline points="887,542.21 889,542.73 891,542.28 893,542.28 895,541.76 897,540.14 899,539.23 901,539.65 903,537.83 905,536.95 907,537.44 909,536.03 911,536.26 913,535.54 915,535.89 917,535.41 919,536.69 921,537.71 923,537.91 925,539.06 927,539.73 929,539.47 931,541.17 933,541.34 935,541.14 937,540.77 939,542 941,541.1 943,541.11 945,540.91 947,540.17 949,540.06 951,538.86 953,539.28 955,538.65 957,539.56 959,539.77 961,538.99 963,539.67 965,540.51 967,542.47 969,542.38 971,543.37 973,543.41 975,544.13 977,544.13 979,544.04 981,544.16 983,543.68 985,543.54 987,542.38 989,541.88 991,540.85 993,540.17 995,538.85 997,537.37 999,537.99 1001,537.87 1003,537.68 1005,537.26 1007,537.78 1009,537.4 1011,538.91 1013,539.05 1015,539.13 1017,539.23 1019,540.85 1021,541.26 1023,539.84 1025,540.84 1027,539.9 1029,539.04 1031,538.72 1033,538.89 1035,538.47 1037,536.62 1039,537.13 1041,535.97 1043,536.99 1045,536.53 1047,537.77 1049,538.5 1051,538.47 1053,540.11 1055,539.93 1057,540.47 1059,542.08 1061,541.62 1063,541.6 1065,540.26 1067,536.56 1069,528.59 1071,517.76 1073,506.32 1075,493.45 1077,486.87 1079,486.06 1081,491.47 1083,502.39 1085,514.32 1087,524.57 1089,531.53 1091,535.69 1093,538.05 1095,539.78 1097,539.83 1099,540.29 1101,541.27 1103,540.94 1105,541.38 1107,542.66 1109,541.95 1111,541.83 1113,540.61 1115,540.72 1117,540.3 1119,538.62 1121,538.73 1123,537.93 1125,536.25 1127,536.51 1129,535.78 1131,535.85 1133,535.28 1135,536.03 1137,536.48 1139,535.93 1141,536.73 1143,538.55 1145,539.88 1147,539.59 1149,540.68 1151,541.54 1153,541.58 1155,541.93 1157,541.93 1159,541.92 1161,542.02 1163,541.15 1165,540.8 1167,540.93 1169,539.26 1171,539.74 1173,539.73 1175,538.94 1177,538.86 1179,540.03 1181,539.53 1183,539.99 1185,541.01 1187,542.11 1189,541.82 1191,542.77" stroke="#30e0e8" stroke-width="1.1" fill="none"/><polyline points="871.5,570.46 873.1,573.83 874.7,569.33 876.3,572.66 877.9,572.27 879.5,572.73 881.1,570.11 882.7,569.51 884.3,570.82 885.9,571.98 887.5,572.86 889.1,572.8 890.7,572.56 892.3,573.9 893.9,572.14 895.5,571 897.1,571.28 898.7,574.02 900.3,570.22 901.9,569.87 903.5,566.91 905.1,567.87 906.7,567.14 908.3,568.49 909.9,564.83 911.5,564.52 913.1,570.09 914.7,564.68 916.3,568.13 917.9,566.89 919.5,566.48 921.1,565.96 922.7,567.37 924.3,567.78 925.9,567.45 927.5,566.93 929.1,569.76 930.7,566.03 932.3,569.44 933.9,567.48 935.5,566.47 937.1,565.95 938.7,566.4 940.3,566.53 941.9,565.05 943.5,567.62 945.1,564.96 946.7,566.78 948.3,569.38 949.9,562.62 951.5,567.57 953.1,566.98 954.7,565.96 956.3,567.07 957.9,567.74 959.5,567.3 961.1,570.5 962.7,568.77 964.3,566.17 965.9,567.28 967.5,566.26 969.1,565.92 970.7,566.98 972.3,567.89 973.9,566.91 975.5,567.66 977.1,565.5 978.7,565.91 980.3,566.31 981.9,566.34 983.5,566.9 985.1,566 986.7,567.35 988.3,568.91 989.9,566.08 991.5,567.92 993.1,565.35 994.7,569.27 996.3,566.65 997.9,567.45 999.5,569.05 1001.1,565.8 1002.7,566.74 1004.3,564.7 1005.9,567.36 1007.5,566.91 1009.1,563.79 1010.7,566.74 1012.3,568.38 1013.9,565.68 1015.5,561.34 1017.1,566.19 1018.7,567.17 1020.3,566.7 1021.9,568.37 1023.5,567.73 1025.1,567.34 1026.7,568.12 1028.3,567.33 1029.9,566 1031.5,566.5 1033.1,568.39 1034.7,568.62 1036.3,567.07 1037.9,566.51 1039.5,565.27 1041.1,565.44 1042.7,567.49 1044.3,569.08 1045.9,568.52 1047.5,565.36 1049.1,568.03 1050.7,567.84 1052.3,568.94 1053.9,566.14 1055.5,564.3 1057.1,565.12 1058.7,568.62 1060.3,567.36 1061.9,567.58 1063.5,567.88 1065.1,568.39 1066.7,569.78 1068.3,570.44 1069.9,564.88 1071.5,567.79 1073.1,565.24 1074.7,567.54 1076.3,566.96 1077.9,564.02 1079.5,567.5 1081.1,569.36 1082.7,567.89 1084.3,566.53 1085.9,568.08 1087.5,569.17 1089.1,567.22 1090.7,569.9 1092.3,567.23 1093.9,566.75 1095.5,566.98 1097.1,568.48 1098.7,568.47 1100.3,567.35 1101.9,567.73 1103.5,568.97 1105.1,566.67 1106.7,567.12 1108.3,569.36 1109.9,569.06 1111.5,568.47 1113.1,566.85 1114.7,566.75 1116.3,569.17 1117.9,567.09 1119.5,569.47 1121.1,566.68 1122.7,567.16 1124.3,566.91 1125.9,565.38 1127.5,566.18 1129.1,565.85 1130.7,566.93 1132.3,566.75 1133.9,566.28 1135.5,569.11 1137.1,566.44 1138.7,566.15 1140.3,569.17 1141.9,568.16 1143.5,567.22 1145.1,566.08 1146.7,567.57 1148.3,567.03 1149.9,567.44 1151.5,566.09 1153.1,565.14 1154.7,566.72 1156.3,568.09 1157.9,567.97 1159.5,567.68 1161.1,565.24 1162.7,565.44 1164.3,568.37 1165.9,566.69 1167.5,566.9 1169.1,565.64 1170.7,567.01 1172.3,567.36 1173.9,566.99 1175.5,568.51 1177.1,566.9 1178.7,564.92 1180.3,564.64 1181.9,568.25 1183.5,566.15 1185.1,569.53 1186.7,567.33 1188.3,565.87 1189.9,567.09 1191.5,568.79 1193.1,567.65 1194.7,564.29 1196.3,565.98 1197.9,564.88 1199.5,565.55 1201.1,568.73 1202.7,568.06 1204.3,568.68 1205.9,565.84 1207.5,564.91 1209.1,565.53 1210.7,565.99 1212.3,569.26 1213.9,565.28 1215.5,568.14 1217.1,567.8 1218.7,567.44 1220.3,565.29 1221.9,567.34 1223.5,566.64 1225.1,566.41 1226.7,566.63 1228.3,567.78 1229.9,566.46 1231.5,568.23 1233.1,567.32 1234.7,567.39 1236.3,568.2 1237.9,568.43 1239.5,567.93 1241.1,566.19 1242.7,565.99 1244.3,568.61 1245.9,562.6 1247.5,568.41 1249.1,570.63 1250.7,567.86 1252.3,566.53 1253.9,567.42 1255.5,567.6 1257.1,567.6 1258.7,567.64 1260.3,565.89 1261.9,567.3 1263.5,568.32 1265.1,566.98 1266.7,567.78 1268.3,564.98 1269.9,567.24 1271.5,567.72 1273.1,567.4 1274.7,568.37 1276.3,570.64 1277.9,567.22 1279.5,565.77 1281.1,567.83 1282.7,567.12 1284.3,568.27 1285.9,568.15 1287.5,568.03 1289.1,566.95 1290.7,568.15 1292.3,565.88 1293.9,566.49 1295.5,567.78 1297.1,567.2 1298.7,568.09 1300.3,566.99 1301.9,566.05 1303.5,567.23 1305.1,567.03 1306.7,567.04 1308.3,566.77 1309.9,565.63 1311.5,565.22 1313.1,568.98 1314.7,566.03 1316.3,568.48 1317.9,567.87 1319.5,566.73 1321.1,567.04 1322.7,567.32 1324.3,567.71 1325.9,567.13 1327.5,567.2 1329.1,567.61 1330.7,568.94 1332.3,565.48 1333.9,565.9 1335.5,567.53 1337.1,567.77 1338.7,570.65 1340.3,567.81 1341.9,568.55 1343.5,568.05 1345.1,565.91 1346.7,566.06 1348.3,566.3 1349.9,568.76 1351.5,568.19 1353.1,565.8 1354.7,565.89 1356.3,566.95 1357.9,566.45" stroke="#00ff00" stroke-width="1.1" fill="none"/><polyline points="917,568.2 918.25,568.2 919.5,568.2 920.75,568.2 922,568.2 923.25,568.2 924.5,568.2 925.75,568.2 927,568.2 928.25,568.2 929.5,568.2 930.75,568.2 932,568.2 933.25,568.2 934.5,568.2 935.75,568.2 937,568.2 938.25,568.2 939.5,568.2 940.75,568.2 942,568.2 943.25,568.2 944.5,568.2 945.75,568.2 947,568.2 948.25,568.2 949.5,568.2 950.75,568.2 952,568.2 953.25,568.2 954.5,568.2 955.75,568.2 957,568.2 958.25,568.2 959.5,568.2 960.75,568.2 962,568.2 963.25,568.2 964.5,568.2 965.75,568.2 967,568.2 968.25,568.2 969.5,568.2 970.75,568.2 972,568.2 973.25,568.2 974.5,568.2 975.75,568.2 977,568.2 978.25,568.2 979.5,568.2 980.75,568.2 982,568.2 983.25,568.2 984.5,568.2 985.75,568.2 987,568.2 988.25,568.2 989.5,568.2 990.75,568.2 992,568.2 993.25,568.2 994.5,568.2 995.75,568.2 997,568.2 998.25,568.2 999.5,568.2 1000.75,568.2 1002,568.2 1003.25,568.2 1004.5,568.2 1005.75,568.2 1007,568.2 1008.25,568.2 1009.5,568.2 1010.75,568.2 1012,568.2 1013.25,568.2 1014.5,568.2 1015.75,568.2 1017,568.2 1018.25,568.2 1019.5,568.2 1020.75,568.2 1022,568.2 1023.25,568.2 1024.5,568.2 1025.75,568.2 1027,568.2 1028.25,568.2 1029.5,568.2 1030.75,568.2 1032,568.2 1033.25,568.2 1034.5,568.2 1035.75,568.2 1037,568.2 1038.25,568.2 1039.5,568.2 1040.75,568.2 1042,568.19 1043.25,568.19 1044.5,568.17 1045.75,568.12 1047,568.02 1048.25,567.82 1049.5,567.42 1050.75,566.71 1052,565.48 1053.25,563.46 1054.5,560.37 1055.75,555.88 1057,549.75 1058.25,541.92 1059.5,532.58 1060.75,522.28 1062,511.87 1063.25,502.46 1064.5,495.21 1065.75,491.09 1067,490.71 1068.25,494.11 1069.5,500.8 1070.75,509.87 1072,520.17 1073.25,530.57 1074.5,540.16 1075.75,548.32 1077,554.79 1078.25,559.59 1079.5,562.94 1080.75,565.15 1082,566.51 1083.25,567.31 1084.5,567.76 1085.75,569.19 1087,569.3 1088.25,569.36 1089.5,569.38 1090.75,569.39 1092,569.4 1093.25,569.4 1094.5,569.4 1095.75,569.4 1097,569.4 1098.25,569.4 1099.5,569.4 1100.75,569.4 1102,569.4 1103.25,569.4 1104.5,569.4 1105.75,569.4 1107,569.4 1108.25,569.39 1109.5,569.37 1110.75,569.34 1112,569.26 1113.25,569.09 1114.5,568.77 1115.75,568.17 1117,567.1 1118.25,565.32 1119.5,562.51 1120.75,558.34 1122,552.51 1123.25,544.85 1124.5,535.47 1125.75,524.77 1127,513.55 1128.25,502.91 1129.5,494.09 1130.75,488.25 1132,486.2 1133.25,488.25 1134.5,494.09 1135.75,502.91 1137,513.55 1138.25,524.77 1139.5,535.47 1140.75,544.85 1142,552.51 1143.25,558.34 1144.5,562.51 1145.75,565.32 1147,567.1 1148.25,568.17 1149.5,568.77 1150.75,569.09 1152,569.26 1153.25,569.34 1154.5,569.37 1155.75,569.39 1157,569.4 1158.25,569.4 1159.5,569.4 1160.75,569.4 1162,569.4 1163.25,569.4 1164.5,569.4 1165.75,569.4 1167,569.4 1168.25,569.4 1169.5,569.4 1170.75,569.4 1172,569.4 1173.25,569.4 1174.5,569.39 1175.75,569.37 1177,569.33 1178.25,569.25 1179.5,569.08 1180.75,568.76 1182,568.17 1183.25,567.15 1184.5,565.5 1185.75,562.96 1187,559.28 1188.25,554.28 1189.5,547.9 1190.75,540.33 1192,531.99 1193.25,523.6 1194.5,516.06 1195.75,510.29 1197,507.09 1198.25,506.9 1199.5,509.76 1200.75,515.26 1202,522.63 1203.25,530.97 1204.5,539.35 1205.75,547.05 1207,553.58 1208.25,558.75 1209.5,562.58 1210.75,565.24 1212,566.99 1213.25,568.07 1214.5,568.7 1215.75,569.05 1217,569.23 1218.25,569.33 1219.5,569.37 1220.75,569.39 1222,569.39 1223.25,569.4 1224.5,569.4 1225.75,569.4 1227,569.4 1228.25,569.4 1229.5,569.4 1230.75,569.4 1232,569.4 1233.25,569.4 1234.5,569.4 1235.75,569.4 1237,569.4 1238.25,569.4 1239.5,569.39 1240.75,569.38 1242,569.36 1243.25,569.3 1244.5,569.19 1245.75,568.97 1247,568.54 1248.25,567.79 1249.5,566.51 1250.75,564.48 1252,561.42 1253.25,557.1 1254.5,551.34 1255.75,544.18 1257,535.9 1258.25,527.06 1259.5,518.49 1260.75,511.16 1262,506.02 1263.25,503.77 1264.5,504.74 1265.75,508.79 1267,515.36 1268.25,523.55 1269.5,532.39 1270.75,540.98 1272,548.64 1273.25,554.97 1274.5,559.86 1275.75,563.4 1277,565.81 1278.25,567.35 1279.5,568.29 1280.75,568.83 1282,569.12 1283.25,569.27 1284.5,569.34 1285.75,569.38 1287,569.39 1288.25,569.4 1289.5,569.4 1290.75,569.4 1292,569.4 1293.25,569.4 1294.5,569.4 1295.75,569.4 1297,569.4 1298.25,569.4 1299.5,569.4 1300.75,569.4 1302,569.4 1303.25,569.4 1304.5,569.4 1305.75,569.4 1307,569.4 1308.25,569.4 1309.5,569.4 1310.75,569.4 1312,569.4 1313.25,569.4 1314.5,569.4 1315.75,569.4 1317,569.4 1318.25,569.4 1319.5,569.4 1320.75,569.4 1322,569.4" stroke="#ffff00" stroke-width="1.1" fill="none"/></svg>
<div style="left:1376px;top:482px;width:150px;height:120px;background:#70ffff;"></div>
<div class="t sans" style="top:479px;font-size:22.5px;line-height:29px;letter-spacing:0.24px;left:1425.5px;">Moon</div>
<div class="t sans" style="top:503px;font-size:22.5px;line-height:29px;letter-spacing:-0.75px;left:1387.5px;">Az:</div>
<div class="t sans" style="top:503px;font-size:22.5px;line-height:29px;letter-spacing:0.12px;left:1430.2px;">136.86</div>
<div class="t sans" style="top:527px;font-size:22.5px;line-height:29px;letter-spacing:-0.13px;left:1387.5px;">El:</div>
<div class="t sans" style="top:527px;font-size:22.5px;line-height:29px;letter-spacing:0.42px;left:1430.2px;">61.06</div>
<div class="t sans" style="top:551px;font-size:22.5px;line-height:29px;letter-spacing:0.16px;left:1387.5px;">Dop:</div>
<div class="t sans" style="top:551px;font-size:22.5px;line-height:29px;letter-spacing:-0.19px;left:1454px;">1229</div>
<div class="t sans" style="top:575px;font-size:22.5px;line-height:29px;letter-spacing:0.99px;left:1387.5px;">Dgrd:</div>
<div class="t sans" style="top:575px;font-size:22.5px;line-height:29px;letter-spacing:0.74px;left:1453px;">-1.0</div>
<div style="left:892px;top:605px;width:30px;height:15px;background:#00ff00;"></div>
<div class="t sans" style="top:604.5px;font-size:12px;line-height:16px;letter-spacing:-0.12px;left:895.5px;">46.6</div>
<div style="left:1090.8px;top:605px;width:52.2px;height:15px;background:#00ff00;"></div>
<div class="t sans" style="top:604.5px;font-size:12px;line-height:16px;letter-spacing:0.06px;left:1095px;">Time (s)</div>
<div class="t sans" style="top:604.5px;font-size:12px;line-height:16px;letter-spacing:0.16px;left:1190.4px;">Mon_151128_002000.WAV</div>
<div class="t sans" style="top:620px;font-size:12px;line-height:16px;letter-spacing:0.13px;left:875.8px;">FileID</div>
<div class="t sans" style="top:620px;font-size:12px;line-height:16px;letter-spacing:-0.39px;left:926px;">Sync</div>
<div class="t sans" style="top:620px;font-size:12px;line-height:16px;letter-spacing:-0.18px;left:970.6px;">dB</div>
<div class="t sans" style="top:620px;font-size:12px;line-height:16px;left:1009.6px;">DT</div>
<div class="t sans" style="top:620px;font-size:12px;line-height:16px;letter-spacing:-0.5px;left:1046.7px;">DF</div>
<div class="t sans" style="top:620px;font-size:12px;line-height:16px;left:1073.75px;">W</div>
<div style="left:869.5px;top:635px;width:698.5px;height:117.5px;background:#d9d9d9;box-shadow:inset 1px 1px 0 #828282,inset -1px -1px 0 #fff,inset 2px 2px 0 #404040;"></div>
<div style="left:871.5px;top:637px;width:642.5px;height:114.5px;background:#fff;"></div>
<div class="t mono" style="top:637.3px;font-size:13.33px;line-height:17px;left:873.75px;color:#000;">001800</div>
<div class="t mono" style="top:637.3px;font-size:13.33px;line-height:17px;left:929.75px;color:#000;">10</div>
<div class="t mono" style="top:637.3px;font-size:13.33px;line-height:17px;left:961.75px;color:#000;">-10</div>
<div class="t mono" style="top:637.3px;font-size:13.33px;line-height:17px;left:1001.75px;color:#000;">3.0</div>
<div class="t mono" style="top:637.3px;font-size:13.33px;line-height:17px;left:1041.75px;color:#000;">212</div>
<div class="t mono" style="top:637.3px;font-size:13.33px;line-height:17px;left:1081.75px;color:#000;">59</div>
<div class="t mono" style="top:637.3px;font-size:13.33px;line-height:17px;left:1105.75px;color:#000;">*</div>
<div class="t mono" style="top:637.3px;font-size:13.33px;line-height:17px;left:1161.75px;color:#000;">DL0SHF</div>
<div class="t mono" style="top:637.3px;font-size:13.33px;line-height:17px;left:1225.75px;color:#000;">18VAH</div>
<div class="t mono" style="top:637.3px;font-size:13.33px;line-height:17px;left:1361.75px;color:#000;">1</div>
<div class="t mono" style="top:637.3px;font-size:13.33px;line-height:17px;left:1401.75px;color:#000;">0</div>
<div class="t mono" style="top:637.3px;font-size:13.33px;line-height:17px;left:1417.75px;color:#000;">A</div>
<div class="t mono" style="top:653.5px;font-size:13.33px;line-height:17px;left:873.75px;color:#000;">001900</div>
<div class="t mono" style="top:653.5px;font-size:13.33px;line-height:17px;left:937.75px;color:#000;">0</div>
<div class="t mono" style="top:653.5px;font-size:13.33px;line-height:17px;left:961.75px;color:#000;">-19</div>
<div class="t mono" style="top:653.5px;font-size:13.33px;line-height:17px;left:1001.75px;color:#000;">1.5</div>
<div class="t mono" style="top:653.5px;font-size:13.33px;line-height:17px;left:1041.75px;color:#000;">-96</div>
<div class="t mono" style="top:653.5px;font-size:13.33px;line-height:17px;left:1081.75px;color:#000;">24</div>
<div class="t mono" style="top:653.5px;font-size:13.33px;line-height:17px;left:1105.75px;color:#000;">*</div>
<div class="t mono" style="top:669.7px;font-size:13.33px;line-height:17px;left:873.75px;color:#000;">002000</div>
<div class="t mono" style="top:669.7px;font-size:13.33px;line-height:17px;left:937.75px;color:#000;">8</div>
<div class="t mono" style="top:669.7px;font-size:13.33px;line-height:17px;left:961.75px;color:#000;">-11</div>
<div class="t mono" style="top:669.7px;font-size:13.33px;line-height:17px;left:1001.75px;color:#000;">3.0</div>
<div class="t mono" style="top:669.7px;font-size:13.33px;line-height:17px;left:1041.75px;color:#000;">217</div>
<div class="t mono" style="top:669.7px;font-size:13.33px;line-height:17px;left:1081.75px;color:#000;">59</div>
<div class="t mono" style="top:669.7px;font-size:13.33px;line-height:17px;left:1105.75px;color:#000;">*</div>
<div class="t mono" style="top:669.7px;font-size:13.33px;line-height:17px;left:1161.75px;color:#000;">DL0SHF</div>
<div class="t mono" style="top:669.7px;font-size:13.33px;line-height:17px;left:1225.75px;color:#000;">20GUK</div>
<div class="t mono" style="top:669.7px;font-size:13.33px;line-height:17px;left:1361.75px;color:#000;">1</div>
<div class="t mono" style="top:669.7px;font-size:13.33px;line-height:17px;left:1401.75px;color:#000;">0</div>
<div class="t mono" style="top:669.7px;font-size:13.33px;line-height:17px;left:1417.75px;color:#000;">A</div>
<div style="left:1551px;top:637px;width:16.5px;height:114.5px;background:#d9d9d9;background-image:repeating-conic-gradient(#c3c3c3 0% 25%,#ededed 0% 50%);background-size:2px 2px;"></div>
<div style="left:1551px;top:637px;width:16.5px;height:15px;background:#d9d9d9;box-shadow:inset 1px 1px 0 #fff,inset -1px -1px 0 #404040,inset -2px -2px 0 #828282;"></div>
<svg style="left:1555px;top:642px" width="8" height="5"><path d="M0 5L4 0L8 5z" fill="#909090"/></svg>
<div style="left:1551px;top:736.5px;width:16.5px;height:15px;background:#d9d9d9;box-shadow:inset 1px 1px 0 #fff,inset -1px -1px 0 #404040,inset -2px -2px 0 #828282;"></div>
<svg style="left:1555px;top:741.5px" width="8" height="5"><path d="M0 0L4 5L8 0z" fill="#909090"/></svg>
<div style="left:869.5px;top:753.5px;width:698.5px;height:37px;background:#d9d9d9;box-shadow:inset 1px 1px 0 #828282,inset -1px -1px 0 #fff,inset 2px 2px 0 #404040;"></div>
<div style="left:871.5px;top:755.5px;width:642.5px;height:34px;background:#fff;"></div>
<div class="t mono" style="top:755.7px;font-size:13.33px;line-height:17px;left:873.75px;color:#000;">195800</div>
<div class="t mono" style="top:755.7px;font-size:13.33px;line-height:17px;left:937.75px;color:#000;">1</div>
<div class="t mono" style="top:755.7px;font-size:13.33px;line-height:17px;left:961.75px;color:#000;">50/50</div>
<div class="t mono" style="top:771.7px;font-size:13.33px;line-height:17px;left:873.75px;color:#000;">195800</div>
<div class="t mono" style="top:771.7px;font-size:13.33px;line-height:17px;left:937.75px;color:#000;">2</div>
<div class="t mono" style="top:771.7px;font-size:13.33px;line-height:17px;left:961.75px;color:#000;">49/49</div>
<div style="left:869.6px;top:792px;width:85.8px;height:25.5px;background:#d9d9d9;box-shadow:inset 1.5px 1.5px 0 #fff,inset -1px -1px 0 #000,inset -2px -2px 0 #828282;"></div>
<div class="t sans" style="top:796.5px;font-size:12px;line-height:16px;left:887.5px;">Log <u>Q</u>SO</div>
<div style="left:955.4px;top:792px;width:62.1px;height:25.5px;background:#d9d9d9;box-shadow:inset 1.5px 1.5px 0 #fff,inset -1px -1px 0 #000,inset -2px -2px 0 #828282;"></div>
<div class="t sans" style="top:796.5px;font-size:12px;line-height:16px;letter-spacing:0.1px;left:973.95px;"><u>S</u>top</div>
<div style="left:1017.5px;top:792px;width:77.1px;height:25.5px;background:#00ff00;box-shadow:inset 1.5px 1.5px 0 #fff,inset -1px -1px 0 #000,inset -2px -2px 0 #828282;"></div>
<div class="t sans" style="top:796.5px;font-size:12px;line-height:16px;left:1036.05px;"><u>M</u>onitor</div>
<div style="left:1094.6px;top:792px;width:79.4px;height:25.5px;background:#d9d9d9;box-shadow:inset 1.5px 1.5px 0 #fff,inset -1px -1px 0 #000,inset -2px -2px 0 #828282;"></div>
<div class="t sans" style="top:796.5px;font-size:12px;line-height:16px;letter-spacing:0.23px;left:1113.05px;"><u>D</u>ecode</div>
<div style="left:1174px;top:792px;width:70px;height:25.5px;background:#d9d9d9;box-shadow:inset 1.5px 1.5px 0 #fff,inset -1px -1px 0 #000,inset -2px -2px 0 #828282;"></div>
<div class="t sans" style="top:796.5px;font-size:12px;line-height:16px;letter-spacing:0.16px;left:1193px;"><u>E</u>rase</div>
<div style="left:1244px;top:792px;width:89px;height:25.5px;background:#d9d9d9;box-shadow:inset 1.5px 1.5px 0 #fff,inset -1px -1px 0 #000,inset -2px -2px 0 #828282;"></div>
<div class="t sans" style="top:796.5px;font-size:12px;line-height:16px;letter-spacing:-0.04px;left:1262.75px;"><u>C</u>lear Avg</div>
<div style="left:1333px;top:792px;width:77.4px;height:25.5px;background:#d9d9d9;box-shadow:inset 1.5px 1.5px 0 #fff,inset -1px -1px 0 #000,inset -2px -2px 0 #828282;"></div>
<div class="t sans" style="top:796.5px;font-size:12px;line-height:16px;letter-spacing:0.13px;left:1351.95px;"><u>I</u>nclude</div>
<div style="left:1410.4px;top:792px;width:79.6px;height:25.5px;background:#d9d9d9;box-shadow:inset 1.5px 1.5px 0 #fff,inset -1px -1px 0 #000,inset -2px -2px 0 #828282;"></div>
<div class="t sans" style="top:796.5px;font-size:12px;line-height:16px;letter-spacing:-0.03px;left:1428.95px;">E<u>x</u>clude</div>
<div style="left:1490px;top:792px;width:77.7px;height:25.5px;background:#d9d9d9;box-shadow:inset 1.5px 1.5px 0 #fff,inset -1px -1px 0 #000,inset -2px -2px 0 #828282;"></div>
<div class="t sans" style="top:796.5px;font-size:12px;line-height:16px;letter-spacing:-0.31px;left:1509.1px;">Tx S<u>t</u>op</div>
<div style="left:870.6px;top:820.8px;width:249px;height:158.5px;box-shadow:inset 1px 1px 0 #828282,inset -1px -1px 0 #fff,inset 2px 2px 0 #fff,inset -2px -2px 0 #828282;"></div>
<div class="t sans" style="top:827px;font-size:12px;line-height:16px;letter-spacing:0.25px;left:883.75px;">To radio:</div>
<div style="left:949px;top:825.4px;width:87px;height:18px;background:#fff;box-shadow:inset 1px 1px 0 #828282,inset -1px -1px 0 #fff,inset 2px 2px 0 #d9d9d9;"></div>
<div class="t sans" style="top:827px;font-size:12px;line-height:16px;left:951px;">DL0SHF</div>
<div class="t sans" style="top:853px;font-size:12px;line-height:16px;left:895px;">Grid:</div>
<div style="left:949px;top:851px;width:87px;height:18px;background:#fff;box-shadow:inset 1px 1px 0 #828282,inset -1px -1px 0 #fff,inset 2px 2px 0 #d9d9d9;"></div>
<div class="t sans" style="top:853px;font-size:12px;line-height:16px;letter-spacing:0.19px;left:950.5px;">JO54bh</div>
<div style="left:1044px;top:822.5px;width:71px;height:25px;background:#d9d9d9;box-shadow:inset 1.5px 1.5px 0 #fff,inset -1px -1px 0 #000,inset -2px -2px 0 #828282;"></div>
<div class="t sans" style="top:827px;font-size:12px;line-height:16px;letter-spacing:0.23px;left:1059.25px;"><u>L</u>ookup</div>
<div style="left:1044px;top:848px;width:71px;height:25px;background:#d9d9d9;box-shadow:inset 1.5px 1.5px 0 #fff,inset -1px -1px 0 #000,inset -2px -2px 0 #828282;"></div>
<div class="t sans" style="top:853px;font-size:12px;line-height:16px;letter-spacing:-0.18px;left:1069px;">Add</div>
<div class="t sans" style="top:879.7px;font-size:12px;line-height:16px;letter-spacing:-0.4px;left:975.8px;">Az: 22</div>
<div class="t sans" style="top:879.7px;font-size:12px;line-height:16px;letter-spacing:0.16px;left:1055.4px;">1615 km</div>
<div style="left:874px;top:903px;width:164px;height:64px;background:#000;border:4px solid #5e5e5e;box-shadow:inset 1px 1px 0 #000;"></div>
<div class="t sans" style="top:907px;font-size:21.5px;line-height:28px;letter-spacing:1.01px;left:889.5px;color:#ffff00;">2015 Nov 28</div>
<div class="t sans" style="top:934.5px;font-size:21.5px;line-height:28px;letter-spacing:1.04px;left:909.5px;color:#ffff00;">00:21:03</div>
<div style="left:1043px;top:942px;width:73.5px;height:19px;background:#fff;box-shadow:inset 1px 1px 0 #828282,inset -1px -1px 0 #fff,inset 2px 2px 0 #d9d9d9;"></div>
<div class="t sans" style="top:944px;font-size:12px;line-height:16px;letter-spacing:0.1px;left:1054px;">Dsec  0.0</div>
<div style="left:1123.3px;top:820.8px;width:151.5px;height:76.5px;box-shadow:inset 1px 1px 0 #828282,inset -1px -1px 0 #fff,inset 2px 2px 0 #fff,inset -2px -2px 0 #828282;"></div>
<div style="left:1128px;top:825px;width:60.5px;height:19px;background:#fff;box-shadow:inset 1px 1px 0 #828282,inset -1px -1px 0 #fff,inset 2px 2px 0 #d9d9d9;"></div>
<div class="t sans" style="top:827px;font-size:12px;line-height:16px;letter-spacing:-0.26px;left:1137.5px;">Sync   0</div>
<div style="left:1128px;top:850px;width:60.5px;height:19px;background:#fff;box-shadow:inset 1px 1px 0 #828282,inset -1px -1px 0 #fff,inset 2px 2px 0 #d9d9d9;"></div>
<div class="t sans" style="top:852px;font-size:12px;line-height:16px;letter-spacing:0.52px;left:1133.5px;">Tol   400</div>
<div style="left:1128px;top:875px;width:60.5px;height:19px;background:#fff;box-shadow:inset 1px 1px 0 #828282,inset -1px -1px 0 #fff,inset 2px 2px 0 #d9d9d9;"></div>
<div class="t sans" style="top:877px;font-size:12px;line-height:16px;letter-spacing:-0.28px;left:1136.75px;">MinW  A</div>
<div style="left:1198.5px;top:828.5px;width:12px;height:12px;background:#fff;box-shadow:inset 1px 1px 0 #828282,inset -1px -1px 0 #fff,inset 2px 2px 0 #404040;"></div>
<div class="t sans" style="top:827px;font-size:12px;line-height:16px;letter-spacing:-0.09px;left:1216.25px;"><u>Z</u>ap</div>
<div style="left:1198.5px;top:853.5px;width:12px;height:12px;background:#fff;box-shadow:inset 1px 1px 0 #828282,inset -1px -1px 0 #fff,inset 2px 2px 0 #404040;"></div>
<svg style="left:1199.5px;top:854.5px" width="10" height="10"><path d="M1.5 4.5L4 7.5L8.5 1.5" stroke="#000" stroke-width="2" fill="none"/></svg>
<div class="t sans" style="top:852px;font-size:12px;line-height:16px;letter-spacing:-0.75px;left:1216.25px;">AFC</div>
<div style="left:1198.5px;top:878.5px;width:12px;height:12px;background:#fff;box-shadow:inset 1px 1px 0 #828282,inset -1px -1px 0 #fff,inset 2px 2px 0 #404040;"></div>
<div class="t sans" style="top:877px;font-size:12px;line-height:16px;letter-spacing:-0.17px;left:1216.25px;"><u>F</u>reeze</div>
<div style="left:1123.3px;top:900px;width:151.5px;height:47.5px;box-shadow:inset 1px 1px 0 #828282,inset -1px -1px 0 #fff,inset 2px 2px 0 #fff,inset -2px -2px 0 #828282;"></div>
<div style="left:1132.5px;top:907.5px;width:12px;height:12px;background:#fff;box-shadow:inset 1px 1px 0 #828282,inset -1px -1px 0 #fff,inset 2px 2px 0 #404040;"></div>
<div class="t sans" style="top:906px;font-size:12px;line-height:16px;letter-spacing:-0.07px;left:1150px;">Tx First</div>
<div class="t sans" style="top:928.6px;font-size:12px;line-height:16px;letter-spacing:-0.17px;left:1168px;"><u>R</u>pt:</div>
<div style="left:1203px;top:927.5px;width:31.5px;height:17.5px;background:#fff;box-shadow:inset 1px 1px 0 #828282,inset -1px -1px 0 #fff,inset 2px 2px 0 #d9d9d9;"></div>
<div class="t sans" style="top:928.6px;font-size:12px;line-height:16px;letter-spacing:0.33px;left:1204.5px;">-20</div>
<div style="left:1127px;top:951.7px;width:73px;height:27px;background:#d9d9d9;box-shadow:inset 1.5px 1.5px 0 #fff,inset -1px -1px 0 #000,inset -2px -2px 0 #828282;"></div>
<div class="t sans" style="top:957px;font-size:12px;line-height:16px;letter-spacing:0.12px;left:1135.75px;"><u>G</u>en Msgs</div>
<div style="left:1204px;top:951.7px;width:68px;height:27px;background:#d9d9d9;box-shadow:inset 1.5px 1.5px 0 #fff,inset -1px -1px 0 #000,inset -2px -2px 0 #828282;"></div>
<div class="t sans" style="top:957px;font-size:12px;line-height:16px;letter-spacing:-0.03px;left:1210.25px;"><u>A</u>uto is Off</div>
<div style="left:1278.75px;top:820.8px;width:288px;height:158.5px;box-shadow:inset 1px 1px 0 #828282,inset -1px -1px 0 #fff,inset 2px 2px 0 #fff,inset -2px -2px 0 #828282;"></div>
<div style="left:1280.8px;top:825.4px;width:226px;height:18px;background:#fff;box-shadow:inset 1px 1px 0 #828282,inset -1px -1px 0 #fff,inset 2px 2px 0 #d9d9d9;"></div>
<div class="t sans" style="top:827px;font-size:12px;line-height:16px;letter-spacing:0.03px;left:1282.3px;">DL0SHF EB3FRN JN01</div>
<div style="left:1512.75px;top:827.8px;width:12px;height:12px;background:#fff;border-radius:50%;box-shadow:inset 1px 1px 0 #828282,inset -1px -1px 0 #fff,inset 2px 2px 0 #404040;"></div>
<div style="left:1516.75px;top:831.8px;width:4px;height:4px;background:#000;border-radius:50%;"></div>
<div style="left:1535.8px;top:821.9px;width:30px;height:25px;background:#d9d9d9;box-shadow:inset 1.5px 1.5px 0 #fff,inset -1px -1px 0 #000,inset -2px -2px 0 #828282;"></div>
<div class="t sans" style="top:827px;font-size:12px;line-height:16px;letter-spacing:-0.5px;left:1541.3px;">Tx<u>1</u></div>
<div style="left:1280.8px;top:851.43px;width:226px;height:18px;background:#fff;box-shadow:inset 1px 1px 0 #828282,inset -1px -1px 0 #fff,inset 2px 2px 0 #d9d9d9;"></div>
<div class="t sans" style="top:853.03px;font-size:12px;line-height:16px;letter-spacing:0.07px;left:1282.3px;">DL0SHF EB3FRN -20</div>
<div style="left:1512.75px;top:853.83px;width:12px;height:12px;background:#fff;border-radius:50%;box-shadow:inset 1px 1px 0 #828282,inset -1px -1px 0 #fff,inset 2px 2px 0 #404040;"></div>
<div style="left:1535.8px;top:847.93px;width:30px;height:25px;background:#d9d9d9;box-shadow:inset 1.5px 1.5px 0 #fff,inset -1px -1px 0 #000,inset -2px -2px 0 #828282;"></div>
<div class="t sans" style="top:853.03px;font-size:12px;line-height:16px;letter-spacing:-0.5px;left:1541.3px;">Tx<u>2</u></div>
<div style="left:1280.8px;top:877.46px;width:226px;height:18px;background:#fff;box-shadow:inset 1px 1px 0 #828282,inset -1px -1px 0 #fff,inset 2px 2px 0 #d9d9d9;"></div>
<div class="t sans" style="top:879.06px;font-size:12px;line-height:16px;letter-spacing:0.09px;left:1282.3px;">DL0SHF EB3FRN R-20</div>
<div style="left:1512.75px;top:879.86px;width:12px;height:12px;background:#fff;border-radius:50%;box-shadow:inset 1px 1px 0 #828282,inset -1px -1px 0 #fff,inset 2px 2px 0 #404040;"></div>
<div style="left:1535.8px;top:873.96px;width:30px;height:25px;background:#d9d9d9;box-shadow:inset 1.5px 1.5px 0 #fff,inset -1px -1px 0 #000,inset -2px -2px 0 #828282;"></div>
<div class="t sans" style="top:879.06px;font-size:12px;line-height:16px;letter-spacing:-0.5px;left:1541.3px;">Tx<u>3</u></div>
<div style="left:1280.8px;top:903.49px;width:226px;height:18px;background:#fff;box-shadow:inset 1px 1px 0 #828282,inset -1px -1px 0 #fff,inset 2px 2px 0 #d9d9d9;"></div>
<div class="t sans" style="top:905.09px;font-size:12px;line-height:16px;letter-spacing:0.08px;left:1282.3px;">@1500 (RRR)</div>
<div style="left:1512.75px;top:905.89px;width:12px;height:12px;background:#fff;border-radius:50%;box-shadow:inset 1px 1px 0 #828282,inset -1px -1px 0 #fff,inset 2px 2px 0 #404040;"></div>
<div style="left:1535.8px;top:899.99px;width:30px;height:25px;background:#d9d9d9;box-shadow:inset 1.5px 1.5px 0 #fff,inset -1px -1px 0 #000,inset -2px -2px 0 #828282;"></div>
<div class="t sans" style="top:905.09px;font-size:12px;line-height:16px;letter-spacing:-0.5px;left:1541.3px;">Tx<u>4</u></div>
<div style="left:1280.8px;top:929.52px;width:226px;height:18px;background:#fff;box-shadow:inset 1px 1px 0 #828282,inset -1px -1px 0 #fff,inset 2px 2px 0 #d9d9d9;"></div>
<div class="t sans" style="top:931.12px;font-size:12px;line-height:16px;letter-spacing:0.05px;left:1282.3px;">@1700 (73)</div>
<div style="left:1512.75px;top:931.92px;width:12px;height:12px;background:#fff;border-radius:50%;box-shadow:inset 1px 1px 0 #828282,inset -1px -1px 0 #fff,inset 2px 2px 0 #404040;"></div>
<div style="left:1535.8px;top:926.02px;width:30px;height:25px;background:#d9d9d9;box-shadow:inset 1.5px 1.5px 0 #fff,inset -1px -1px 0 #000,inset -2px -2px 0 #828282;"></div>
<div class="t sans" style="top:931.12px;font-size:12px;line-height:16px;letter-spacing:-0.5px;left:1541.3px;">Tx<u>5</u></div>
<div style="left:1280.8px;top:955.55px;width:226px;height:18px;background:#fff;box-shadow:inset 1px 1px 0 #828282,inset -1px -1px 0 #fff,inset 2px 2px 0 #d9d9d9;"></div>
<div class="t sans" style="top:957.15px;font-size:12px;line-height:16px;left:1282.3px;">@1270 (TUNE)</div>
<div style="left:1512.75px;top:957.95px;width:12px;height:12px;background:#fff;border-radius:50%;box-shadow:inset 1px 1px 0 #828282,inset -1px -1px 0 #fff,inset 2px 2px 0 #404040;"></div>
<div style="left:1535.8px;top:952.05px;width:30px;height:25px;background:#d9d9d9;box-shadow:inset 1.5px 1.5px 0 #fff,inset -1px -1px 0 #000,inset -2px -2px 0 #828282;"></div>
<div class="t sans" style="top:957.15px;font-size:12px;line-height:16px;letter-spacing:-0.5px;left:1541.3px;">Tx<u>6</u></div>
<div style="left:869.5px;top:981px;width:698.5px;height:1.5px;background:#fff;"></div>
<div style="left:871.7px;top:983px;width:91.6px;height:23px;background:#d9d9d9;box-shadow:inset 1px 1px 0 #828282,inset -1px -1px 0 #fff;"></div>
<div class="t sans" style="top:986.3px;font-size:12px;line-height:16px;letter-spacing:0.19px;left:878px;color:#000;">1.0000 1.0002</div>
<div style="left:966.5px;top:983px;width:42.25px;height:23px;background:#80ff80;box-shadow:inset 1px 1px 0 #828282,inset -1px -1px 0 #fff;"></div>
<div class="t sans" style="top:986.3px;font-size:12px;line-height:16px;letter-spacing:0.05px;left:972.88px;color:#000;">JT4G</div>
<div style="left:1011.7px;top:983px;width:96.3px;height:23px;background:#d9d9d9;box-shadow:inset 1px 1px 0 #828282,inset -1px -1px 0 #fff;"></div>
<div class="t sans" style="top:986.3px;font-size:12px;line-height:16px;letter-spacing:-0.07px;left:1018.6px;color:#000;">Freeze DF: 234</div>
<div style="left:1110.8px;top:983px;width:94.6px;height:23px;background:#d9d9d9;box-shadow:inset 1px 1px 0 #828282,inset -1px -1px 0 #fff;"></div>
<div class="t sans" style="top:986.3px;font-size:12px;line-height:16px;left:1117.35px;color:#000;">Rx noise:  3 dB</div>
<div style="left:1208.3px;top:983px;width:101.1px;height:23px;background:#d9d9d9;box-shadow:inset 1px 1px 0 #828282,inset -1px -1px 0 #fff;"></div>
<div class="t sans" style="top:986.3px;font-size:12px;line-height:16px;letter-spacing:0.05px;left:1215.1px;color:#000;">T/R Period: 60 s</div>
<div style="left:1499px;top:983px;width:68px;height:23px;background:#00ff00;"></div>
<div class="t sans" style="top:986.3px;font-size:12px;line-height:16px;letter-spacing:0.1px;left:1506.25px;color:#000;">Receiving</div>
<div style="left:1605px;top:454px;width:355px;height:363.5px;background:#9aa0b5;box-shadow:inset 2px 2px 0 #d3d6e3,inset -2px -2px 0 #727889;"></div>
<div style="left:1609px;top:458px;width:347px;height:355.5px;background:#000;box-shadow:inset 1px 1px 0 #727889,inset -1px -1px 0 #d3d6e3;"></div>
<div style="left:1605px;top:478px;width:5px;height:1px;background:#727889;"></div>
<div style="left:1605px;top:479px;width:5px;height:1px;background:#d3d6e3;"></div>
<div style="left:1955px;top:478px;width:5px;height:1px;background:#727889;"></div>
<div style="left:1955px;top:479px;width:5px;height:1px;background:#d3d6e3;"></div>
<div style="left:1605px;top:792.5px;width:5px;height:1px;background:#727889;"></div>
<div style="left:1605px;top:793.5px;width:5px;height:1px;background:#d3d6e3;"></div>
<div style="left:1955px;top:792.5px;width:5px;height:1px;background:#727889;"></div>
<div style="left:1955px;top:793.5px;width:5px;height:1px;background:#d3d6e3;"></div>
<div style="left:1629px;top:812.5px;width:1px;height:5px;background:#727889;"></div>
<div style="left:1630px;top:812.5px;width:1px;height:5px;background:#d3d6e3;"></div>
<div style="left:1935px;top:812.5px;width:1px;height:5px;background:#727889;"></div>
<div style="left:1936px;top:812.5px;width:1px;height:5px;background:#d3d6e3;"></div>
<div style="left:1610px;top:459px;width:345px;height:20px;background:#9ba1b6;"></div>
<div style="left:1610px;top:459px;width:20px;height:20px;background:#9ba1b6;box-shadow:inset 1px 1px 0 #d3d6e3,inset -1px -1px 0 #727889;"></div>
<div style="left:1613px;top:466px;width:12px;height:5px;background:#9ba1b6;box-shadow:inset 1px 1px 0 #d3d6e3,inset -1px -1px 0 #727889;"></div>
<div style="left:1935px;top:459px;width:20px;height:20px;background:#9ba1b6;box-shadow:inset 1px 1px 0 #d3d6e3,inset -1px -1px 0 #727889;"></div>
<div style="left:1939px;top:463px;width:11px;height:11px;background:#9ba1b6;box-shadow:inset 1px 1px 0 #d3d6e3,inset -1px -1px 0 #727889;"></div>
<div style="left:1915px;top:459px;width:20px;height:20px;background:#9ba1b6;box-shadow:inset 1px 1px 0 #d3d6e3,inset -1px -1px 0 #727889;"></div>
<div style="left:1922px;top:466px;width:5px;height:5px;background:#9ba1b6;box-shadow:inset 1px 1px 0 #d3d6e3,inset -1px -1px 0 #727889;"></div>
<div style="left:1630px;top:459px;width:285px;height:20px;background:#9ba1b6;box-shadow:inset 1px 1px 0 #d3d6e3,inset -1px -1px 0 #727889;"></div>
<div class="t dvb" style="top:461px;font-size:13px;line-height:17px;left:1691.3px;color:#000000;white-space:pre;">Terminal - root@eb3frn:/mnt/RADIO/dsn</div>
<div style="left:1610px;top:479.5px;width:345px;height:21.5px;background:#afb3c8;"></div>
<div style="left:1610px;top:479.5px;width:345px;height:21.5px;overflow:hidden">
<div class="t dv" style="top:1.2px;font-size:14px;line-height:18px;letter-spacing:-0.81px;left:8px;color:#000;"><u>F</u>ile</div>
<div class="t dv" style="top:1.2px;font-size:14px;line-height:18px;letter-spacing:-1.04px;left:42px;color:#000;"><u>E</u>dit</div>
<div class="t dv" style="top:1.2px;font-size:14px;line-height:18px;letter-spacing:-1.24px;left:78px;color:#000;"><u>V</u>iew</div>
<div class="t dv" style="top:1.2px;font-size:14px;line-height:18px;letter-spacing:-0.6px;left:120px;color:#000;"><u>T</u>erminal</div>
<div class="t dv" style="top:1.2px;font-size:14px;line-height:18px;letter-spacing:-0.16px;left:187px;color:#000;">T<u>a</u>bs</div>
<div class="t dv" style="top:1.2px;font-size:14px;line-height:18px;letter-spacing:-1.14px;left:230px;color:#000;"><u>H</u>elp</div>
</div>
<div style="left:1610px;top:501px;width:310px;height:313px;background:#000;"></div>
<div style="left:1614px;top:508px;width:1px;height:300px;background:#e5e5e5;"></div>
<div style="left:1614px;top:508px;width:4px;height:1px;background:#e5e5e5;"></div>
<div style="left:1614px;top:807.5px;width:4px;height:1px;background:#e5e5e5;"></div>
<div style="left:1905px;top:508px;width:15px;height:1px;background:#e5e5e5;"></div>
<div style="left:1618px;top:502px;width:287px;height:13px;background:#aaaaaa;"></div>
<div style="left:1793px;top:513.5px;width:6px;height:1.5px;background:#000;"></div>
<div class="t dvm" style="top:501.5px;font-size:11.63px;line-height:15px;left:1618px;color:#000;">DSN station tracking v0.2_SPICE by EB3FRN</div>
<div class="t dvm" style="top:527.5px;font-size:11.63px;line-height:15px;left:1639px;color:#e5e5e5;">Object</div>
<div class="t dvm" style="top:527.5px;font-size:11.63px;line-height:15px;left:1716px;color:#e5e5e5;">Azim.</div>
<div class="t dvm" style="top:527.5px;font-size:11.63px;line-height:15px;left:1786px;color:#e5e5e5;">Elev.</div>
<div class="t dvm" style="top:527.5px;font-size:11.63px;line-height:15px;left:1849px;color:#e5e5e5;">AOS</div>
<div style="left:1625.5px;top:547.5px;width:258px;height:1px;background:#e5e5e5;background:repeating-linear-gradient(to right,#e5e5e5 0,#e5e5e5 5px,transparent 5px,transparent 7px);"></div>
<div style="left:1899px;top:547.5px;width:21px;height:1px;background:#e5e5e5;background:repeating-linear-gradient(to right,#e5e5e5 0,#e5e5e5 5px,transparent 5px,transparent 7px);"></div>
<div class="t dvm" style="top:553.5px;font-size:11.63px;line-height:15px;left:1625px;color:#e5e5e5;">a</div>
<div class="t dvm" style="top:553.5px;font-size:11.63px;line-height:15px;left:1639px;color:#e5e5e5;">SUN</div>
<div class="t dvm" style="top:553.5px;font-size:11.63px;line-height:15px;left:1723px;color:#e5e5e5;">24.302</div>
<div class="t dvm" style="top:553.5px;font-size:11.63px;line-height:15px;left:1786px;color:#e5e5e5;">-68.590</div>
<div class="t dvm" style="top:553.5px;font-size:11.63px;line-height:15px;left:1849px;color:#e5e5e5;">19:30</div>
<div style="left:1625px;top:567px;width:7px;height:13px;background:#aaaaaa;"></div>
<div class="t dvm" style="top:566.5px;font-size:11.63px;line-height:15px;left:1625px;color:#000;">b</div>
<div style="left:1639px;top:567px;width:126px;height:13px;background:#aaaaaa;"></div>
<div class="t dvm" style="top:566.5px;font-size:11.63px;line-height:15px;left:1639px;color:#000;">MOON       136.746</div>
<div style="left:1786px;top:567px;width:49px;height:13px;background:#aaaaaa;"></div>
<div class="t dvm" style="top:566.5px;font-size:11.63px;line-height:15px;left:1793px;color:#000;">60.953</div>
<div style="left:1849px;top:567px;width:35px;height:13px;background:#aaaaaa;"></div>
<div style="left:1625px;top:580px;width:7px;height:13px;background:#aaaaaa;"></div>
<div class="t dvm" style="top:579.5px;font-size:11.63px;line-height:15px;left:1625px;color:#000;">c</div>
<div style="left:1639px;top:580px;width:63px;height:13px;background:#aaaaaa;"></div>
<div class="t dvm" style="top:579.5px;font-size:11.63px;line-height:15px;left:1639px;color:#000;">LRO</div>
<div style="left:1716px;top:580px;width:49px;height:13px;background:#aaaaaa;"></div>
<div class="t dvm" style="top:579.5px;font-size:11.63px;line-height:15px;left:1716px;color:#000;">136.746</div>
<div style="left:1786px;top:580px;width:49px;height:13px;background:#aaaaaa;"></div>
<div class="t dvm" style="top:579.5px;font-size:11.63px;line-height:15px;left:1793px;color:#000;">60.953</div>
<div style="left:1849px;top:580px;width:35px;height:13px;background:#aaaaaa;"></div>
<div class="t dvm" style="top:592.5px;font-size:11.63px;line-height:15px;left:1625px;color:#e5e5e5;">d</div>
<div class="t dvm" style="top:592.5px;font-size:11.63px;line-height:15px;left:1639px;color:#e5e5e5;">MARS</div>
<div class="t dvm" style="top:592.5px;font-size:11.63px;line-height:15px;left:1723px;color:#e5e5e5;">73.883</div>
<div class="t dvm" style="top:592.5px;font-size:11.63px;line-height:15px;left:1786px;color:#e5e5e5;">-20.880</div>
<div class="t dvm" style="top:592.5px;font-size:11.63px;line-height:15px;left:1849px;color:#e5e5e5;">04:13</div>
<div class="t dvm" style="top:605.5px;font-size:11.63px;line-height:15px;left:1625px;color:#e5e5e5;">e</div>
<div class="t dvm" style="top:605.5px;font-size:11.63px;line-height:15px;left:1639px;color:#e5e5e5;">MOM</div>
<div class="t dvm" style="top:605.5px;font-size:11.63px;line-height:15px;left:1723px;color:#e5e5e5;">73.883</div>
<div class="t dvm" style="top:605.5px;font-size:11.63px;line-height:15px;left:1786px;color:#e5e5e5;">-20.880</div>
<div class="t dvm" style="top:605.5px;font-size:11.63px;line-height:15px;left:1849px;color:#e5e5e5;">04:13</div>
<div class="t dvm" style="top:618.5px;font-size:11.63px;line-height:15px;left:1625px;color:#e5e5e5;">f</div>
<div class="t dvm" style="top:618.5px;font-size:11.63px;line-height:15px;left:1639px;color:#e5e5e5;">MOM</div>
<div class="t dvm" style="top:618.5px;font-size:11.63px;line-height:15px;left:1681px;color:#e5e5e5;">UNK</div>
<div class="t dvm" style="top:618.5px;font-size:11.63px;line-height:15px;left:1723px;color:#e5e5e5;">73.883</div>
<div class="t dvm" style="top:618.5px;font-size:11.63px;line-height:15px;left:1786px;color:#e5e5e5;">-20.880</div>
<div class="t dvm" style="top:618.5px;font-size:11.63px;line-height:15px;left:1849px;color:#e5e5e5;">04:13</div>
<div class="t dvm" style="top:631.5px;font-size:11.63px;line-height:15px;left:1625px;color:#e5e5e5;">g</div>
<div class="t dvm" style="top:631.5px;font-size:11.63px;line-height:15px;left:1639px;color:#e5e5e5;">MEX</div>
<div class="t dvm" style="top:631.5px;font-size:11.63px;line-height:15px;left:1730px;color:#e5e5e5;">0.000</div>
<div class="t dvm" style="top:631.5px;font-size:11.63px;line-height:15px;left:1800px;color:#e5e5e5;">0.000</div>
<div class="t dvm" style="top:631.5px;font-size:11.63px;line-height:15px;left:1863px;color:#e5e5e5;">*</div>
<div class="t dvm" style="top:644.5px;font-size:11.63px;line-height:15px;left:1625px;color:#e5e5e5;">h</div>
<div class="t dvm" style="top:644.5px;font-size:11.63px;line-height:15px;left:1639px;color:#e5e5e5;">ACE</div>
<div class="t dvm" style="top:644.5px;font-size:11.63px;line-height:15px;left:1723px;color:#e5e5e5;">24.500</div>
<div class="t dvm" style="top:644.5px;font-size:11.63px;line-height:15px;left:1786px;color:#e5e5e5;">-68.655</div>
<div class="t dvm" style="top:644.5px;font-size:11.63px;line-height:15px;left:1849px;color:#e5e5e5;">19:27</div>
<div class="t dvm" style="top:657.5px;font-size:11.63px;line-height:15px;left:1625px;color:#e5e5e5;">i</div>
<div class="t dvm" style="top:657.5px;font-size:11.63px;line-height:15px;left:1639px;color:#e5e5e5;">WIND</div>
<div class="t dvm" style="top:657.5px;font-size:11.63px;line-height:15px;left:1723px;color:#e5e5e5;">24.500</div>
<div class="t dvm" style="top:657.5px;font-size:11.63px;line-height:15px;left:1786px;color:#e5e5e5;">-68.655</div>
<div class="t dvm" style="top:657.5px;font-size:11.63px;line-height:15px;left:1849px;color:#e5e5e5;">19:27</div>
<div class="t dvm" style="top:670.5px;font-size:11.63px;line-height:15px;left:1625px;color:#e5e5e5;">j</div>
<div class="t dvm" style="top:670.5px;font-size:11.63px;line-height:15px;left:1639px;color:#e5e5e5;">DSCOVR</div>
<div class="t dvm" style="top:670.5px;font-size:11.63px;line-height:15px;left:1723px;color:#e5e5e5;">24.500</div>
<div class="t dvm" style="top:670.5px;font-size:11.63px;line-height:15px;left:1786px;color:#e5e5e5;">-68.655</div>
<div class="t dvm" style="top:670.5px;font-size:11.63px;line-height:15px;left:1849px;color:#e5e5e5;">19:27</div>
<div class="t dvm" style="top:683.5px;font-size:11.63px;line-height:15px;left:1625px;color:#e5e5e5;">k</div>
<div class="t dvm" style="top:683.5px;font-size:11.63px;line-height:15px;left:1639px;color:#e5e5e5;">SOHO</div>
<div class="t dvm" style="top:683.5px;font-size:11.63px;line-height:15px;left:1695px;color:#e5e5e5;">C</div>
<div class="t dvm" style="top:683.5px;font-size:11.63px;line-height:15px;left:1730px;color:#e5e5e5;">0.000</div>
<div class="t dvm" style="top:683.5px;font-size:11.63px;line-height:15px;left:1800px;color:#e5e5e5;">0.000</div>
<div class="t dvm" style="top:696.5px;font-size:11.63px;line-height:15px;left:1625px;color:#e5e5e5;">l</div>
<div class="t dvm" style="top:696.5px;font-size:11.63px;line-height:15px;left:1639px;color:#e5e5e5;">SOHO</div>
<div class="t dvm" style="top:696.5px;font-size:11.63px;line-height:15px;left:1688px;color:#e5e5e5;">NC</div>
<div class="t dvm" style="top:696.5px;font-size:11.63px;line-height:15px;left:1730px;color:#e5e5e5;">0.000</div>
<div class="t dvm" style="top:696.5px;font-size:11.63px;line-height:15px;left:1800px;color:#e5e5e5;">0.000</div>
<div class="t dvm" style="top:709.5px;font-size:11.63px;line-height:15px;left:1625px;color:#e5e5e5;">m</div>
<div class="t dvm" style="top:709.5px;font-size:11.63px;line-height:15px;left:1639px;color:#e5e5e5;">CHANDRA</div>
<div class="t dvm" style="top:709.5px;font-size:11.63px;line-height:15px;left:1730px;color:#e5e5e5;">0.000</div>
<div class="t dvm" style="top:709.5px;font-size:11.63px;line-height:15px;left:1800px;color:#e5e5e5;">0.000</div>
<div style="left:1625px;top:723px;width:7px;height:13px;background:#aaaaaa;"></div>
<div class="t dvm" style="top:722.5px;font-size:11.63px;line-height:15px;left:1625px;color:#000;">n</div>
<div style="left:1639px;top:723px;width:63px;height:13px;background:#aaaaaa;"></div>
<div class="t dvm" style="top:722.5px;font-size:11.63px;line-height:15px;left:1639px;color:#000;">THEMIS-B</div>
<div style="left:1716px;top:723px;width:49px;height:13px;background:#aaaaaa;"></div>
<div class="t dvm" style="top:722.5px;font-size:11.63px;line-height:15px;left:1716px;color:#000;">204.075</div>
<div style="left:1786px;top:723px;width:49px;height:13px;background:#aaaaaa;"></div>
<div class="t dvm" style="top:722.5px;font-size:11.63px;line-height:15px;left:1793px;color:#000;">68.530</div>
<div style="left:1849px;top:723px;width:35px;height:13px;background:#aaaaaa;"></div>
<div class="t dvm" style="top:553.5px;font-size:11.63px;line-height:15px;left:1905px;color:#e5e5e5;">o</div>
<div class="t dvm" style="top:566.5px;font-size:11.63px;line-height:15px;left:1905px;color:#e5e5e5;">p</div>
<div class="t dvm" style="top:748.5px;font-size:11.63px;line-height:15px;left:1632px;color:#e5e5e5;">Object</div>
<div class="t dvm" style="top:748.5px;font-size:11.63px;line-height:15px;left:1709px;color:#e5e5e5;">Azimuth</div>
<div class="t dvm" style="top:748.5px;font-size:11.63px;line-height:15px;left:1772px;color:#e5e5e5;">Elevation</div>
<div class="t dvm" style="top:748.5px;font-size:11.63px;line-height:15px;left:1856px;color:#e5e5e5;">Frequency</div>
<div style="left:1618.5px;top:768.5px;width:302px;height:1px;background:repeating-linear-gradient(to right,#e5e5e5 0,#e5e5e5 5px,transparent 5px,transparent 7px);"></div>
<div style="left:1639px;top:775px;width:119px;height:13px;background:#aaaaaa;"></div>
<div class="t dvm" style="top:774.5px;font-size:11.63px;line-height:15px;left:1639px;color:#000;">MOON      136.746</div>
<div style="left:1779px;top:775px;width:49px;height:13px;background:#aaaaaa;"></div>
<div class="t dvm" style="top:774.5px;font-size:11.63px;line-height:15px;left:1786px;color:#000;">60.953</div>
<div style="left:1856px;top:775px;width:70px;height:13px;background:#aaaaaa;"></div>
<div class="t dvm" style="top:774.5px;font-size:11.63px;line-height:15px;left:1856px;color:#000;">2250.00037</div>
<div style="left:1618px;top:801px;width:308px;height:13px;background:#aaaaaa;"></div>
<div class="t dvm" style="top:800.5px;font-size:11.63px;line-height:15px;left:1618px;color:#000;">Keys:  Select object=a to z, Start/Stop rot.</div>
<div style="left:1604px;top:817px;width:356px;height:365.5px;background:#c0608a;box-shadow:inset 2px 2px 0 #e6a0c0,inset -2px -2px 0 #803858;"></div>
<div style="left:1608px;top:821px;width:348px;height:357.5px;background:#000;box-shadow:inset 1px 1px 0 #803858,inset -1px -1px 0 #e6a0c0;"></div>
<div style="left:1604px;top:841px;width:5px;height:1px;background:#803858;"></div>
<div style="left:1604px;top:842px;width:5px;height:1px;background:#e6a0c0;"></div>
<div style="left:1955px;top:841px;width:5px;height:1px;background:#803858;"></div>
<div style="left:1955px;top:842px;width:5px;height:1px;background:#e6a0c0;"></div>
<div style="left:1604px;top:1157.5px;width:5px;height:1px;background:#803858;"></div>
<div style="left:1604px;top:1158.5px;width:5px;height:1px;background:#e6a0c0;"></div>
<div style="left:1955px;top:1157.5px;width:5px;height:1px;background:#803858;"></div>
<div style="left:1955px;top:1158.5px;width:5px;height:1px;background:#e6a0c0;"></div>
<div style="left:1628px;top:1177.5px;width:1px;height:5px;background:#803858;"></div>
<div style="left:1629px;top:1177.5px;width:1px;height:5px;background:#e6a0c0;"></div>
<div style="left:1935px;top:1177.5px;width:1px;height:5px;background:#803858;"></div>
<div style="left:1936px;top:1177.5px;width:1px;height:5px;background:#e6a0c0;"></div>
<div style="left:1609px;top:822px;width:346px;height:20px;background:#b04a78;"></div>
<div style="left:1609px;top:822px;width:20px;height:20px;background:#b04a78;box-shadow:inset 1px 1px 0 #e6a0c0,inset -1px -1px 0 #803858;"></div>
<div style="left:1612px;top:829px;width:12px;height:5px;background:#b04a78;box-shadow:inset 1px 1px 0 #e6a0c0,inset -1px -1px 0 #803858;"></div>
<div style="left:1935px;top:822px;width:20px;height:20px;background:#b04a78;box-shadow:inset 1px 1px 0 #e6a0c0,inset -1px -1px 0 #803858;"></div>
<div style="left:1939px;top:826px;width:11px;height:11px;background:#b04a78;box-shadow:inset 1px 1px 0 #e6a0c0,inset -1px -1px 0 #803858;"></div>
<div style="left:1915px;top:822px;width:20px;height:20px;background:#b04a78;box-shadow:inset 1px 1px 0 #e6a0c0,inset -1px -1px 0 #803858;"></div>
<div style="left:1922px;top:829px;width:5px;height:5px;background:#b04a78;box-shadow:inset 1px 1px 0 #e6a0c0,inset -1px -1px 0 #803858;"></div>
<div style="left:1629px;top:822px;width:286px;height:20px;background:#b04a78;box-shadow:inset 1px 1px 0 #e6a0c0,inset -1px -1px 0 #803858;"></div>
<div class="t dvb" style="top:824px;font-size:13px;line-height:17px;left:1722.5px;color:#ffffff;white-space:pre;">Terminal - root@eb3frn:/mnt/RADIO/antenna</div>
<div style="left:1609px;top:842px;width:346px;height:22px;background:#afb3c8;"></div>
<div style="left:1609px;top:842px;width:346px;height:22px;overflow:hidden">
<div class="t dv" style="top:1.5px;font-size:14px;line-height:18px;letter-spacing:-0.81px;left:8.5px;color:#000;"><u>F</u>ile</div>
<div class="t dv" style="top:1.5px;font-size:14px;line-height:18px;letter-spacing:-1.04px;left:42.5px;color:#000;"><u>E</u>dit</div>
<div class="t dv" style="top:1.5px;font-size:14px;line-height:18px;letter-spacing:-1.24px;left:78.5px;color:#000;"><u>V</u>iew</div>
<div class="t dv" style="top:1.5px;font-size:14px;line-height:18px;letter-spacing:-0.6px;left:120.5px;color:#000;"><u>T</u>erminal</div>
<div class="t dv" style="top:1.5px;font-size:14px;line-height:18px;letter-spacing:-0.16px;left:187.5px;color:#000;">T<u>a</u>bs</div>
<div class="t dv" style="top:1.5px;font-size:14px;line-height:18px;letter-spacing:-1.14px;left:230.5px;color:#000;"><u>H</u>elp</div>
</div>
<div style="left:1609px;top:864px;width:311px;height:313.5px;background:#000;"></div>
<div style="left:1613.5px;top:871px;width:1px;height:300px;background:#e5e5e5;"></div>
<div style="left:1613.5px;top:871px;width:4px;height:1px;background:#e5e5e5;"></div>
<div style="left:1613.5px;top:1170.5px;width:4px;height:1px;background:#e5e5e5;"></div>
<div style="left:1848.5px;top:871px;width:72px;height:1px;background:#e5e5e5;"></div>
<div style="left:1617.5px;top:865px;width:231px;height:13px;background:#aaaaaa;"></div>
<div class="t dvm" style="top:864.5px;font-size:11.63px;line-height:15px;left:1617.5px;color:#000;">ANTENNA CONTROLLER v0.1 by EB3FRN</div>
<div style="left:1633.3px;top:897.5px;width:330px;height:40px;border:1.5px solid #55ff55;"></div>
<div class="t dvmb" style="top:903.5px;font-size:11.63px;line-height:15px;left:1638.5px;color:#55ff55;">UD:</div>
<div class="t dvmb" style="top:903.5px;font-size:11.63px;line-height:15px;left:1666.5px;color:#55ff55;">2015/11/28</div>
<div class="t dvmb" style="top:903.5px;font-size:11.63px;line-height:15px;left:1778.5px;color:#55ff55;">UT:</div>
<div class="t dvmb" style="top:903.5px;font-size:11.63px;line-height:15px;left:1806.5px;color:#55ff55;">00:21:03</div>
<div class="t dvmb" style="top:903.5px;font-size:11.63px;line-height:15px;left:1897.5px;color:#55ff55;">GMST</div>
<div class="t dvmb" style="top:916.5px;font-size:11.63px;line-height:15px;left:1638.5px;color:#55ff55;">JD:</div>
<div class="t dvmb" style="top:916.5px;font-size:11.63px;line-height:15px;left:1666.5px;color:#55ff55;">2457354.51462</div>
<div class="t dvmb" style="top:916.5px;font-size:11.63px;line-height:15px;left:1778.5px;color:#55ff55;">HA:</div>
<div class="t dvmb" style="top:916.5px;font-size:11.63px;line-height:15px;left:1806.5px;color:#55ff55;">-1:21:49</div>
<div class="t dvmb" style="top:916.5px;font-size:11.63px;line-height:15px;left:1897.5px;color:#55ff55;">RA:</div>
<div style="left:1645px;top:956px;width:84px;height:52px;background:#0000aa;"></div>
<div style="left:1647.5px;top:962px;width:79px;height:40.5px;border:1.5px solid #fff;"></div>
<div class="t dvmb" style="top:968.5px;font-size:11.63px;line-height:15px;left:1659.5px;color:#fff;">Azim.</div>
<div class="t dvmb" style="top:981.5px;font-size:11.63px;line-height:15px;left:1666.5px;color:#fff;">136.808</div>
<div style="left:1820px;top:956px;width:84px;height:52px;background:#0000aa;"></div>
<div style="left:1822.5px;top:962px;width:79px;height:40.5px;border:1.5px solid #fff;"></div>
<div class="t dvmb" style="top:968.5px;font-size:11.63px;line-height:15px;left:1834.5px;color:#fff;">Elev.</div>
<div class="t dvmb" style="top:981.5px;font-size:11.63px;line-height:15px;left:1848.5px;color:#fff;">60.937</div>
<div class="t dvmb" style="top:1020.5px;font-size:11.63px;line-height:15px;left:1659.5px;color:#ffffff;">AZ Req:</div>
<div class="t dvmb" style="top:1020.5px;font-size:11.63px;line-height:15px;left:1750.5px;color:#ffffff;">136.746</div>
<div class="t dvmb" style="top:1020.5px;font-size:11.63px;line-height:15px;left:1834.5px;color:#ffffff;">EL Req:</div>
<div class="t dvmb" style="top:1033.5px;font-size:11.63px;line-height:15px;left:1659.5px;color:#ffffff;">Az Error:</div>
<div class="t dvmb" style="top:1033.5px;font-size:11.63px;line-height:15px;left:1750.5px;color:#ffffff;">0.062</div>
<div class="t dvmb" style="top:1033.5px;font-size:11.63px;line-height:15px;left:1834.5px;color:#ffffff;">EL Error:</div>
<div class="t dvmb" style="top:1046.5px;font-size:11.63px;line-height:15px;left:1659.5px;color:#ffffff;">Az Offset:</div>
<div class="t dvmb" style="top:1046.5px;font-size:11.63px;line-height:15px;left:1750.5px;color:#ffffff;">-0.1750</div>
<div class="t dvmb" style="top:1046.5px;font-size:11.63px;line-height:15px;left:1834.5px;color:#ffffff;">EL Offset:</div>
<div class="t dvmb" style="top:1059.5px;font-size:11.63px;line-height:15px;left:1659.5px;color:#ffffff;">Az Min:</div>
<div class="t dvmb" style="top:1059.5px;font-size:11.63px;line-height:15px;left:1750.5px;color:#ffffff;">120.000</div>
<div class="t dvmb" style="top:1059.5px;font-size:11.63px;line-height:15px;left:1834.5px;color:#ffffff;">EL Min:</div>
<div class="t dvmb" style="top:1072.5px;font-size:11.63px;line-height:15px;left:1659.5px;color:#ffffff;">Az Max:</div>
<div class="t dvmb" style="top:1072.5px;font-size:11.63px;line-height:15px;left:1750.5px;color:#ffffff;">240.000</div>
<div class="t dvmb" style="top:1072.5px;font-size:11.63px;line-height:15px;left:1834.5px;color:#ffffff;">EL Max:</div>
<div class="t dvmb" style="top:1085.5px;font-size:11.63px;line-height:15px;left:1659.5px;color:#ffffff;">DC Pos:</div>
<div class="t dvmb" style="top:1085.5px;font-size:11.63px;line-height:15px;left:1750.5px;color:#ffffff;">1596 mV</div>
<div class="t dvmb" style="top:1085.5px;font-size:11.63px;line-height:15px;left:1834.5px;color:#ffffff;">DC Pos:</div>
<div class="t dvmb" style="top:1085.5px;font-size:11.63px;line-height:15px;left:1918.5px;color:#ffffff;">2</div>
<div class="t dvmb" style="top:1098.5px;font-size:11.63px;line-height:15px;left:1659.5px;color:#ffffff;">DC Ref:</div>
<div class="t dvmb" style="top:1098.5px;font-size:11.63px;line-height:15px;left:1743.5px;color:#ffffff;">10000 mV</div>
<div class="t dvmb" style="top:1098.5px;font-size:11.63px;line-height:15px;left:1834.5px;color:#ffffff;">DC REF:</div>
<div class="t dvmb" style="top:1098.5px;font-size:11.63px;line-height:15px;left:1911.5px;color:#ffffff;">49</div>
<div class="t dvmb" style="top:1111.5px;font-size:11.63px;line-height:15px;left:1659.5px;color:#ffffff;">Curr Mov:</div>
<div class="t dvmb" style="top:1111.5px;font-size:11.63px;line-height:15px;left:1757.5px;color:#ffffff;">&lt;&lt;&lt;</div>
<div class="t dvmb" style="top:1111.5px;font-size:11.63px;line-height:15px;left:1834.5px;color:#ffffff;">Curr Mov:</div>
<div class="t dvmb" style="top:1124.5px;font-size:11.63px;line-height:15px;left:1659.5px;color:#ffffff;">Last Mov:</div>
<div class="t dvmb" style="top:1124.5px;font-size:11.63px;line-height:15px;left:1743.5px;color:#ffffff;">00:00:00</div>
<div class="t dvmb" style="top:1124.5px;font-size:11.63px;line-height:15px;left:1834.5px;color:#ffffff;">Last Mov:</div>
<div class="t dvmb" style="top:1124.5px;font-size:11.63px;line-height:15px;left:1911.5px;color:#ffffff;">00</div>
<div class="t dvmb" style="top:1124.5px;font-size:11.63px;line-height:15px;left:1813.5px;color:#ffffff;">&lt;</div>
<div class="t dvm" style="top:1150.5px;font-size:11.63px;line-height:15px;left:1624.5px;color:#00cd00;">Tracking: MOON</div>
<div class="t dvm" style="top:1150.5px;font-size:11.63px;line-height:15px;left:1792.5px;color:#00cd00;">Status: RUNNING...</div>
<div style="left:1617.5px;top:1164px;width:322px;height:13px;background:#aaaaaa;"></div>
<div class="t dvm" style="top:1163.5px;font-size:11.63px;line-height:15px;left:1617.5px;color:#000;">Keys: Start/Stop=O, Quit=Q</div>
<div style="left:837px;top:1035px;width:479px;height:145px;background:#9aa0b5;box-shadow:inset 2px 2px 0 #d3d6e3,inset -2px -2px 0 #727889;"></div>
<div style="left:841px;top:1039px;width:471px;height:137px;background:#fff;box-shadow:inset 1px 1px 0 #727889,inset -1px -1px 0 #d3d6e3;"></div>
<div style="left:837px;top:1059px;width:5px;height:1px;background:#727889;"></div>
<div style="left:837px;top:1060px;width:5px;height:1px;background:#d3d6e3;"></div>
<div style="left:1311px;top:1059px;width:5px;height:1px;background:#727889;"></div>
<div style="left:1311px;top:1060px;width:5px;height:1px;background:#d3d6e3;"></div>
<div style="left:837px;top:1155px;width:5px;height:1px;background:#727889;"></div>
<div style="left:837px;top:1156px;width:5px;height:1px;background:#d3d6e3;"></div>
<div style="left:1311px;top:1155px;width:5px;height:1px;background:#727889;"></div>
<div style="left:1311px;top:1156px;width:5px;height:1px;background:#d3d6e3;"></div>
<div style="left:861px;top:1175px;width:1px;height:5px;background:#727889;"></div>
<div style="left:862px;top:1175px;width:1px;height:5px;background:#d3d6e3;"></div>
<div style="left:1291px;top:1175px;width:1px;height:5px;background:#727889;"></div>
<div style="left:1292px;top:1175px;width:1px;height:5px;background:#d3d6e3;"></div>
<div style="left:842px;top:1040px;width:469px;height:20px;background:#9ba1b6;"></div>
<div style="left:842px;top:1040px;width:20px;height:20px;background:#9ba1b6;box-shadow:inset 1px 1px 0 #d3d6e3,inset -1px -1px 0 #727889;"></div>
<div style="left:845px;top:1047px;width:12px;height:5px;background:#9ba1b6;box-shadow:inset 1px 1px 0 #d3d6e3,inset -1px -1px 0 #727889;"></div>
<div style="left:1291px;top:1040px;width:20px;height:20px;background:#9ba1b6;box-shadow:inset 1px 1px 0 #d3d6e3,inset -1px -1px 0 #727889;"></div>
<div style="left:1295px;top:1044px;width:11px;height:11px;background:#9ba1b6;box-shadow:inset 1px 1px 0 #d3d6e3,inset -1px -1px 0 #727889;"></div>
<div style="left:1271px;top:1040px;width:20px;height:20px;background:#9ba1b6;box-shadow:inset 1px 1px 0 #d3d6e3,inset -1px -1px 0 #727889;"></div>
<div style="left:1278px;top:1047px;width:5px;height:5px;background:#9ba1b6;box-shadow:inset 1px 1px 0 #d3d6e3,inset -1px -1px 0 #727889;"></div>
<div style="left:862px;top:1040px;width:409px;height:20px;background:#9ba1b6;box-shadow:inset 1px 1px 0 #d3d6e3,inset -1px -1px 0 #727889;"></div>
<div class="t dvb" style="top:1042px;font-size:13px;line-height:17px;letter-spacing:-0.06px;left:869.6px;color:#000000;white-space:pre;">Terminal - root@eb3frn:/mnt/root/.wine/drive_c/WSJT9</div>
<div style="left:842px;top:1060px;width:469px;height:22px;background:#afb3c8;"></div>
<div style="left:842px;top:1060px;width:469px;height:22px;overflow:hidden">
<div class="t dv" style="top:1.8px;font-size:14px;line-height:18px;letter-spacing:-0.81px;left:8.2px;color:#000;"><u>F</u>ile</div>
<div class="t dv" style="top:1.8px;font-size:14px;line-height:18px;letter-spacing:-1.04px;left:42px;color:#000;"><u>E</u>dit</div>
<div class="t dv" style="top:1.8px;font-size:14px;line-height:18px;letter-spacing:-1.24px;left:78px;color:#000;"><u>V</u>iew</div>
<div class="t dv" style="top:1.8px;font-size:14px;line-height:18px;letter-spacing:-0.6px;left:120.3px;color:#000;"><u>T</u>erminal</div>
<div class="t dv" style="top:1.8px;font-size:14px;line-height:18px;letter-spacing:-0.16px;left:187.4px;color:#000;">T<u>a</u>bs</div>
<div class="t dv" style="top:1.8px;font-size:14px;line-height:18px;letter-spacing:-1.14px;left:230px;color:#000;"><u>H</u>elp</div>
</div>
<div style="left:842px;top:1082px;width:457.5px;height:93px;background:#fff;"></div>
<div class="t dvm" style="top:1082.5px;font-size:11.63px;line-height:15px;left:842.5px;color:#000;">Sending</div>
<div class="t dvm" style="top:1082.5px;font-size:11.63px;line-height:15px;left:898.5px;color:#000;">432.025239MHz</div>
<div class="t dvm" style="top:1095.5px;font-size:11.63px;line-height:15px;left:842.5px;color:#000;">Sending</div>
<div class="t dvm" style="top:1095.5px;font-size:11.63px;line-height:15px;left:898.5px;color:#000;">432.025237MHz</div>
<div class="t dvm" style="top:1108.5px;font-size:11.63px;line-height:15px;left:842.5px;color:#000;">Sending</div>
<div class="t dvm" style="top:1108.5px;font-size:11.63px;line-height:15px;left:898.5px;color:#000;">432.025235MHz</div>
<div class="t dvm" style="top:1121.5px;font-size:11.63px;line-height:15px;left:842.5px;color:#000;">Sending</div>
<div class="t dvm" style="top:1121.5px;font-size:11.63px;line-height:15px;left:898.5px;color:#000;">432.025234MHz</div>
<div class="t dvm" style="top:1134.5px;font-size:11.63px;line-height:15px;left:842.5px;color:#000;">Sending</div>
<div class="t dvm" style="top:1134.5px;font-size:11.63px;line-height:15px;left:898.5px;color:#000;">432.025231MHz</div>
<div class="t dvm" style="top:1147.5px;font-size:11.63px;line-height:15px;left:842.5px;color:#000;">Sending</div>
<div class="t dvm" style="top:1147.5px;font-size:11.63px;line-height:15px;left:898.5px;color:#000;">432.02523MHz</div>
<div style="left:842.5px;top:1161px;width:8px;height:13.5px;border:1px solid #00aa00;"></div>
<div style="left:1299.5px;top:1082px;width:11.5px;height:93px;background:#9aa0b5;box-shadow:inset 1px 1px 0 #727889,inset -1px -1px 0 #d3d6e3;"></div>
<div style="left:1300.5px;top:1095px;width:9.5px;height:67px;background:#8a90a4;"></div>
<div style="left:1300.5px;top:1095px;width:9.5px;height:48px;background:#9aa0b5;box-shadow:inset 1px 1px 0 #d3d6e3,inset -1px -1px 0 #727889;"></div>
<svg style="left:1301.75px;top:1087px" width="7" height="4"><path d="M0 4L3.5 0L7 4z" fill="#000"/></svg>
<svg style="left:1301.75px;top:1166px" width="7" height="4"><path d="M0 0L3.5 4L7 0z" fill="#000"/></svg>
<div style="left:1329.5px;top:1033.5px;width:248px;height:144px;background:#9aa0b5;box-shadow:inset 2px 2px 0 #d3d6e3,inset -2px -2px 0 #727889;"></div>
<div style="left:1333.5px;top:1037.5px;width:240px;height:136px;background:#fff;box-shadow:inset 1px 1px 0 #727889,inset -1px -1px 0 #d3d6e3;"></div>
<div style="left:1329.5px;top:1057.5px;width:5px;height:1px;background:#727889;"></div>
<div style="left:1329.5px;top:1058.5px;width:5px;height:1px;background:#d3d6e3;"></div>
<div style="left:1572.5px;top:1057.5px;width:5px;height:1px;background:#727889;"></div>
<div style="left:1572.5px;top:1058.5px;width:5px;height:1px;background:#d3d6e3;"></div>
<div style="left:1329.5px;top:1152.5px;width:5px;height:1px;background:#727889;"></div>
<div style="left:1329.5px;top:1153.5px;width:5px;height:1px;background:#d3d6e3;"></div>
<div style="left:1572.5px;top:1152.5px;width:5px;height:1px;background:#727889;"></div>
<div style="left:1572.5px;top:1153.5px;width:5px;height:1px;background:#d3d6e3;"></div>
<div style="left:1353.5px;top:1172.5px;width:1px;height:5px;background:#727889;"></div>
<div style="left:1354.5px;top:1172.5px;width:1px;height:5px;background:#d3d6e3;"></div>
<div style="left:1552.5px;top:1172.5px;width:1px;height:5px;background:#727889;"></div>
<div style="left:1553.5px;top:1172.5px;width:1px;height:5px;background:#d3d6e3;"></div>
<div style="left:1334.5px;top:1038.5px;width:238px;height:20px;background:#9ba1b6;"></div>
<div style="left:1334.5px;top:1038.5px;width:20px;height:20px;background:#9ba1b6;box-shadow:inset 1px 1px 0 #d3d6e3,inset -1px -1px 0 #727889;"></div>
<div style="left:1337.5px;top:1045.5px;width:12px;height:5px;background:#9ba1b6;box-shadow:inset 1px 1px 0 #d3d6e3,inset -1px -1px 0 #727889;"></div>
<div style="left:1552.5px;top:1038.5px;width:20px;height:20px;background:#9ba1b6;box-shadow:inset 1px 1px 0 #d3d6e3,inset -1px -1px 0 #727889;"></div>
<div style="left:1556.5px;top:1042.5px;width:11px;height:11px;background:#9ba1b6;box-shadow:inset 1px 1px 0 #d3d6e3,inset -1px -1px 0 #727889;"></div>
<div style="left:1532.5px;top:1038.5px;width:20px;height:20px;background:#9ba1b6;box-shadow:inset 1px 1px 0 #d3d6e3,inset -1px -1px 0 #727889;"></div>
<div style="left:1539.5px;top:1045.5px;width:5px;height:5px;background:#9ba1b6;box-shadow:inset 1px 1px 0 #d3d6e3,inset -1px -1px 0 #727889;"></div>
<div style="left:1354.5px;top:1038.5px;width:178px;height:20px;background:#9ba1b6;box-shadow:inset 1px 1px 0 #d3d6e3,inset -1px -1px 0 #727889;"></div>
<div class="t dvb" style="top:1040.5px;font-size:13px;line-height:17px;left:1359.4px;color:#000000;white-space:pre;">Terminal - root@eb3frn</div>
<div style="left:1334.5px;top:1058px;width:238px;height:22px;overflow:hidden">
<div style="left:0px;top:0px;width:238px;height:22px;background:#afb3c8;"></div>
<div class="t dv" style="top:2px;font-size:14px;line-height:18px;letter-spacing:-0.81px;left:7.5px;color:#000;"><u>F</u>ile</div>
<div class="t dv" style="top:2px;font-size:14px;line-height:18px;letter-spacing:-1.04px;left:41.5px;color:#000;"><u>E</u>dit</div>
<div class="t dv" style="top:2px;font-size:14px;line-height:18px;letter-spacing:-1.24px;left:77.5px;color:#000;"><u>V</u>iew</div>
<div class="t dv" style="top:2px;font-size:14px;line-height:18px;letter-spacing:-0.6px;left:119.5px;color:#000;"><u>T</u>erminal</div>
<div class="t dv" style="top:2px;font-size:14px;line-height:18px;letter-spacing:-0.16px;left:187px;color:#000;">T<u>a</u>bs</div>
<div class="t dv" style="top:2px;font-size:14px;line-height:18px;letter-spacing:-1.14px;left:229.5px;color:#000;"><u>H</u>elp</div>
</div>
<div style="left:1334.5px;top:1080px;width:227.5px;height:93px;background:#fff;"></div>
<div class="t dvm" style="top:1080.5px;font-size:11.63px;line-height:15px;left:1335.4px;color:#000;">10368025237</div>
<div class="t dvm" style="top:1080.5px;font-size:11.63px;line-height:15px;left:1433.4px;color:#000;">1237</div>
<div class="t dvm" style="top:1080.5px;font-size:11.63px;line-height:15px;left:1482.4px;color:#000;">3436</div>
<div class="t dvm" style="top:1093.5px;font-size:11.63px;line-height:15px;left:1335.4px;color:#000;">10368025235</div>
<div class="t dvm" style="top:1093.5px;font-size:11.63px;line-height:15px;left:1433.4px;color:#000;">1235</div>
<div class="t dvm" style="top:1093.5px;font-size:11.63px;line-height:15px;left:1482.4px;color:#000;">3434</div>
<div class="t dvm" style="top:1106.5px;font-size:11.63px;line-height:15px;left:1335.4px;color:#000;">10368025234</div>
<div class="t dvm" style="top:1106.5px;font-size:11.63px;line-height:15px;left:1433.4px;color:#000;">1234</div>
<div class="t dvm" style="top:1106.5px;font-size:11.63px;line-height:15px;left:1482.4px;color:#000;">3433</div>
<div class="t dvm" style="top:1119.5px;font-size:11.63px;line-height:15px;left:1335.4px;color:#000;">10368025234</div>
<div class="t dvm" style="top:1119.5px;font-size:11.63px;line-height:15px;left:1433.4px;color:#000;">1234</div>
<div class="t dvm" style="top:1119.5px;font-size:11.63px;line-height:15px;left:1482.4px;color:#000;">3433</div>
<div class="t dvm" style="top:1132.5px;font-size:11.63px;line-height:15px;left:1335.4px;color:#000;">10368025231</div>
<div class="t dvm" style="top:1132.5px;font-size:11.63px;line-height:15px;left:1433.4px;color:#000;">1231</div>
<div class="t dvm" style="top:1132.5px;font-size:11.63px;line-height:15px;left:1482.4px;color:#000;">3430</div>
<div class="t dvm" style="top:1145.5px;font-size:11.63px;line-height:15px;left:1335.4px;color:#000;">10368025230</div>
<div class="t dvm" style="top:1145.5px;font-size:11.63px;line-height:15px;left:1433.4px;color:#000;">1230</div>
<div class="t dvm" style="top:1145.5px;font-size:11.63px;line-height:15px;left:1482.4px;color:#000;">3428</div>
<div style="left:1335px;top:1158.5px;width:8px;height:13.5px;border:1px solid #00aa00;"></div>
<div style="left:1562px;top:1080px;width:11px;height:93px;background:#9aa0b5;box-shadow:inset 1px 1px 0 #727889,inset -1px -1px 0 #d3d6e3;"></div>
<div style="left:1563px;top:1093px;width:9px;height:67px;background:#8a90a4;"></div>
<div style="left:1563px;top:1092px;width:9px;height:49px;background:#9aa0b5;box-shadow:inset 1px 1px 0 #d3d6e3,inset -1px -1px 0 #727889;"></div>
<svg style="left:1564px;top:1085px" width="7" height="4"><path d="M0 4L3.5 0L7 4z" fill="#000"/></svg>
<svg style="left:1564px;top:1164px" width="7" height="4"><path d="M0 0L3.5 4L7 0z" fill="#000"/></svg>
</div></body></html>
